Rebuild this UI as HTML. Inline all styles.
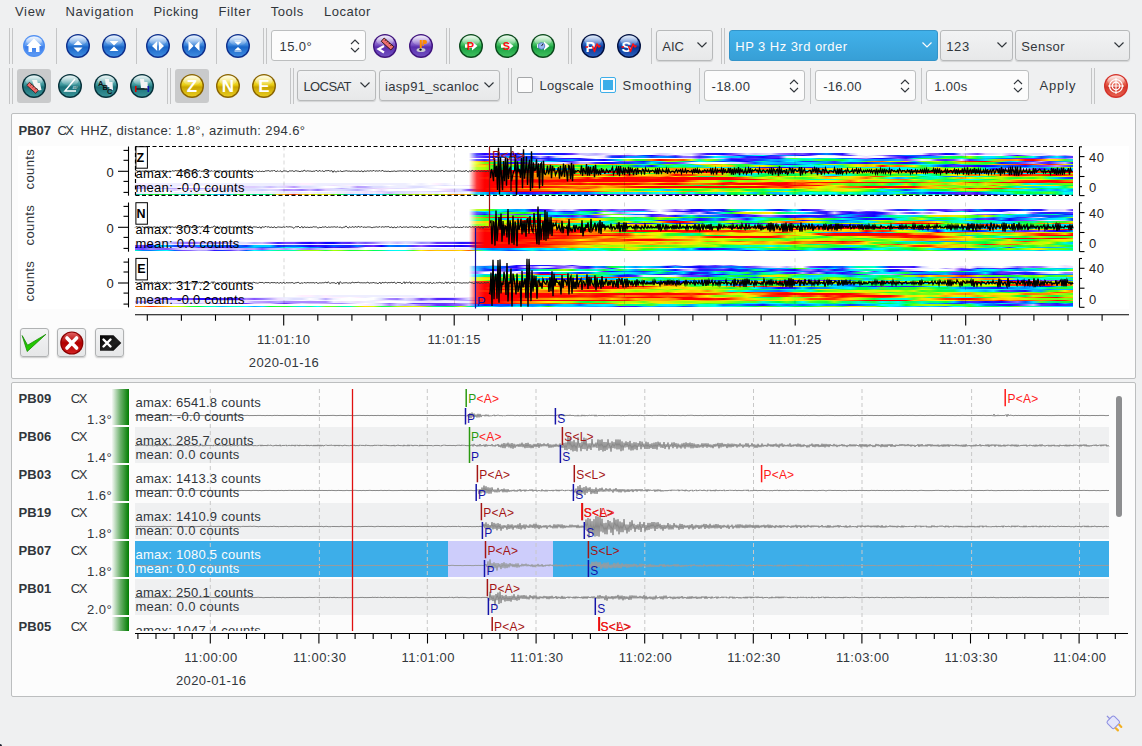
<!DOCTYPE html>
<html><head><meta charset="utf-8"><style>
html,body{margin:0;padding:0}
body{width:1142px;height:746px;overflow:hidden;position:relative;background:#eff0f1;font-family:"Liberation Sans", sans-serif;}
.t{position:absolute;white-space:nowrap;line-height:1;}
svg{overflow:visible}
</style></head><body>
<div class="t" style="left:15.0px;top:4.7px;font-size:13px;color:#31363b;font-weight:normal;letter-spacing:0.68px;">View</div>
<div class="t" style="left:65.4px;top:4.7px;font-size:13px;color:#31363b;font-weight:normal;letter-spacing:0.75px;">Navigation</div>
<div class="t" style="left:153.4px;top:4.7px;font-size:13px;color:#31363b;font-weight:normal;letter-spacing:0.50px;">Picking</div>
<div class="t" style="left:218.5px;top:4.7px;font-size:13px;color:#31363b;font-weight:normal;letter-spacing:0.62px;">Filter</div>
<div class="t" style="left:270.7px;top:4.7px;font-size:13px;color:#31363b;font-weight:normal;letter-spacing:0.56px;">Tools</div>
<div class="t" style="left:324.0px;top:4.7px;font-size:13px;color:#31363b;font-weight:normal;letter-spacing:0.50px;">Locator</div>
<div style="position:absolute;left:9px;top:28px;width:1px;height:36px;background:#c4c5c6"></div><div style="position:absolute;left:12px;top:28px;width:1px;height:36px;background:#c4c5c6"></div>
<div style="position:absolute;left:56px;top:28px;width:1px;height:36px;background:#c4c5c6"></div>
<div style="position:absolute;left:136px;top:28px;width:1px;height:36px;background:#c4c5c6"></div>
<div style="position:absolute;left:216px;top:28px;width:1px;height:36px;background:#c4c5c6"></div>
<div style="position:absolute;left:651px;top:28px;width:1px;height:36px;background:#c4c5c6"></div>
<div style="position:absolute;left:263px;top:28px;width:1px;height:36px;background:#c4c5c6"></div><div style="position:absolute;left:266px;top:28px;width:1px;height:36px;background:#c4c5c6"></div>
<div style="position:absolute;left:446px;top:28px;width:1px;height:36px;background:#c4c5c6"></div><div style="position:absolute;left:449px;top:28px;width:1px;height:36px;background:#c4c5c6"></div>
<div style="position:absolute;left:568px;top:28px;width:1px;height:36px;background:#c4c5c6"></div><div style="position:absolute;left:571px;top:28px;width:1px;height:36px;background:#c4c5c6"></div>
<div style="position:absolute;left:721px;top:28px;width:1px;height:36px;background:#c4c5c6"></div><div style="position:absolute;left:724px;top:28px;width:1px;height:36px;background:#c4c5c6"></div>
<div style="position:absolute;left:9px;top:68px;width:1px;height:36px;background:#c4c5c6"></div><div style="position:absolute;left:12px;top:68px;width:1px;height:36px;background:#c4c5c6"></div>
<div style="position:absolute;left:167px;top:68px;width:1px;height:36px;background:#c4c5c6"></div><div style="position:absolute;left:170px;top:68px;width:1px;height:36px;background:#c4c5c6"></div>
<div style="position:absolute;left:290px;top:68px;width:1px;height:36px;background:#c4c5c6"></div><div style="position:absolute;left:293px;top:68px;width:1px;height:36px;background:#c4c5c6"></div>
<div style="position:absolute;left:508px;top:68px;width:1px;height:36px;background:#c4c5c6"></div><div style="position:absolute;left:511px;top:68px;width:1px;height:36px;background:#c4c5c6"></div>
<div style="position:absolute;left:1091px;top:68px;width:1px;height:36px;background:#c4c5c6"></div><div style="position:absolute;left:1094px;top:68px;width:1px;height:36px;background:#c4c5c6"></div>
<div style="position:absolute;left:699px;top:68px;width:1px;height:36px;background:#c4c5c6"></div>
<div style="position:absolute;left:810px;top:68px;width:1px;height:36px;background:#c4c5c6"></div>
<div style="position:absolute;left:921px;top:68px;width:1px;height:36px;background:#c4c5c6"></div>
<div style="position:absolute;left:17px;top:69px;width:34px;height:34px;background:#c9cacb;border-radius:3px"></div>
<div style="position:absolute;left:175px;top:69px;width:34px;height:34px;background:#c9cacb;border-radius:3px"></div>
<div style="position:absolute;left:271px;top:30px;width:95px;height:31px;background:#fcfcfc;border:1px solid #bcbebf;border-radius:3px;box-sizing:border-box;"></div><div class="t" style="left:279.5px;top:39.7px;font-size:13px;color:#31363b;font-weight:normal;letter-spacing:0.40px;">15.0°</div><svg style="position:absolute;left:349px;top:36.5px" width="12" height="18"><path d="M2 7 L6 3 L10 7 M2 11 L6 15 L10 11" fill="none" stroke="#31363b" stroke-width="1.1"/></svg>
<div style="position:absolute;left:656px;top:30px;width:57px;height:31px;background:linear-gradient(#f2f3f4,#e7e8e9);border:1px solid #b7b9ba;border-radius:3px;box-sizing:border-box;box-shadow:0 1px 1px rgba(0,0,0,0.12);"></div><div class="t" style="left:662.3px;top:40.0px;font-size:13px;color:#31363b;font-weight:normal;letter-spacing:-0.09px;">AIC</div><svg style="position:absolute;left:695.5px;top:41.0px" width="12" height="8"><path d="M1.5 1.5 L6 6 L10.5 1.5" fill="none" stroke="#31363b" stroke-width="1.2"/></svg>
<div style="position:absolute;left:729px;top:30px;width:209px;height:31px;background:linear-gradient(#41b1ea,#379fd6);border:1px solid #3394c9;border-radius:3px;box-sizing:border-box;"></div><div class="t" style="left:735.3px;top:40.0px;font-size:13px;color:#fcfcfc;font-weight:normal;letter-spacing:0.45px;">HP 3 Hz 3rd order</div><svg style="position:absolute;left:920.5px;top:41.0px" width="12" height="8"><path d="M1.5 1.5 L6 6 L10.5 1.5" fill="none" stroke="#fcfcfc" stroke-width="1.2"/></svg>
<div style="position:absolute;left:940px;top:30px;width:73px;height:31px;background:linear-gradient(#f2f3f4,#e7e8e9);border:1px solid #b7b9ba;border-radius:3px;box-sizing:border-box;box-shadow:0 1px 1px rgba(0,0,0,0.12);"></div><div class="t" style="left:946.2px;top:40.0px;font-size:13px;color:#31363b;font-weight:normal;letter-spacing:0.65px;">123</div><svg style="position:absolute;left:995.5px;top:41.0px" width="12" height="8"><path d="M1.5 1.5 L6 6 L10.5 1.5" fill="none" stroke="#31363b" stroke-width="1.2"/></svg>
<div style="position:absolute;left:1015px;top:30px;width:115px;height:31px;background:linear-gradient(#f2f3f4,#e7e8e9);border:1px solid #b7b9ba;border-radius:3px;box-sizing:border-box;box-shadow:0 1px 1px rgba(0,0,0,0.12);"></div><div class="t" style="left:1021.2px;top:40.0px;font-size:13px;color:#31363b;font-weight:normal;letter-spacing:0.44px;">Sensor</div><svg style="position:absolute;left:1112.5px;top:41.0px" width="12" height="8"><path d="M1.5 1.5 L6 6 L10.5 1.5" fill="none" stroke="#31363b" stroke-width="1.2"/></svg>
<div style="position:absolute;left:297px;top:70px;width:79px;height:31px;background:linear-gradient(#f2f3f4,#e7e8e9);border:1px solid #b7b9ba;border-radius:3px;box-sizing:border-box;box-shadow:0 1px 1px rgba(0,0,0,0.12);"></div><div class="t" style="left:303.5px;top:80.0px;font-size:13px;color:#31363b;font-weight:normal;letter-spacing:-0.61px;">LOCSAT</div><svg style="position:absolute;left:358.5px;top:81.0px" width="12" height="8"><path d="M1.5 1.5 L6 6 L10.5 1.5" fill="none" stroke="#31363b" stroke-width="1.2"/></svg>
<div style="position:absolute;left:379px;top:70px;width:121px;height:31px;background:linear-gradient(#f2f3f4,#e7e8e9);border:1px solid #b7b9ba;border-radius:3px;box-sizing:border-box;box-shadow:0 1px 1px rgba(0,0,0,0.12);"></div><div class="t" style="left:385.0px;top:80.0px;font-size:13px;color:#31363b;font-weight:normal;letter-spacing:0.32px;">iasp91_scanloc</div><svg style="position:absolute;left:482.5px;top:81.0px" width="12" height="8"><path d="M1.5 1.5 L6 6 L10.5 1.5" fill="none" stroke="#31363b" stroke-width="1.2"/></svg>
<div style="position:absolute;left:517px;top:77px;width:16px;height:16px;border:1px solid #a5a7a9;border-radius:2px;box-sizing:border-box;background:#fcfcfc;"></div>
<div class="t" style="left:539.4px;top:79.4px;font-size:13px;color:#31363b;font-weight:normal;letter-spacing:0.32px;">Logscale</div>
<div style="position:absolute;left:600px;top:77px;width:16px;height:16px;border:1px solid #a5a7a9;border-radius:2px;box-sizing:border-box;background:#fcfcfc;border-color:#3daee9;"></div><div style="position:absolute;left:603px;top:80px;width:10px;height:10px;background:#3daee9"></div>
<div class="t" style="left:622.4px;top:79.4px;font-size:13px;color:#31363b;font-weight:normal;letter-spacing:0.87px;">Smoothing</div>
<div style="position:absolute;left:704px;top:70px;width:101px;height:31px;background:#fcfcfc;border:1px solid #bcbebf;border-radius:3px;box-sizing:border-box;"></div><div class="t" style="left:711.5px;top:79.7px;font-size:13px;color:#31363b;font-weight:normal;letter-spacing:0.30px;">-18.00</div><svg style="position:absolute;left:788px;top:76.5px" width="12" height="18"><path d="M2 7 L6 3 L10 7 M2 11 L6 15 L10 11" fill="none" stroke="#31363b" stroke-width="1.1"/></svg>
<div style="position:absolute;left:815px;top:70px;width:101px;height:31px;background:#fcfcfc;border:1px solid #bcbebf;border-radius:3px;box-sizing:border-box;"></div><div class="t" style="left:823.2px;top:79.7px;font-size:13px;color:#31363b;font-weight:normal;letter-spacing:0.30px;">-16.00</div><svg style="position:absolute;left:899px;top:76.5px" width="12" height="18"><path d="M2 7 L6 3 L10 7 M2 11 L6 15 L10 11" fill="none" stroke="#31363b" stroke-width="1.1"/></svg>
<div style="position:absolute;left:926px;top:70px;width:103px;height:31px;background:#fcfcfc;border:1px solid #bcbebf;border-radius:3px;box-sizing:border-box;"></div><div class="t" style="left:934.3px;top:79.7px;font-size:13px;color:#31363b;font-weight:normal;letter-spacing:0.30px;">1.00s</div><svg style="position:absolute;left:1012px;top:76.5px" width="12" height="18"><path d="M2 7 L6 3 L10 7 M2 11 L6 15 L10 11" fill="none" stroke="#31363b" stroke-width="1.1"/></svg>
<div class="t" style="left:1039.4px;top:79.4px;font-size:13px;color:#31363b;font-weight:normal;letter-spacing:0.87px;">Apply</div>
<div style="position:absolute;left:11px;top:113px;width:1125px;height:266px;background:#fcfcfc;border:1px solid #bcbebf;border-radius:2px;box-sizing:border-box"></div>
<div style="position:absolute;left:11px;top:382px;width:1125px;height:315px;background:#fcfcfc;border:1px solid #bcbebf;border-radius:2px;box-sizing:border-box"></div>
<div class="t" style="left:18.6px;top:123.6px;font-size:13px;color:#31363b;font-weight:bold;letter-spacing:-0.04px;">PB07</div>
<div class="t" style="left:57.4px;top:123.6px;font-size:13px;color:#31363b;font-weight:normal;letter-spacing:-1.56px;">CX</div>
<div class="t" style="left:80.5px;top:123.6px;font-size:13px;color:#31363b;font-weight:normal;letter-spacing:0.40px;">HHZ, distance: 1.8°, azimuth: 294.6°</div>
<div style="position:absolute;left:18px;top:146px;width:1111px;height:163px;background:#ffffff"></div>
<div style="position:absolute;left:135px;top:153.0px;width:938px;height:42.69999999999999px;overflow:hidden"><div style="height:1.525px;background:linear-gradient(90deg,#fff,#fff,#fff,#fff,#fff,#fff,#fff,#fff,#fff,#fff,#fff,#fff,#fff,#fff,#fff,#fff,#fff,#fff,#fff,#fff,#fff,#fff,#fff,#fff,#fff,#fff,#fff,#fff,#fff,#fff,#fff,#fff,#fff,#fff,#fff,#fff,#fff,#fff,#fff,#fff,#fff,#fff,#fff,#54f,#20f,#52f,#12f,#11f,#10f,#08f,#15f,#42f,#14f,#11f,#21f,#63f,#cbf,#ccf,#baf,#dcf,#eef,#fff,#edf,#fff,#fff,#fff,#dcf,#ddf,#fff,#eef,#ddf,#97f,#31f,#21f,#11f,#63f,#a8f,#ddf,#cbf,#dcf,#ddf,#97f,#85f,#63f,#75f,#31f,#14f,#08f,#13f,#21f,#ccf,#fff,#fff,#fff,#fff,#fff,#fff,#fff,#fff,#eef,#85f,#75f,#10f,#12f,#ddf,#a8f,#74f,#dcf,#ddf,#eef,#cbf,#ddf,#eef,#ddf,#ddf,#fff,#fff,#fff,#fff)"></div><div style="height:1.525px;background:linear-gradient(90deg,#fff,#fff,#fff,#fff,#fff,#fff,#fff,#fff,#fff,#fff,#fff,#fff,#fff,#fff,#fff,#fff,#fff,#fff,#fff,#fff,#fff,#fff,#fff,#fff,#fff,#fff,#fff,#fff,#fff,#fff,#fff,#fff,#fff,#fff,#fff,#fff,#fff,#fff,#fff,#fff,#fff,#fff,#fff,#46f,#97f,#cbf,#85f,#74f,#53f,#ddf,#edf,#fff,#fff,#fff,#eef,#fff,#fff,#cbf,#ccf,#eef,#75f,#63f,#74f,#97f,#05f,#10f,#85f,#baf,#74f,#ddf,#fff,#86f,#edf,#fff,#b9f,#96f,#21f,#08f,#0df,#0fe,#12f,#07f,#09f,#06f,#20f,#74f,#fff,#eef,#ddf,#74f,#63f,#ddf,#fff,#ddf,#a8f,#53f,#13f,#07f,#06f,#52f,#21f,#a8f,#eef,#dcf,#cbf,#fff,#fff,#fff,#fff,#fff,#96f,#21f,#97f,#eef,#eef,#a8f,#ddf,#a8f,#fef)"></div><div style="height:1.525px;background:linear-gradient(90deg,#fff,#fff,#fff,#fff,#fff,#fff,#fff,#fff,#fff,#fff,#fff,#fff,#fff,#fff,#fff,#fff,#fff,#fff,#fff,#fff,#fff,#fff,#fff,#fff,#fff,#fff,#fff,#fff,#fff,#fff,#fff,#fff,#fff,#fff,#fff,#fff,#fff,#fff,#fff,#fff,#fff,#fff,#fff,#75f,#42f,#11f,#05f,#0af,#12f,#14f,#11f,#cbf,#42f,#ccf,#fff,#fff,#fff,#fff,#fff,#edf,#14f,#12f,#09f,#09f,#09f,#14f,#08f,#07f,#13f,#86f,#86f,#42f,#06f,#0ef,#0ef,#0bf,#0cf,#12f,#31f,#10f,#42f,#52f,#eef,#fff,#fff,#fff,#fff,#fff,#fff,#fff,#fff,#fff,#edf,#fff,#fff,#97f,#52f,#20f,#13f,#09f,#0af,#0af,#0f5,#0f5,#1f3,#af0,#0f6,#0ef,#0ef,#0f9,#0ff,#4f2,#0f6,#0ff,#14f,#09f,#0ef,#06f,#63f)"></div><div style="height:1.525px;background:linear-gradient(90deg,#fff,#fff,#fff,#fff,#fff,#fff,#fff,#fff,#fff,#fff,#fff,#fff,#fff,#fff,#fff,#fff,#fff,#fff,#fff,#fff,#fff,#fff,#fff,#fff,#fff,#fff,#fff,#fff,#fff,#fff,#fff,#fff,#fff,#fff,#fff,#fff,#fff,#fff,#fff,#fff,#fff,#fff,#fff,#fff,#eef,#fff,#fff,#fff,#74f,#07f,#12f,#13f,#21f,#06f,#31f,#21f,#21f,#a9f,#fff,#fff,#fff,#fff,#fff,#fff,#fff,#fff,#fff,#fff,#fff,#eef,#ddf,#97f,#cbf,#eef,#cbf,#42f,#63f,#42f,#53f,#14f,#31f,#20f,#0fa,#5f2,#0fd,#0ff,#0bf,#0f9,#0cf,#06f,#06f,#74f,#a8f,#21f,#10f,#13f,#85f,#31f,#0fb,#1f3,#2f3,#3f3,#6f1,#0f6,#0fe,#2f3,#1f3,#0bf,#09f,#06f,#05f,#52f,#53f,#53f,#42f,#b9f,#a8f,#86f,#cbf)"></div><div style="height:1.525px;background:linear-gradient(90deg,#fff,#fff,#fff,#fff,#fff,#fff,#fff,#fff,#fff,#fff,#fff,#fff,#fff,#fff,#fff,#fff,#fff,#fff,#fff,#fff,#fff,#fff,#fff,#fff,#fff,#fff,#fff,#fff,#fff,#fff,#fff,#fff,#fff,#fff,#fff,#fff,#fff,#fff,#fff,#fff,#fff,#fff,#fff,#65f,#32f,#85f,#ddf,#a8f,#52f,#53f,#09f,#97f,#12f,#14f,#07f,#09f,#13f,#21f,#14f,#20f,#07f,#0fc,#cf0,#2f3,#3f2,#f70,#f00,#f30,#f60,#f50,#df0,#0fa,#9f0,#5f2,#0bf,#11f,#10f,#42f,#31f,#05f,#0af,#09f,#0cf,#0ef,#0f8,#0fa,#5f2,#0f4,#1f3,#0f4,#0fe,#0cf,#08f,#0af,#08f,#09f,#0bf,#74f,#a9f,#eef,#ddf,#63f,#42f,#74f,#edf,#42f,#09f,#0df,#7f1,#f90,#f80,#fa0,#f10,#f00,#f70,#fe0,#fd0,#4f2,#0df)"></div><div style="height:1.525px;background:linear-gradient(90deg,#fff,#fff,#fff,#fff,#fff,#fff,#fff,#fff,#fff,#fff,#fff,#fff,#fff,#fff,#fff,#fff,#fff,#fff,#fff,#fff,#fff,#fff,#fff,#fff,#fff,#fff,#fff,#fff,#fff,#fff,#fff,#fff,#fff,#fff,#fff,#fff,#fff,#fff,#fff,#fff,#fff,#fff,#fff,#fd3,#f60,#f90,#bf0,#af0,#4f2,#0f8,#0fb,#0cf,#0ef,#09f,#11f,#53f,#edf,#fff,#fff,#fff,#fff,#74f,#85f,#53f,#11f,#0af,#0ff,#bf0,#8f1,#0f6,#15f,#0ef,#0fa,#08f,#13f,#08f,#12f,#10f,#0af,#0fa,#09f,#05f,#0ef,#0fe,#13f,#31f,#06f,#0af,#42f,#0fa,#0ef,#0fc,#4f2,#f80,#f60,#ee0,#8f0,#fd0,#0bf,#af0,#9f0,#cf0,#0f3,#9f0,#f60,#f10,#f00,#f00,#f70,#7f1,#0bf,#0fe,#14f,#53f,#cbf,#42f,#09f,#0af,#5f2)"></div><div style="height:1.525px;background:linear-gradient(90deg,#fff,#fff,#fff,#fff,#fff,#fff,#fff,#fff,#fff,#fff,#fff,#fff,#fff,#fff,#fff,#fff,#fff,#fff,#fff,#fff,#fff,#fff,#fff,#fff,#fff,#fff,#fff,#fff,#fff,#fff,#fff,#fff,#fff,#fff,#fff,#fff,#fff,#fff,#fff,#fff,#fff,#fff,#fff,#ef3,#7f1,#2f3,#0ef,#13f,#31f,#31f,#ddf,#eef,#ddf,#ddf,#eef,#74f,#baf,#baf,#42f,#10f,#20f,#05f,#13f,#07f,#05f,#0fd,#07f,#52f,#63f,#86f,#eef,#fff,#eef,#fff,#fff,#ddf,#ddf,#86f,#05f,#0bf,#0cf,#0af,#0af,#0bf,#0df,#0cf,#0bf,#08f,#14f,#08f,#13f,#14f,#20f,#06f,#09f,#07f,#31f,#10f,#12f,#09f,#0f4,#4f2,#0f4,#4f2,#bf0,#6f1,#6f1,#1f3,#0f5,#11f,#14f,#52f,#75f,#baf,#63f,#42f,#97f,#cbf,#21f)"></div><div style="height:1.525px;background:linear-gradient(90deg,#fff,#fff,#fff,#fff,#fff,#fff,#fff,#fff,#fff,#fff,#fff,#fff,#fff,#fff,#fff,#fff,#fff,#fff,#fff,#fff,#fff,#fff,#fff,#fff,#fff,#fff,#fff,#fff,#fff,#fff,#fff,#fff,#fff,#fff,#fff,#fff,#fff,#fff,#fff,#fff,#fff,#fff,#fff,#df3,#f90,#f90,#f90,#f90,#fd0,#fa0,#f30,#f70,#f70,#f80,#fa0,#f80,#fc0,#fb0,#fe0,#cf0,#f90,#fb0,#6f1,#5f2,#0fd,#6f1,#1f3,#8f1,#3f2,#0fc,#0f5,#fd0,#fd0,#f90,#bf0,#4f2,#0f5,#3f2,#0cf,#0cf,#06f,#07f,#31f,#13f,#0af,#0ef,#0f4,#bf0,#cf0,#7f1,#af0,#fd0,#8f0,#de0,#8f1,#0f5,#0f4,#0f7,#0fc,#0ff,#0ff,#0cf,#07f,#13f,#0df,#0f6,#0f5,#4f2,#fb0,#f90,#f70,#f40,#f00,#f30,#fa0,#f10,#f60,#fd0,#af0)"></div><div style="height:1.525px;background:linear-gradient(90deg,#fff,#fff,#fff,#fff,#fff,#fff,#fff,#fff,#fff,#fff,#fff,#fff,#fff,#fff,#fff,#fff,#fff,#fff,#fff,#fff,#fff,#fff,#fff,#fff,#fff,#fff,#fff,#fff,#fff,#fff,#fff,#fff,#fff,#fff,#fff,#fff,#fff,#fff,#fff,#fff,#fff,#fff,#fff,#ee3,#fd0,#3f2,#8f1,#6f1,#2f3,#0f5,#0f8,#0f6,#7f1,#1f3,#ee0,#4f2,#0f3,#0fe,#0f4,#2f3,#0f7,#0f5,#1f3,#06f,#09f,#10f,#0df,#0f6,#0fb,#0f7,#0df,#0cf,#7f1,#ee0,#fd0,#fb0,#0f4,#4f2,#bf0,#fe0,#9f0,#1f3,#0ff,#0f8,#0fc,#0fe,#0fd,#0ef,#0df,#0f8,#af0,#fe0,#fa0,#fd0,#f00,#fa0,#f60,#fa0,#fe0,#2f3,#0df,#07f,#11f,#53f,#42f,#31f,#10f,#10f,#11f,#07f,#13f,#14f,#11f,#08f,#63f,#85f,#b9f,#74f,#05f)"></div><div style="height:1.525px;background:linear-gradient(90deg,#fff,#fff,#fff,#fff,#fff,#fff,#fff,#fff,#fff,#fff,#fff,#fff,#fff,#fff,#fff,#fff,#fff,#fff,#fff,#fff,#fff,#fff,#fff,#fff,#fff,#fff,#fff,#fff,#fff,#fff,#fff,#fff,#fff,#fff,#fff,#fff,#fff,#fff,#fff,#fff,#fff,#fff,#fff,#bf3,#af0,#6f1,#0f9,#0ff,#0fa,#5f2,#fe0,#fe0,#9f0,#cf0,#fe0,#fd0,#9f0,#6f1,#0f8,#3f3,#4f2,#ee0,#3f2,#1f3,#0f7,#3f2,#1f3,#0f4,#4f2,#4f2,#2f3,#2f3,#0df,#0fd,#0df,#0fd,#0f7,#09f,#06f,#12f,#10f,#11f,#10f,#15f,#13f,#21f,#09f,#0af,#0cf,#0fb,#2f3,#0fa,#0ef,#0df,#0fc,#0ef,#0ef,#0fc,#4f2,#2f3,#7f1,#ee0,#0f5,#0f6,#0fa,#8f1,#3f2,#0af,#0af,#0af,#05f,#0fd,#0af,#0cf,#0af,#0f8,#5f2,#8f1,#de0)"></div><div style="height:1.525px;background:linear-gradient(90deg,#fff,#fff,#fff,#fff,#fff,#fff,#fff,#fff,#fff,#fff,#fff,#fff,#fff,#fff,#fff,#fff,#fff,#fff,#fff,#fff,#fff,#fff,#fff,#fff,#fff,#fff,#fff,#fff,#fff,#fff,#fff,#fff,#fff,#fff,#fff,#fff,#fff,#fff,#fff,#fff,#fff,#fff,#fff,#bf3,#af0,#4f2,#2f3,#0ff,#0fc,#0fc,#0fc,#2f3,#0fa,#0bf,#0df,#0df,#6f1,#9f0,#2f3,#5f2,#0fb,#0fd,#ee0,#fe0,#fd0,#8f1,#ee0,#fa0,#f80,#f90,#f90,#fe0,#f90,#fa0,#fb0,#af0,#5f2,#7f1,#fe0,#f50,#fa0,#fc0,#fc0,#fa0,#de0,#fa0,#f70,#fd0,#de0,#fd0,#fe0,#fd0,#4f2,#de0,#3f2,#0cf,#0fd,#0fe,#0ff,#3f2,#4f2,#fd0,#af0,#cf0,#bf0,#5f2,#1f3,#0fd,#11f,#74f,#edf,#eef,#dcf,#86f,#31f,#08f,#0af,#0df,#0cf)"></div><div style="height:1.525px;background:linear-gradient(90deg,#fff,#fff,#fff,#fff,#fff,#fff,#fff,#fff,#fff,#fff,#fff,#fff,#fff,#fff,#fff,#fff,#fff,#fff,#fff,#fff,#fff,#fff,#fff,#fff,#fff,#fff,#fff,#fff,#fff,#fff,#fff,#fff,#fff,#fff,#fff,#fff,#fff,#fff,#fff,#fff,#fff,#fff,#fff,#f33,#f00,#f00,#f00,#f00,#f00,#f00,#f10,#f60,#f70,#fb0,#fd0,#fd0,#9f0,#7f1,#cf0,#1f3,#0f8,#0f8,#0ff,#4f2,#0df,#2f3,#bf0,#8f1,#fb0,#f80,#fe0,#f40,#af0,#fa0,#fc0,#5f2,#0f6,#0f4,#0ff,#1f3,#0f6,#0f9,#0f7,#0cf,#0ef,#0fe,#0cf,#0f5,#0ef,#0fd,#0f3,#5f2,#6f1,#7f1,#0f3,#7f1,#7f1,#f90,#f70,#f60,#fb0,#f70,#f40,#f00,#f00,#f00,#fc0,#fb0,#fb0,#fb0,#f80,#f90,#cf0,#4f2,#0f6,#7f1,#0fe,#0cf,#0af)"></div><div style="height:1.525px;background:linear-gradient(90deg,#fff,#fff,#fff,#fff,#fff,#fff,#fff,#fff,#fff,#fff,#fff,#fff,#fff,#fff,#fff,#fff,#fff,#fff,#fff,#fff,#fff,#fff,#fff,#fff,#fff,#fff,#fff,#fff,#fff,#fff,#fff,#fff,#fff,#fff,#fff,#fff,#fff,#fff,#fff,#fff,#fff,#fff,#fff,#f33,#f00,#f00,#f00,#f00,#f00,#f00,#f30,#f40,#fa0,#f70,#f50,#f70,#f70,#f40,#f00,#f00,#f00,#f00,#f10,#fa0,#fe0,#fc0,#fa0,#f70,#fa0,#f70,#f40,#f00,#f00,#f00,#f00,#f00,#f50,#f10,#f70,#f40,#fa0,#f90,#f90,#fc0,#f60,#f90,#f60,#f00,#f70,#f70,#fc0,#fc0,#fc0,#fa0,#fa0,#fa0,#fa0,#f90,#f70,#f00,#f00,#f00,#f00,#f00,#f00,#f00,#f00,#f10,#f90,#f70,#fb0,#f60,#f00,#f00,#f40,#f00,#f00,#f00,#f00)"></div><div style="height:1.525px;background:linear-gradient(90deg,#fff,#fff,#fff,#fff,#fff,#fff,#fff,#fff,#fff,#fff,#fff,#fff,#fff,#fff,#fff,#fff,#fff,#fff,#fff,#fff,#fff,#fff,#fff,#fff,#fff,#fff,#fff,#fff,#fff,#fff,#fff,#fff,#fff,#fff,#fff,#fff,#fff,#fff,#fff,#fff,#fff,#fff,#fff,#f33,#f00,#f00,#f00,#f30,#f40,#fa0,#f80,#fe0,#cf0,#6f1,#8f0,#0f4,#5f2,#0f4,#0f7,#0ff,#0f5,#0f3,#af0,#1f3,#5f2,#2f3,#5f1,#fa0,#f80,#fa0,#fc0,#bf0,#fc0,#de0,#af0,#8f0,#0f8,#4f2,#0fe,#0f9,#3f3,#0ef,#0fe,#0f6,#7f1,#4f2,#0bf,#3f3,#8f0,#3f2,#0f7,#8f1,#4f2,#2f3,#6f1,#cf0,#5f2,#4f2,#de0,#de0,#1f3,#bf0,#4f2,#0f8,#0f5,#0f3,#0fe,#08f,#0fe,#0fb,#0bf,#0af,#0ef,#0df,#0f9,#0f5,#0f3,#5f2,#af0)"></div><div style="height:1.525px;background:linear-gradient(90deg,#fff,#fff,#fff,#fff,#fff,#fff,#fff,#fff,#fff,#fff,#fff,#fff,#fff,#fff,#fff,#fff,#fff,#fff,#fff,#fff,#fff,#fff,#fff,#fff,#fff,#fff,#fff,#fff,#fff,#fff,#fff,#fff,#fff,#fff,#fff,#fff,#fff,#fff,#fff,#fff,#fff,#fff,#fff,#f33,#f00,#f00,#f30,#f70,#f80,#f90,#f70,#fb0,#f90,#fc0,#f80,#f50,#f70,#f70,#f70,#f90,#f20,#f80,#f10,#f90,#fe0,#fb0,#fb0,#fa0,#f00,#f30,#f30,#fa0,#fa0,#f80,#fb0,#4f2,#0fa,#0cf,#0fa,#0f5,#0f5,#3f2,#1f3,#0f5,#2f3,#8f1,#bf0,#0fe,#0df,#0fa,#0fb,#2f3,#0f3,#7f1,#0f4,#1f3,#3f2,#0f7,#0f6,#0ff,#0fb,#0f4,#8f1,#fe0,#ee0,#f80,#f80,#ee0,#f90,#f70,#f10,#f00,#f10,#f40,#f30,#f00,#f00,#f30,#f60)"></div><div style="height:1.525px;background:linear-gradient(90deg,#fff,#fff,#fff,#fff,#fff,#fff,#fff,#fff,#fff,#fff,#fff,#fff,#fff,#fff,#fff,#fff,#fff,#fff,#fff,#fff,#fff,#fff,#fff,#fff,#fff,#fff,#fff,#fff,#fff,#fff,#fff,#fff,#fff,#fff,#fff,#fff,#fff,#fff,#fff,#fff,#fff,#fff,#fff,#f33,#f00,#f10,#f00,#f20,#f00,#f70,#f80,#f80,#f80,#fc0,#f90,#ee0,#de0,#de0,#cf0,#fe0,#8f1,#fe0,#f60,#f90,#f70,#f80,#fb0,#f50,#fd0,#f80,#cf0,#3f3,#0f8,#6f1,#9f0,#9f0,#1f3,#bf0,#0f6,#3f2,#fd0,#f80,#de0,#fe0,#bf0,#ee0,#de0,#f70,#f60,#de0,#fd0,#fd0,#fa0,#f40,#f50,#af0,#cf0,#de0,#bf0,#0f4,#0fc,#0ff,#08f,#07f,#0fc,#0f9,#0fe,#0f9,#3f2,#fd0,#fc0,#f80,#fc0,#de0,#af0,#6f1,#bf0,#fe0,#9f0)"></div><div style="height:1.525px;background:linear-gradient(90deg,#fff,#fff,#fff,#fff,#fff,#fff,#fff,#fff,#fff,#fff,#fff,#fff,#fff,#fff,#fff,#fff,#fff,#fff,#fff,#fff,#fff,#fff,#fff,#fff,#fff,#fff,#fff,#fff,#fff,#fff,#fff,#fff,#fff,#fff,#fff,#fff,#fff,#fff,#fff,#fff,#fff,#fff,#fff,#f33,#f10,#f20,#f50,#f60,#f70,#f30,#f70,#f80,#f60,#f60,#fa0,#f90,#f50,#f00,#f80,#f00,#f00,#f00,#f00,#f00,#f10,#f20,#f10,#f00,#f00,#f00,#f00,#f00,#f00,#f00,#f00,#f00,#f30,#f70,#8f0,#ee0,#8f0,#cf0,#7f1,#5f2,#2f3,#6f1,#bf0,#fb0,#fe0,#bf0,#de0,#fb0,#f60,#bf0,#4f2,#0ff,#0af,#0ef,#0f4,#0fa,#0fa,#0fc,#2f3,#bf0,#f90,#fe0,#9f0,#df0,#bf0,#af0,#3f3,#2f3,#5f2,#3f2,#9f0,#0fa,#0bf,#15f,#31f)"></div><div style="height:1.525px;background:linear-gradient(90deg,#fff,#fff,#fff,#fff,#fff,#fff,#fff,#fff,#fff,#fff,#fff,#fff,#fff,#fff,#fff,#fff,#fff,#fff,#fff,#fff,#fff,#fff,#fff,#fff,#fff,#fff,#fff,#fff,#fff,#fff,#fff,#fff,#fff,#fff,#fff,#fff,#fff,#fff,#fff,#fff,#fff,#fff,#fff,#f33,#f00,#f10,#f30,#f60,#f40,#f40,#f20,#f30,#f50,#f40,#f10,#f00,#f00,#f00,#f00,#f00,#f00,#f00,#f00,#f00,#f00,#f00,#f00,#f10,#f00,#f00,#f00,#f00,#f00,#f00,#f00,#f00,#f00,#f00,#f00,#f40,#fa0,#bf0,#bf0,#9f0,#7f1,#0f9,#0fa,#0fe,#0fd,#7f1,#fb0,#fc0,#ee0,#fd0,#de0,#fa0,#f70,#f70,#df0,#7f1,#0f9,#6f1,#0f5,#0f5,#0fc,#0ff,#0fd,#0f7,#1f3,#af0,#7f1,#fd0,#ee0,#fd0,#fe0,#9f0,#4f2,#1f3,#3f3)"></div><div style="height:1.525px;background:linear-gradient(90deg,#fff,#fff,#fff,#fff,#fff,#fff,#fff,#fff,#fff,#fff,#fff,#fff,#fff,#fff,#fff,#fff,#fff,#fff,#fff,#fff,#fff,#fff,#fff,#fff,#fff,#fff,#fff,#fff,#fff,#fff,#fff,#fff,#fff,#fff,#fff,#fff,#fff,#fff,#fff,#fff,#fff,#fff,#fff,#f33,#f00,#f00,#f10,#f00,#f00,#f00,#f00,#f00,#f00,#f00,#f00,#f00,#f00,#f00,#f00,#f00,#f00,#f00,#f00,#f00,#f00,#f00,#f00,#f00,#f00,#f00,#f70,#fc0,#de0,#cf0,#4f2,#3f2,#af0,#8f1,#8f0,#de0,#bf0,#8f0,#de0,#fb0,#f90,#fd0,#de0,#fe0,#ee0,#fb0,#f70,#fe0,#7f1,#7f1,#af0,#af0,#7f1,#2f3,#8f1,#5f2,#bf0,#6f1,#0f8,#0f9,#6f1,#5f2,#4f2,#5f2,#9f0,#7f1,#fb0,#f60,#f30,#f30,#f10,#f00,#f10,#f60,#f80)"></div><div style="height:1.525px;background:linear-gradient(90deg,#fff,#fff,#fff,#fff,#fff,#fff,#fff,#fff,#fff,#fff,#fff,#fff,#fff,#fff,#fff,#fff,#fff,#fff,#fff,#fff,#fff,#fff,#fff,#fff,#fff,#fff,#fff,#fff,#fff,#fff,#fff,#fff,#fff,#fff,#fff,#fff,#fff,#fff,#fff,#fff,#fff,#fff,#fff,#f33,#f00,#f00,#f00,#f00,#f00,#f10,#f20,#f10,#f20,#f40,#f20,#f70,#f50,#fc0,#fa0,#fa0,#fb0,#f90,#fa0,#f80,#f70,#fc0,#fd0,#f80,#f70,#fa0,#ee0,#de0,#cf0,#de0,#f50,#f00,#fa0,#f80,#f70,#f50,#f00,#f20,#f00,#f40,#f60,#f00,#f10,#f00,#f00,#f00,#f00,#f00,#f00,#f00,#f00,#f00,#f00,#f00,#f00,#f40,#f80,#f90,#fa0,#fb0,#fc0,#f30,#f20,#fa0,#f60,#f00,#f00,#f00,#f00,#f00,#f00,#f30,#f00,#f00,#f00)"></div><div style="height:1.525px;background:linear-gradient(90deg,#eef,#fef,#eef,#eef,#eef,#eef,#eef,#eef,#eef,#eef,#eef,#eef,#eef,#eef,#eef,#eef,#eef,#eef,#eef,#eef,#eef,#fef,#fef,#eef,#eef,#eef,#eef,#eef,#eef,#eef,#eef,#eef,#eef,#eef,#eef,#fff,#eef,#fff,#fef,#eef,#fff,#fff,#fff,#f33,#f00,#f00,#f00,#f00,#f00,#f20,#f50,#f30,#f30,#f20,#f30,#f10,#f00,#f20,#f00,#f00,#f00,#f00,#f00,#f00,#f40,#f50,#f00,#f00,#f00,#f40,#f70,#f70,#f50,#f30,#f00,#f20,#f00,#f00,#f00,#f00,#f00,#f00,#f00,#f50,#f30,#f90,#fb0,#f90,#6f1,#8f1,#4f2,#5f2,#5f2,#3f2,#9f0,#0f5,#0f9,#9f0,#0f5,#9f0,#9f0,#af0,#6f1,#ee0,#fb0,#bf0,#7f1,#de0,#9f0,#9f0,#6f1,#bf0,#0fa,#0ff,#0fa,#0f7,#3f3,#6f1,#5f2)"></div><div style="height:1.525px;background:linear-gradient(90deg,#ddf,#ddf,#ddf,#edf,#edf,#eef,#edf,#edf,#eef,#eef,#eef,#eef,#eef,#edf,#eef,#eef,#eef,#eef,#eef,#edf,#eef,#eef,#eef,#eef,#eef,#edf,#eef,#fef,#eef,#fff,#eef,#eef,#fff,#eef,#eef,#eef,#eef,#eef,#eef,#ddf,#eef,#eef,#edf,#f33,#f00,#f00,#f20,#f30,#f40,#f50,#f50,#fa0,#f90,#fa0,#fc0,#fc0,#fb0,#fc0,#fb0,#fc0,#f70,#fa0,#f90,#fe0,#fe0,#fd0,#de0,#de0,#9f0,#7f1,#5f2,#0f6,#5f2,#8f1,#4f2,#fe0,#de0,#de0,#fe0,#f90,#f40,#f00,#f20,#f00,#f10,#f10,#f00,#fa0,#fe0,#fd0,#3f2,#5f2,#1f3,#0f5,#5f2,#0f8,#9f0,#ee0,#2f3,#9f0,#fc0,#f90,#f90,#5f2,#bf0,#cf0,#8f1,#cf0,#f60,#fd0,#7f1,#6f1,#fe0,#ee0,#cf0,#fd0,#fc0,#0f4,#0f4)"></div><div style="height:1.525px;background:linear-gradient(90deg,#baf,#cbf,#ddf,#eef,#eef,#eef,#fff,#fff,#fff,#fff,#fff,#fef,#eef,#ddf,#dcf,#dcf,#ddf,#cbf,#ddf,#dcf,#b9f,#ddf,#ddf,#eef,#fff,#fff,#eef,#eef,#b9f,#baf,#ddf,#ddf,#eef,#eef,#eef,#ddf,#ddf,#eef,#fff,#fff,#fff,#fff,#fff,#f33,#f00,#f00,#f00,#f00,#f00,#f00,#f00,#f00,#f10,#f20,#f30,#f50,#f70,#f60,#f50,#fa0,#f90,#f60,#f30,#f10,#f00,#f00,#f00,#f00,#f00,#f00,#f00,#f00,#f00,#f00,#f00,#f00,#f00,#f00,#f00,#f00,#f40,#f50,#f00,#f60,#f90,#fb0,#fe0,#cf0,#de0,#f80,#f60,#f50,#f00,#f00,#f00,#f00,#f00,#f00,#f00,#f70,#fb0,#af0,#7f1,#8f1,#5f1,#5f2,#9f0,#8f0,#af0,#4f2,#0f4,#0ef,#0f9,#0cf,#0df,#0ff,#0ff,#0f6,#de0)"></div><div style="height:1.525px;background:linear-gradient(90deg,#b9f,#baf,#dcf,#dcf,#baf,#baf,#b9f,#b9f,#baf,#baf,#caf,#ddf,#cbf,#ddf,#ddf,#ddf,#eef,#fef,#fff,#fff,#fff,#eef,#edf,#ddf,#edf,#ddf,#baf,#ddf,#ddf,#dcf,#dcf,#edf,#edf,#ddf,#edf,#eef,#fff,#eef,#eef,#fef,#eef,#eef,#eef,#f33,#f00,#f20,#f30,#f40,#f60,#fa0,#fa0,#fa0,#fc0,#fc0,#f90,#f80,#f50,#f40,#fa0,#fd0,#fd0,#fd0,#ee0,#fe0,#df0,#8f0,#6f1,#de0,#de0,#ee0,#cf0,#cf0,#6f1,#4f2,#2f3,#5f2,#2f3,#af0,#af0,#8f0,#df0,#fc0,#fc0,#fd0,#de0,#f80,#cf0,#bf0,#de0,#cf0,#7f1,#6f1,#de0,#fe0,#4f2,#fe0,#8f0,#af0,#bf0,#fd0,#fb0,#fb0,#fd0,#f70,#fb0,#f00,#f40,#f00,#f30,#f30,#f90,#f80,#de0,#7f1,#0f3,#0f8,#0f6,#0fa,#0fa)"></div><div style="height:1.525px;background:linear-gradient(90deg,#fff,#eef,#fff,#fff,#eef,#dcf,#fff,#edf,#ddf,#eef,#ddf,#eef,#ccf,#ddf,#ddf,#ddf,#ccf,#ddf,#dcf,#a8f,#b9f,#97f,#cbf,#97f,#dcf,#ddf,#ddf,#ccf,#baf,#ddf,#fff,#edf,#fff,#fff,#fff,#fff,#fff,#fff,#fff,#edf,#dcf,#ddf,#85f,#e23,#f00,#f10,#f20,#f40,#f40,#f40,#f50,#f60,#f80,#fb0,#fa0,#fb0,#f90,#fb0,#fc0,#de0,#af0,#9f0,#8f0,#3f2,#0f8,#0fc,#0fe,#0bf,#0fa,#0f3,#1f3,#4f2,#6f1,#ee0,#8f1,#6f1,#af0,#0f4,#3f2,#0f5,#0fc,#0f8,#0fd,#0f4,#5f2,#cf0,#de0,#9f0,#fd0,#fd0,#fe0,#cf0,#6f1,#0f4,#0ef,#0bf,#0bf,#13f,#0af,#0fe,#0f7,#0f5,#0f3,#7f1,#de0,#de0,#fd0,#de0,#3f2,#0f5,#0fd,#0fd,#0ef,#0cf,#09f,#0df,#09f,#0fe,#08f)"></div><div style="height:1.525px;background:linear-gradient(90deg,#fff,#fff,#fff,#fff,#fff,#fff,#fff,#fff,#fff,#fff,#eef,#eef,#eef,#eef,#eef,#eef,#eef,#fff,#eef,#eef,#eef,#fff,#fff,#fff,#fff,#fef,#eef,#eef,#eef,#edf,#edf,#dcf,#ddf,#dcf,#ddf,#ddf,#edf,#ddf,#dcf,#dcf,#dcf,#ddf,#ddf,#f33,#f00,#f00,#f00,#f00,#f00,#f00,#f00,#f00,#f00,#f10,#f00,#f30,#f30,#f20,#f50,#f80,#fb0,#fc0,#fc0,#fd0,#fd0,#ee0,#fd0,#fc0,#fc0,#fa0,#f80,#fb0,#fe0,#fd0,#fd0,#cf0,#cf0,#cf0,#5f2,#3f2,#6f1,#af0,#bf0,#8f1,#4f2,#0f4,#5f2,#3f3,#8f1,#af0,#9f0,#6f1,#1f3,#1f3,#0f6,#0fb,#0f6,#0fd,#0ef,#0fe,#0cf,#0fd,#0df,#0fc,#0f4,#0f7,#1f3,#0f9,#0f7,#0f3,#1f3,#0f4,#0f5,#0fa,#0f8,#0f7,#0f7,#0cf,#0cf)"></div><div style="height:1.525px;background:linear-gradient(90deg,#eef,#eef,#eef,#eef,#fff,#eef,#eef,#eef,#eef,#eef,#fff,#eef,#eef,#eef,#eef,#eef,#eef,#eef,#eef,#eef,#edf,#eef,#fef,#eef,#eef,#eef,#eef,#edf,#eef,#edf,#eef,#edf,#cbf,#ddf,#ddf,#edf,#eef,#eef,#eef,#fff,#eef,#eef,#fff,#3bf,#0bf,#05f,#0cf,#08f,#31f,#11f,#31f,#42f,#42f,#10f,#07f,#14f,#07f,#07f,#0cf,#0fb,#0fb,#0ef,#0cf,#0ef,#0af,#0fc,#0ff,#0fc,#0fe,#0f5,#0ff,#0f6,#0f7,#0fa,#0df,#0f4,#0f5,#0fd,#0bf,#0f3,#0bf,#0bf,#0ef,#0f5,#0df,#0ff,#0fc,#0fe,#0ff,#0f5,#0fd,#0f8,#0ef,#0df,#0af,#0df,#0ef,#09f,#14f,#09f,#12f,#10f,#42f,#42f,#52f,#63f,#31f,#08f,#0df,#0df,#0fc,#1f3,#0f4,#0f6,#2f3,#5f2,#0f5,#0ff,#0fb)"></div><div style="height:1.525px;background:linear-gradient(90deg,#0ef,#0f7,#1f3,#1f3,#0f5,#0f5,#0ef,#0fb,#5f2,#0f9,#0ff,#09f,#0fd,#2f3,#2f3,#0fa,#0f7,#0f7,#fd0,#fa0,#f30,#fc0,#ee0,#cf0,#fe0,#7f1,#0f4,#0cf,#0bf,#07f,#0bf,#0df,#0f5,#3f3,#8f1,#af0,#bf0,#fe0,#9f0,#ee0,#f90,#fa0,#fd0,#2fc,#0ef,#0ef,#0ff,#0fc,#0cf,#0cf,#06f,#0bf,#0f8,#0fd,#0fc,#0cf,#0af,#15f,#63f,#31f,#63f,#86f,#75f,#97f,#86f,#a9f,#a8f,#42f,#52f,#63f,#74f,#31f,#05f,#13f,#0af,#0f3,#0f5,#4f2,#0f7,#4f2,#1f3,#0bf,#0fd,#0fb,#0ff,#0f9,#0ef,#0f8,#0ef,#0df,#0f6,#0fc,#0df,#0cf,#0af,#0fc,#6f1,#3f3,#0f3,#0fc,#0ff,#0fd,#0bf,#06f,#32f,#74f,#52f,#42f,#13f,#09f,#09f,#0ff,#0ff,#0fc,#0cf,#0fd,#0f7,#0ef,#0fc)"></div></div>
<div style="position:absolute;left:135px;top:209.0px;width:938px;height:42.69999999999999px;overflow:hidden"><div style="height:1.525px;background:linear-gradient(90deg,#fff,#fff,#fff,#fff,#fff,#fff,#fff,#fff,#fff,#fff,#fff,#fff,#fff,#fff,#fff,#fff,#fff,#fff,#fff,#fff,#fff,#fff,#fff,#fff,#fff,#fff,#fff,#fff,#fff,#fff,#fff,#fff,#fff,#fff,#fff,#fff,#fff,#fff,#fff,#fff,#fff,#fff,#fff,#bf3,#af0,#3f2,#0fd,#0cf,#09f,#0bf,#20f,#31f,#63f,#ddf,#cbf,#ddf,#63f,#42f,#21f,#97f,#63f,#97f,#74f,#63f,#63f,#ddf,#fff,#cbf,#85f,#baf,#21f,#10f,#06f,#12f,#11f,#0f5,#0bf,#0bf,#0df,#0df,#15f,#10f,#07f,#0fe,#20f,#42f,#63f,#eef,#eef,#fff,#fff,#ddf,#fff,#eef,#eef,#86f,#13f,#42f,#0af,#0bf,#52f,#42f,#52f,#86f,#85f,#52f,#09f,#31f,#13f,#11f,#11f,#21f,#07f,#12f,#31f,#ddf,#ddf,#edf,#53f)"></div><div style="height:1.525px;background:linear-gradient(90deg,#fff,#fff,#fff,#fff,#fff,#fff,#fff,#fff,#fff,#fff,#fff,#fff,#fff,#fff,#fff,#fff,#fff,#fff,#fff,#fff,#fff,#fff,#fff,#fff,#fff,#fff,#fff,#fff,#fff,#fff,#fff,#fff,#fff,#fff,#fff,#fff,#fff,#fff,#fff,#fff,#fff,#fff,#fff,#3bf,#0ff,#0cf,#0df,#07f,#0bf,#0df,#42f,#06f,#06f,#75f,#11f,#11f,#0f9,#0f4,#0f5,#4f2,#0ef,#0bf,#0ff,#0df,#0df,#85f,#fff,#a9f,#42f,#20f,#31f,#42f,#63f,#ddf,#42f,#31f,#86f,#fff,#fff,#eef,#fff,#fff,#98f,#eef,#fff,#eef,#42f,#31f,#98f,#42f,#63f,#cbf,#53f,#63f,#edf,#fff,#fff,#fff,#fff,#fff,#fff,#eef,#21f,#07f,#0fc,#11f,#06f,#0af,#06f,#31f,#eef,#fff,#fff,#fff,#fff,#fef,#edf,#eef,#dcf)"></div><div style="height:1.525px;background:linear-gradient(90deg,#fff,#fff,#fff,#fff,#fff,#fff,#fff,#fff,#fff,#fff,#fff,#fff,#fff,#fff,#fff,#fff,#fff,#fff,#fff,#fff,#fff,#fff,#fff,#fff,#fff,#fff,#fff,#fff,#fff,#fff,#fff,#fff,#fff,#fff,#fff,#fff,#fff,#fff,#fff,#fff,#fff,#fff,#fff,#65f,#06f,#0ff,#0f6,#5f2,#4f2,#0f3,#7f1,#3f2,#0ef,#0ff,#08f,#07f,#0fe,#0fa,#06f,#eef,#ddf,#98f,#cbf,#eef,#fff,#fff,#fff,#fff,#fef,#cbf,#75f,#dcf,#13f,#07f,#0fc,#0f4,#bf0,#ee0,#af0,#fe0,#fe0,#0f4,#0f8,#0fc,#0ef,#09f,#13f,#31f,#ddf,#63f,#10f,#42f,#31f,#10f,#21f,#a8f,#ddf,#86f,#53f,#cbf,#97f,#eef,#fff,#fff,#fff,#fff,#fff,#fff,#fff,#fff,#dcf,#fff,#fff,#85f,#13f,#31f,#12f,#14f,#63f)"></div><div style="height:1.525px;background:linear-gradient(90deg,#fff,#fff,#fff,#fff,#fff,#fff,#fff,#fff,#fff,#fff,#fff,#fff,#fff,#fff,#fff,#fff,#fff,#fff,#fff,#fff,#fff,#fff,#fff,#fff,#fff,#fff,#fff,#fff,#fff,#fff,#fff,#fff,#fff,#fff,#fff,#fff,#fff,#fff,#fff,#fff,#fff,#fff,#fff,#64f,#21f,#86f,#63f,#97f,#63f,#63f,#63f,#20f,#0cf,#0ff,#0f8,#0f7,#0f5,#0fe,#cf0,#6f1,#7f1,#6f1,#0ef,#06f,#15f,#21f,#52f,#fff,#dcf,#cbf,#eef,#cbf,#edf,#a9f,#42f,#42f,#10f,#64f,#cbf,#eef,#fff,#eef,#eef,#fef,#cbf,#ddf,#ddf,#32f,#74f,#12f,#09f,#07f,#12f,#20f,#53f,#98f,#fff,#fff,#fff,#eef,#fff,#fff,#fff,#fff,#fff,#fff,#86f,#86f,#53f,#0cf,#2f3,#0ff,#0df,#06f,#0bf,#0f9,#0fb,#12f,#11f)"></div><div style="height:1.525px;background:linear-gradient(90deg,#fff,#fff,#fff,#fff,#fff,#fff,#fff,#fff,#fff,#fff,#fff,#fff,#fff,#fff,#fff,#fff,#fff,#fff,#fff,#fff,#fff,#fff,#fff,#fff,#fff,#fff,#fff,#fff,#fff,#fff,#fff,#fff,#fff,#fff,#fff,#fff,#fff,#fff,#fff,#fff,#fff,#fff,#fff,#3f8,#0f3,#0f5,#4f2,#8f1,#1f3,#4f2,#0ff,#0fc,#08f,#12f,#14f,#31f,#86f,#21f,#63f,#b9f,#fff,#fff,#edf,#ddf,#ddf,#31f,#74f,#74f,#11f,#0af,#0fa,#06f,#07f,#07f,#15f,#14f,#10f,#53f,#31f,#96f,#97f,#63f,#20f,#31f,#21f,#31f,#31f,#21f,#06f,#0df,#09f,#42f,#21f,#10f,#0af,#0f7,#0fc,#0fb,#0cf,#0f9,#bf0,#fd0,#fc0,#ee0,#bf0,#5f2,#3f2,#fd0,#5f2,#0fd,#0cf,#09f,#0af,#06f,#06f,#14f,#14f,#07f,#0bf)"></div><div style="height:1.525px;background:linear-gradient(90deg,#fff,#fff,#fff,#fff,#fff,#fff,#fff,#fff,#fff,#fff,#fff,#fff,#fff,#fff,#fff,#fff,#fff,#fff,#fff,#fff,#fff,#fff,#fff,#fff,#fff,#fff,#fff,#fff,#fff,#fff,#fff,#fff,#fff,#fff,#fff,#fff,#fff,#fff,#fff,#fff,#fff,#fff,#fff,#fa3,#f70,#f20,#f00,#f00,#f00,#f00,#fa0,#fe0,#6f1,#0fa,#0fc,#08f,#0cf,#06f,#12f,#0cf,#0f4,#4f2,#5f2,#0f4,#6f1,#3f2,#de0,#de0,#bf0,#3f2,#2f3,#1f3,#4f2,#0f9,#0fe,#08f,#09f,#0af,#0f8,#0f8,#0af,#09f,#12f,#12f,#07f,#09f,#13f,#63f,#53f,#42f,#21f,#07f,#0f5,#0cf,#0ef,#0df,#0f5,#0fc,#9f0,#3f2,#0f3,#0df,#0f7,#0fb,#8f1,#6f1,#0f8,#0ef,#07f,#09f,#0cf,#13f,#52f,#a9f,#edf,#14f,#08f,#0f8,#af0)"></div><div style="height:1.525px;background:linear-gradient(90deg,#fff,#fff,#fff,#fff,#fff,#fff,#fff,#fff,#fff,#fff,#fff,#fff,#fff,#fff,#fff,#fff,#fff,#fff,#fff,#fff,#fff,#fff,#fff,#fff,#fff,#fff,#fff,#fff,#fff,#fff,#fff,#fff,#fff,#fff,#fff,#fff,#fff,#fff,#fff,#fff,#fff,#fff,#fff,#7f5,#4f2,#0f9,#0af,#0ef,#0df,#0ff,#0f3,#9f0,#fe0,#f90,#fc0,#f40,#fc0,#fe0,#fe0,#af0,#6f1,#0f9,#0f5,#0f8,#0f9,#1f3,#8f0,#1f3,#0f9,#08f,#0bf,#21f,#14f,#0af,#31f,#baf,#86f,#12f,#0df,#0fe,#2f3,#2f3,#3f2,#fa0,#fa0,#fe0,#af0,#3f2,#0f4,#0fc,#0bf,#06f,#11f,#12f,#10f,#10f,#0ef,#0fc,#5f2,#cf0,#0fa,#0f4,#1f3,#0f7,#0ff,#0df,#14f,#63f,#31f,#0bf,#10f,#15f,#09f,#0df,#08f,#0df,#0ef,#0fe,#13f)"></div><div style="height:1.525px;background:linear-gradient(90deg,#fff,#fff,#fff,#fff,#fff,#fff,#fff,#fff,#fff,#fff,#fff,#fff,#fff,#fff,#fff,#fff,#fff,#fff,#fff,#fff,#fff,#fff,#fff,#fff,#fff,#fff,#fff,#fff,#fff,#fff,#fff,#fff,#fff,#fff,#fff,#fff,#fff,#fff,#fff,#fff,#fff,#fff,#fff,#3fa,#3f2,#6f1,#af0,#af0,#f90,#f30,#f00,#f00,#f50,#f30,#fb0,#ee0,#af0,#9f0,#fb0,#ee0,#0f4,#4f2,#0f9,#0fd,#0ff,#0fb,#11f,#42f,#20f,#0ef,#07f,#20f,#05f,#09f,#14f,#0f4,#0f6,#08f,#0ff,#0f6,#0f4,#4f2,#0ef,#0f8,#10f,#63f,#0bf,#09f,#07f,#14f,#09f,#0fc,#0fc,#cf0,#cf0,#9f0,#0df,#0f5,#0fa,#0bf,#08f,#0bf,#0bf,#0fb,#0fc,#9f0,#0f4,#0f7,#0cf,#14f,#20f,#53f,#74f,#86f,#cbf,#eef,#ddf,#cbf,#14f)"></div><div style="height:1.525px;background:linear-gradient(90deg,#fff,#fff,#fff,#fff,#fff,#fff,#fff,#fff,#fff,#fff,#fff,#fff,#fff,#fff,#fff,#fff,#fff,#fff,#fff,#fff,#fff,#fff,#fff,#fff,#fff,#fff,#fff,#fff,#fff,#fff,#fff,#fff,#fff,#fff,#fff,#fff,#fff,#fff,#fff,#fff,#fff,#fff,#fff,#fd3,#fc0,#fd0,#bf0,#fe0,#f90,#f10,#f00,#f10,#fd0,#f60,#f60,#fa0,#fd0,#4f2,#0f9,#0df,#0f9,#8f0,#fe0,#1f3,#af0,#7f1,#fd0,#f20,#f00,#f00,#f80,#3f2,#0f6,#0f7,#8f1,#cf0,#3f2,#0f4,#0f9,#3f2,#ee0,#fb0,#f50,#f60,#fa0,#fe0,#ee0,#3f2,#0af,#09f,#0cf,#0af,#0ff,#0df,#6f1,#3f2,#fc0,#f90,#f70,#f60,#fa0,#fe0,#4f2,#0fb,#0fd,#0ef,#0f5,#0f9,#0f9,#0ef,#0ef,#0f7,#0f5,#0fa,#3f2,#0fb,#3f2,#3f2,#de0)"></div><div style="height:1.525px;background:linear-gradient(90deg,#fff,#fff,#fff,#fff,#fff,#fff,#fff,#fff,#fff,#fff,#fff,#fff,#fff,#fff,#fff,#fff,#fff,#fff,#fff,#fff,#fff,#fff,#fff,#fff,#fff,#fff,#fff,#fff,#fff,#fff,#fff,#fff,#fff,#fff,#fff,#fff,#fff,#fff,#fff,#fff,#fff,#fff,#fff,#ee3,#bf0,#de0,#bf0,#7f1,#0f6,#0f9,#0fa,#0fa,#0fc,#0fa,#2f3,#0fb,#0cf,#0ef,#0ef,#0fb,#0ef,#14f,#11f,#63f,#10f,#11f,#0bf,#0cf,#12f,#13f,#11f,#07f,#0ff,#0cf,#0fe,#13f,#85f,#31f,#32f,#42f,#74f,#cbf,#97f,#52f,#07f,#0ff,#0fa,#0f4,#3f2,#af0,#de0,#9f0,#0f9,#de0,#fa0,#f60,#f00,#f00,#f00,#f00,#f00,#f00,#9f0,#7f1,#4f2,#0af,#0ef,#09f,#0af,#0cf,#0af,#0ef,#2f3,#4f2,#f70,#fd0,#f30,#f80,#f70)"></div><div style="height:1.525px;background:linear-gradient(90deg,#fff,#fff,#fff,#fff,#fff,#fff,#fff,#fff,#fff,#fff,#fff,#fff,#fff,#fff,#fff,#fff,#fff,#fff,#fff,#fff,#fff,#fff,#fff,#fff,#fff,#fff,#fff,#fff,#fff,#fff,#fff,#fff,#fff,#fff,#fff,#fff,#fff,#fff,#fff,#fff,#fff,#fff,#fff,#8f4,#af0,#fe0,#fb0,#fa0,#fc0,#fd0,#f40,#cf0,#fe0,#ee0,#bf0,#0fa,#0f4,#1f3,#0f4,#0fb,#6f1,#9f0,#ee0,#fb0,#fa0,#bf0,#0f3,#6f1,#8f0,#cf0,#de0,#9f0,#0f4,#0f8,#0f6,#4f2,#0f4,#0f8,#0fd,#0f7,#0fd,#0fa,#0f5,#0f7,#0df,#09f,#07f,#0cf,#10f,#10f,#13f,#14f,#0af,#0f6,#0fe,#0fb,#0af,#0f6,#0f4,#0f5,#9f0,#4f2,#0f4,#cf0,#df0,#f60,#f90,#f30,#f50,#ee0,#ee0,#cf0,#0f3,#4f2,#1f3,#0f8,#0df,#0df,#0ff)"></div><div style="height:1.525px;background:linear-gradient(90deg,#fff,#fff,#fff,#fff,#fff,#fff,#fff,#fff,#fff,#fff,#fff,#fff,#fff,#fff,#fff,#fff,#fff,#fff,#fff,#fff,#fff,#fff,#fff,#fff,#fff,#fff,#fff,#fff,#fff,#fff,#fff,#fff,#fff,#fff,#fff,#fff,#fff,#fff,#fff,#fff,#fff,#fff,#fff,#f43,#f10,#f40,#f80,#f80,#f60,#f60,#f10,#f70,#fa0,#fc0,#ee0,#fe0,#4f2,#0f4,#1f3,#4f2,#de0,#fc0,#ee0,#de0,#9f0,#fc0,#fa0,#fb0,#8f0,#0f4,#0f9,#8f0,#9f0,#de0,#8f0,#7f1,#bf0,#ee0,#f80,#f30,#ee0,#f90,#f20,#f00,#f00,#f00,#f50,#fe0,#fb0,#fb0,#7f1,#9f0,#8f1,#0f5,#fd0,#bf0,#fd0,#9f0,#fc0,#fc0,#5f1,#3f2,#0f6,#0ff,#0f9,#0f6,#0f7,#0ff,#0fb,#6f1,#0fc,#1f3,#1f3,#0f9,#0bf,#0fe,#0ff,#0bf,#0cf)"></div><div style="height:1.525px;background:linear-gradient(90deg,#fff,#fff,#fff,#fff,#fff,#fff,#fff,#fff,#fff,#fff,#fff,#fff,#fff,#fff,#fff,#fff,#fff,#fff,#fff,#fff,#fff,#fff,#fff,#fff,#fff,#fff,#fff,#fff,#fff,#fff,#fff,#fff,#fff,#fff,#fff,#fff,#fff,#fff,#fff,#fff,#fff,#fff,#fff,#f33,#f10,#f20,#f20,#f40,#f90,#f90,#f90,#fd0,#f90,#fc0,#de0,#6f1,#9f0,#fd0,#bf0,#cf0,#ee0,#3f3,#6f1,#8f0,#9f0,#5f2,#6f1,#7f1,#2f3,#4f2,#8f1,#de0,#6f1,#7f1,#fc0,#f20,#f10,#f30,#fa0,#f30,#fc0,#fc0,#f80,#fb0,#bf0,#f90,#f30,#f00,#f20,#f00,#f00,#f00,#f00,#f00,#f00,#f00,#f10,#f70,#f20,#f50,#fb0,#fe0,#de0,#0f4,#0fe,#0bf,#0fc,#09f,#0bf,#0df,#0df,#0df,#0f9,#0df,#2f3,#2f3,#0f5,#0fb,#0fd)"></div><div style="height:1.525px;background:linear-gradient(90deg,#fff,#fff,#fff,#fff,#fff,#fff,#fff,#fff,#fff,#fff,#fff,#fff,#fff,#fff,#fff,#fff,#fff,#fff,#fff,#fff,#fff,#fff,#fff,#fff,#fff,#fff,#fff,#fff,#fff,#fff,#fff,#fff,#fff,#fff,#fff,#fff,#fff,#fff,#fff,#fff,#fff,#fff,#fff,#f33,#f00,#f00,#f00,#f00,#f40,#f00,#f00,#f00,#f20,#f60,#f40,#f50,#f00,#f00,#f50,#fc0,#cf0,#fc0,#ee0,#bf0,#8f0,#7f1,#de0,#ee0,#fa0,#fe0,#cf0,#fb0,#fe0,#fe0,#bf0,#df0,#af0,#4f2,#de0,#fb0,#fc0,#f40,#f20,#f00,#f60,#f60,#f60,#f70,#fc0,#fe0,#ee0,#df0,#6f1,#4f2,#1f3,#0fb,#0fd,#0cf,#06f,#21f,#13f,#08f,#0ff,#0f9,#3f2,#6f1,#fe0,#f90,#f90,#fe0,#bf0,#4f2,#5f2,#fe0,#fb0,#fb0,#f70,#f10,#f00)"></div><div style="height:1.525px;background:linear-gradient(90deg,#fff,#fff,#fff,#fff,#fff,#fff,#fff,#fff,#fff,#fff,#fff,#fff,#fff,#fff,#fff,#fff,#fff,#fff,#fff,#fff,#fff,#fff,#fff,#fff,#fff,#fff,#fff,#fff,#fff,#fff,#fff,#fff,#fff,#fff,#fff,#fff,#fff,#fff,#fff,#fff,#fff,#fff,#fff,#f43,#f10,#f20,#f30,#f50,#f60,#f40,#f30,#f10,#f00,#f30,#f10,#f00,#f00,#f20,#f80,#fa0,#f70,#f40,#f00,#f10,#f00,#f00,#f00,#f00,#f00,#f10,#f00,#f00,#f00,#f30,#f30,#f20,#f10,#f60,#f50,#cf0,#fb0,#fb0,#f90,#fd0,#de0,#af0,#cf0,#fc0,#f80,#fd0,#fc0,#fc0,#f00,#f70,#f20,#f50,#fe0,#fe0,#af0,#0fc,#09f,#10f,#0ff,#0bf,#08f,#13f,#11f,#05f,#0ff,#0cf,#0af,#74f,#42f,#53f,#86f,#31f,#10f,#11f,#09f)"></div><div style="height:1.525px;background:linear-gradient(90deg,#fff,#fff,#fff,#fff,#fff,#fff,#fff,#fff,#fff,#fff,#fff,#fff,#fff,#fff,#fff,#fff,#fff,#fff,#fff,#fff,#fff,#fff,#fff,#fff,#fff,#fff,#fff,#fff,#fff,#fff,#fff,#fff,#fff,#fff,#fff,#fff,#fff,#fff,#fff,#fff,#fff,#fff,#fff,#f33,#f00,#f00,#f30,#f80,#f40,#f90,#f90,#f80,#f10,#f10,#f00,#f00,#f10,#f80,#f70,#fe0,#af0,#5f2,#3f2,#0f5,#0f4,#9f0,#fe0,#fe0,#fb0,#f40,#f50,#f60,#fa0,#f90,#f70,#ee0,#f60,#f50,#fc0,#f90,#f80,#f10,#f30,#cf0,#cf0,#0f5,#0f9,#0cf,#09f,#09f,#06f,#07f,#13f,#0cf,#09f,#0ef,#6f1,#9f0,#bf0,#cf0,#fd0,#f00,#f40,#f40,#f50,#f90,#fb0,#fb0,#f50,#f60,#f60,#f80,#f90,#fe0,#cf0,#bf0,#fd0,#9f0,#6f1)"></div><div style="height:1.525px;background:linear-gradient(90deg,#fff,#fff,#fff,#fff,#fff,#fff,#fff,#fff,#fff,#fff,#fff,#fff,#fff,#fff,#fff,#fff,#fff,#fff,#fff,#fff,#fff,#fff,#fff,#fff,#fff,#fff,#fff,#fff,#fff,#fff,#fff,#fff,#fff,#fff,#fff,#fff,#fff,#fff,#fff,#fff,#fff,#fff,#fff,#f33,#f00,#f00,#f00,#f00,#f00,#f00,#f00,#f00,#f20,#f40,#f30,#f50,#f90,#f80,#f60,#f40,#f50,#f20,#f40,#fe0,#de0,#fe0,#df0,#3f2,#2f3,#0f6,#0fa,#0f5,#fe0,#fa0,#fc0,#ee0,#fd0,#fe0,#fe0,#fe0,#fd0,#8f1,#7f1,#ee0,#cf0,#fd0,#f10,#f30,#f00,#f00,#f00,#f00,#f00,#f00,#f00,#f00,#f00,#f00,#f90,#f80,#f50,#fc0,#de0,#cf0,#7f1,#af0,#5f2,#ee0,#bf0,#7f1,#7f1,#cf0,#fa0,#f60,#f10,#f30,#f60,#fc0,#f00)"></div><div style="height:1.525px;background:linear-gradient(90deg,#fff,#fff,#fff,#fff,#fff,#fff,#fff,#fff,#fff,#fff,#fff,#fff,#fff,#fff,#fff,#fff,#fff,#fff,#fff,#fff,#fff,#fff,#fff,#fff,#fff,#fff,#fff,#fff,#fff,#fff,#fff,#fff,#fff,#fff,#fff,#fff,#fff,#fff,#fff,#fff,#fff,#fff,#fff,#f33,#f00,#f00,#f00,#f00,#f00,#f00,#f00,#f00,#f00,#f00,#f00,#f00,#f00,#f00,#f00,#f00,#f00,#f00,#f20,#fa0,#f80,#fc0,#cf0,#3f2,#2f3,#0f8,#0f6,#1f3,#0f5,#0f3,#0f6,#af0,#cf0,#fc0,#ee0,#ee0,#fc0,#f50,#fa0,#f90,#ee0,#fe0,#fe0,#f00,#f10,#f00,#f00,#f00,#f00,#f00,#f00,#f00,#f00,#f00,#f00,#f00,#f10,#f70,#fd0,#cf0,#1f3,#0bf,#0f7,#0f4,#1f3,#af0,#ee0,#ee0,#f80,#f70,#f00,#f00,#f00,#f00,#f00)"></div><div style="height:1.525px;background:linear-gradient(90deg,#fff,#fff,#fff,#fff,#fff,#fff,#fff,#fff,#fff,#fff,#fff,#fff,#fff,#fff,#fff,#fff,#fff,#fff,#fff,#fff,#fff,#fff,#fff,#fff,#fff,#fff,#fff,#fff,#fff,#fff,#fff,#fff,#fff,#fff,#fff,#fff,#fff,#fff,#fff,#fff,#fff,#fff,#fff,#f33,#f00,#f00,#f00,#f00,#f00,#f00,#f10,#f00,#f40,#f20,#f10,#f30,#f40,#f40,#f60,#fb0,#fa0,#f70,#f70,#fc0,#ee0,#fe0,#bf0,#af0,#fd0,#fd0,#fa0,#fb0,#f30,#f00,#f00,#f00,#f00,#f00,#f00,#f00,#f00,#f30,#fc0,#9f0,#7f1,#7f1,#2f3,#3f2,#af0,#bf0,#8f0,#ee0,#fd0,#f90,#f40,#f50,#f40,#f00,#f20,#f00,#f00,#f00,#f60,#f90,#fb0,#fe0,#0f5,#4f2,#0f8,#0fd,#0f8,#4f2,#1f3,#7f1,#9f0,#5f2,#3f2,#4f2,#4f2)"></div><div style="height:1.525px;background:linear-gradient(90deg,#fff,#fff,#fff,#fff,#fff,#fff,#fff,#fff,#fff,#fff,#fff,#fff,#fff,#fff,#fff,#fff,#fff,#fff,#fff,#fff,#fff,#fff,#fff,#fff,#fff,#fff,#fff,#fff,#fff,#fff,#fff,#fff,#fff,#fff,#fff,#fff,#fff,#fff,#fff,#fff,#fff,#fff,#fff,#f33,#f00,#f00,#f00,#f00,#f00,#f00,#f00,#f00,#f00,#f00,#f10,#f30,#f40,#f80,#f80,#f80,#f40,#f80,#fc0,#fa0,#f90,#f90,#f90,#ee0,#fe0,#ee0,#fc0,#fd0,#fd0,#fd0,#ee0,#fe0,#fb0,#bf0,#5f2,#4f2,#5f1,#0f5,#6f1,#5f2,#2f3,#2f3,#9f0,#af0,#9f0,#7f1,#8f0,#2f3,#3f3,#9f0,#fe0,#fd0,#fd0,#fd0,#f80,#f80,#f70,#fa0,#fe0,#bf0,#fe0,#fd0,#fd0,#fb0,#fc0,#f70,#f00,#f00,#f00,#f00,#f30,#f00,#f00,#f20,#f90)"></div><div style="height:1.525px;background:linear-gradient(90deg,#fff,#fff,#fff,#fff,#fff,#fff,#fff,#fff,#fff,#fff,#fff,#fff,#fff,#fff,#fff,#fff,#fff,#fff,#fff,#fff,#fff,#fff,#fff,#fff,#fff,#fff,#fff,#fff,#fff,#fff,#fff,#fff,#fff,#fff,#fff,#fff,#fff,#fff,#fff,#fff,#fff,#fff,#fff,#f33,#f00,#f00,#f00,#f00,#f00,#f20,#f20,#f10,#f40,#f70,#f70,#f80,#fe0,#fb0,#f70,#f40,#f50,#f50,#f10,#f00,#f00,#f00,#f10,#f40,#f50,#f70,#f90,#fd0,#9f0,#cf0,#cf0,#7f1,#6f1,#6f1,#9f0,#7f1,#8f0,#af0,#4f2,#9f0,#cf0,#fe0,#cf0,#af0,#bf0,#6f1,#6f1,#9f0,#5f2,#5f2,#4f2,#8f1,#bf0,#fa0,#f90,#f70,#fa0,#fa0,#f90,#f90,#fc0,#fc0,#9f0,#5f2,#1f3,#4f2,#cf0,#0f7,#0f6,#1f3,#6f1,#9f0,#ee0,#ee0,#cf0)"></div><div style="height:1.525px;background:linear-gradient(90deg,#eef,#edf,#eef,#edf,#ddf,#ddf,#ddf,#ddf,#edf,#eef,#eef,#fff,#fff,#eef,#fff,#fff,#fff,#fef,#fff,#eef,#eef,#edf,#ddf,#edf,#ddf,#ddf,#ddf,#ddf,#ddf,#ddf,#ddf,#ddf,#edf,#ddf,#ddf,#ddf,#ddf,#ddf,#ddf,#ddf,#ddf,#ddf,#ddf,#f33,#f00,#f00,#f00,#f00,#f20,#f20,#f40,#f40,#f50,#f30,#f40,#f70,#f40,#f40,#f50,#f50,#f50,#f60,#f90,#fe0,#fd0,#fb0,#ee0,#bf0,#cf0,#cf0,#de0,#fe0,#f80,#f80,#fd0,#f80,#f50,#fa0,#fa0,#f80,#fd0,#fb0,#fc0,#f40,#f70,#f80,#f10,#f00,#f30,#f00,#f40,#f00,#fb0,#fe0,#8f1,#5f2,#0fe,#0df,#0df,#0df,#09f,#0af,#09f,#0af,#09f,#0fa,#2f3,#1f3,#7f1,#bf0,#fc0,#f90,#f30,#f70,#af0,#af0,#9f0,#cf0,#2f3)"></div><div style="height:1.525px;background:linear-gradient(90deg,#eef,#fff,#edf,#ddf,#ddf,#b9f,#a8f,#85f,#a8f,#baf,#97f,#a8f,#cbf,#ddf,#ddf,#baf,#cbf,#97f,#42f,#74f,#74f,#31f,#20f,#42f,#10f,#10f,#53f,#52f,#97f,#75f,#97f,#cbf,#ddf,#cbf,#ddf,#ccf,#98f,#a9f,#63f,#63f,#53f,#21f,#31f,#c03,#f00,#f00,#f20,#f10,#f30,#f20,#f00,#f10,#f30,#f30,#f40,#f40,#f70,#fa0,#fa0,#fe0,#fd0,#fd0,#fa0,#f90,#fb0,#fd0,#f90,#fc0,#f90,#fc0,#fd0,#cf0,#8f1,#af0,#fe0,#fe0,#fe0,#fe0,#fa0,#fa0,#fd0,#f90,#f60,#f40,#fa0,#f80,#f80,#f90,#f70,#f30,#f60,#f90,#fe0,#3f2,#4f2,#5f2,#0f4,#0f7,#0f9,#1f3,#0f8,#0f6,#cf0,#9f0,#3f2,#3f2,#0f5,#0f3,#5f2,#de0,#bf0,#9f0,#6f1,#de0,#bf0,#ee0,#2f3,#0fc,#0bf)"></div><div style="height:1.525px;background:linear-gradient(90deg,#eef,#eef,#eef,#eef,#eef,#eef,#eef,#eef,#eef,#eef,#eef,#fff,#fff,#eef,#fef,#fef,#fff,#fff,#fff,#fef,#eef,#eef,#eef,#eef,#eef,#eef,#eef,#fff,#fef,#fff,#fff,#fff,#fff,#fff,#fff,#fff,#fff,#fef,#fff,#fff,#fff,#fef,#fef,#f33,#f00,#f00,#f00,#f00,#f00,#f00,#f20,#f10,#f00,#f20,#f30,#f40,#f80,#f70,#fb0,#fa0,#fd0,#ee0,#de0,#ee0,#fc0,#f90,#fc0,#fc0,#bf0,#fe0,#ee0,#bf0,#de0,#6f1,#6f1,#9f0,#de0,#fa0,#bf0,#af0,#de0,#af0,#de0,#cf0,#7f1,#0f6,#0f9,#0f4,#6f1,#ee0,#ee0,#fe0,#bf0,#fd0,#f60,#f70,#f30,#f90,#fe0,#fd0,#fa0,#fd0,#de0,#fa0,#fc0,#cf0,#f80,#f10,#f20,#fa0,#f60,#f70,#cf0,#af0,#cf0,#5f1,#0f7,#0f8,#0fb)"></div><div style="height:1.525px;background:linear-gradient(90deg,#85f,#74f,#11f,#0cf,#0bf,#14f,#12f,#53f,#08f,#07f,#06f,#06f,#13f,#07f,#13f,#0cf,#0cf,#0cf,#12f,#14f,#06f,#13f,#10f,#31f,#11f,#05f,#13f,#12f,#07f,#42f,#63f,#10f,#08f,#06f,#07f,#53f,#85f,#42f,#31f,#20f,#21f,#10f,#31f,#d13,#f00,#f00,#f00,#f00,#f00,#f00,#f10,#f10,#f40,#f80,#f90,#fb0,#fd0,#ee0,#9f0,#bf0,#9f0,#af0,#bf0,#8f1,#4f2,#4f2,#6f1,#5f2,#6f1,#9f0,#8f0,#af0,#9f0,#bf0,#1f3,#0f8,#0f9,#0fc,#0fa,#0fc,#0ff,#0f9,#0fb,#3f2,#9f0,#8f0,#8f0,#4f2,#1f3,#0f7,#0df,#0fb,#0f5,#0f4,#af0,#4f2,#8f1,#fc0,#f30,#f20,#f30,#fb0,#fa0,#de0,#fc0,#af0,#4f2,#0f7,#5f2,#4f2,#6f1,#1f3,#3f3,#2f3,#8f1,#6f1,#8f1,#3f2,#0f5)"></div><div style="height:1.525px;background:linear-gradient(90deg,#10f,#53f,#14f,#74f,#edf,#ddf,#a9f,#cbf,#63f,#63f,#53f,#42f,#63f,#05f,#09f,#0bf,#07f,#07f,#08f,#0fe,#0cf,#0ff,#08f,#09f,#10f,#42f,#21f,#42f,#86f,#fff,#fff,#fff,#fff,#fff,#fff,#fff,#fff,#fff,#fff,#fff,#fff,#fff,#eef,#d13,#f00,#f00,#f00,#f00,#f00,#f20,#f50,#f60,#f50,#f70,#fc0,#f90,#fb0,#fc0,#fd0,#fc0,#fc0,#fd0,#fc0,#fd0,#fd0,#fc0,#fd0,#fd0,#9f0,#6f1,#4f2,#0fa,#0f4,#0f9,#0fa,#0f9,#0f8,#4f2,#3f3,#5f2,#de0,#5f2,#7f1,#3f2,#0f3,#2f3,#5f2,#2f3,#0f8,#0f9,#1f3,#0f4,#0fb,#0f7,#0f8,#0ff,#0fb,#4f2,#4f2,#bf0,#ee0,#f60,#fb0,#cf0,#8f1,#fe0,#af0,#6f1,#0f6,#0fe,#13f,#0ff,#0fc,#0f4,#0bf,#0af,#0bf,#0df,#0fa)"></div><div style="height:1.525px;background:linear-gradient(90deg,#86f,#64f,#98f,#86f,#75f,#b9f,#ddf,#ddf,#dcf,#dcf,#baf,#dcf,#baf,#cbf,#b9f,#b9f,#85f,#baf,#cbf,#a9f,#ccf,#a9f,#97f,#baf,#ccf,#edf,#edf,#ddf,#edf,#fff,#fef,#fff,#fff,#fff,#fff,#ddf,#eef,#eef,#ddf,#eef,#edf,#edf,#eef,#3af,#0af,#07f,#09f,#08f,#0cf,#0ff,#0ef,#0cf,#0fe,#0cf,#0df,#0f4,#0ef,#0fb,#0fe,#0f7,#0f5,#0f6,#cf0,#de0,#3f2,#3f2,#0fa,#0f8,#0cf,#09f,#0ef,#11f,#10f,#31f,#21f,#06f,#09f,#0ef,#0fe,#0fa,#0f6,#0f6,#2f3,#5f2,#0f4,#0fc,#0bf,#09f,#31f,#10f,#11f,#06f,#07f,#0ef,#0ff,#0f8,#0f8,#0f4,#0f3,#4f2,#0ef,#0cf,#09f,#13f,#12f,#05f,#09f,#0af,#0cf,#2f3,#9f0,#4f2,#af0,#fe0,#ee0,#7f1,#6f1,#5f1,#0f7)"></div><div style="height:1.525px;background:linear-gradient(90deg,#0fc,#08f,#07f,#0cf,#0ff,#06f,#74f,#86f,#baf,#a9f,#31f,#13f,#53f,#a8f,#05f,#0ff,#0cf,#0fc,#0f9,#0fb,#0fa,#7f1,#9f0,#9f0,#2f3,#af0,#7f1,#1f3,#2f3,#5f2,#0f5,#0f7,#0ef,#0fe,#0fd,#4f2,#fe0,#fa0,#fc0,#fb0,#fb0,#fd0,#f50,#8e1,#0fc,#0bf,#0af,#05f,#06f,#09f,#0fc,#08f,#0af,#0af,#0bf,#0fe,#0f8,#0fa,#0f9,#0ff,#0f4,#0f8,#2f3,#3f3,#0f9,#0fd,#0fe,#0ef,#0fb,#0cf,#0df,#0cf,#0bf,#0df,#0fe,#0bf,#08f,#11f,#06f,#0bf,#05f,#05f,#12f,#31f,#09f,#0ef,#0f8,#0f7,#0f7,#2f3,#3f2,#0f3,#6f1,#6f1,#6f1,#3f3,#0f8,#0fc,#0f5,#2f3,#6f1,#0f4,#0f6,#0f9,#0fc,#2f3,#0f7,#0f9,#0fc,#0fc,#0fc,#0ef,#0ef,#0fc,#0af,#0fe,#0ff,#0fd,#0fd)"></div></div>
<div style="position:absolute;left:135px;top:264.7px;width:938px;height:42.69999999999999px;overflow:hidden"><div style="height:1.525px;background:linear-gradient(90deg,#fff,#fff,#fff,#fff,#fff,#fff,#fff,#fff,#fff,#fff,#fff,#fff,#fff,#fff,#fff,#fff,#fff,#fff,#fff,#fff,#fff,#fff,#fff,#fff,#fff,#fff,#fff,#fff,#fff,#fff,#fff,#fff,#fff,#fff,#fff,#fff,#fff,#fff,#fff,#fff,#fff,#fff,#fff,#eef,#eef,#baf,#eef,#eef,#21f,#42f,#31f,#12f,#31f,#85f,#baf,#31f,#ddf,#fff,#fff,#fff,#fff,#fff,#fff,#fff,#fff,#fff,#fff,#ccf,#86f,#fff,#eef,#75f,#a8f,#53f,#a9f,#75f,#fef,#fff,#edf,#fff,#fff,#fff,#fff,#fff,#fff,#fff,#fff,#fff,#fff,#fff,#fff,#fff,#fff,#fff,#fff,#fff,#fff,#fff,#fff,#fff,#fff,#fff,#fff,#fff,#fff,#fff,#fff,#fff,#fff,#fff,#fff,#fff,#fff,#fff,#fff,#fff,#fff,#edf,#fff)"></div><div style="height:1.525px;background:linear-gradient(90deg,#fff,#fff,#fff,#fff,#fff,#fff,#fff,#fff,#fff,#fff,#fff,#fff,#fff,#fff,#fff,#fff,#fff,#fff,#fff,#fff,#fff,#fff,#fff,#fff,#fff,#fff,#fff,#fff,#fff,#fff,#fff,#fff,#fff,#fff,#fff,#fff,#fff,#fff,#fff,#fff,#fff,#fff,#fff,#3af,#07f,#0bf,#06f,#12f,#20f,#cbf,#86f,#eef,#ddf,#85f,#75f,#b9f,#53f,#21f,#0af,#06f,#1f3,#0f8,#0df,#09f,#0df,#0bf,#08f,#10f,#0af,#14f,#11f,#10f,#14f,#42f,#07f,#07f,#07f,#52f,#75f,#baf,#dcf,#fef,#baf,#eef,#fff,#75f,#42f,#12f,#06f,#15f,#0df,#0f9,#0fb,#0fc,#09f,#31f,#42f,#52f,#31f,#ccf,#fff,#fff,#fff,#fff,#edf,#fff,#cbf,#ddf,#eef,#fff,#ccf,#86f,#a8f,#85f,#97f,#edf,#fff,#edf,#edf)"></div><div style="height:1.525px;background:linear-gradient(90deg,#fff,#fff,#fff,#fff,#fff,#fff,#fff,#fff,#fff,#fff,#fff,#fff,#fff,#fff,#fff,#fff,#fff,#fff,#fff,#fff,#fff,#fff,#fff,#fff,#fff,#fff,#fff,#fff,#fff,#fff,#fff,#fff,#fff,#fff,#fff,#fff,#fff,#fff,#fff,#fff,#fff,#fff,#fff,#3bf,#14f,#0bf,#05f,#85f,#52f,#52f,#53f,#85f,#21f,#42f,#baf,#ddf,#53f,#63f,#cbf,#a9f,#31f,#ddf,#fff,#eef,#fff,#cbf,#eef,#fff,#fff,#fff,#ddf,#52f,#53f,#09f,#98f,#31f,#0cf,#0af,#06f,#08f,#0bf,#09f,#0cf,#1f3,#6f1,#0ff,#0fd,#0bf,#0ef,#42f,#cbf,#eef,#eef,#fff,#fff,#fff,#fff,#fff,#fff,#eef,#eef,#fff,#a9f,#edf,#85f,#edf,#21f,#06f,#42f,#85f,#20f,#13f,#0fa,#0fc,#0f6,#0fb,#0bf,#0cf,#0fe)"></div><div style="height:1.525px;background:linear-gradient(90deg,#fff,#fff,#fff,#fff,#fff,#fff,#fff,#fff,#fff,#fff,#fff,#fff,#fff,#fff,#fff,#fff,#fff,#fff,#fff,#fff,#fff,#fff,#fff,#fff,#fff,#fff,#fff,#fff,#fff,#fff,#fff,#fff,#fff,#fff,#fff,#fff,#fff,#fff,#fff,#fff,#fff,#fff,#fff,#3cf,#14f,#11f,#74f,#08f,#10f,#0df,#0af,#0fa,#0f8,#6f1,#af0,#3f2,#0fd,#0f7,#0fe,#1f3,#0fe,#3f2,#0fd,#09f,#0f4,#2f3,#0f6,#08f,#20f,#a8f,#dcf,#21f,#12f,#42f,#42f,#10f,#13f,#12f,#0f7,#0cf,#12f,#63f,#21f,#10f,#86f,#97f,#31f,#86f,#11f,#13f,#0ef,#0ff,#0f9,#0fb,#0ef,#11f,#20f,#b9f,#edf,#fff,#fff,#fff,#fff,#edf,#63f,#32f,#0cf,#0fd,#0ff,#0bf,#0fe,#09f,#0bf,#0bf,#0df,#0bf,#0fc,#0f7,#9f0)"></div><div style="height:1.525px;background:linear-gradient(90deg,#fff,#fff,#fff,#fff,#fff,#fff,#fff,#fff,#fff,#fff,#fff,#fff,#fff,#fff,#fff,#fff,#fff,#fff,#fff,#fff,#fff,#fff,#fff,#fff,#fff,#fff,#fff,#fff,#fff,#fff,#fff,#fff,#fff,#fff,#fff,#fff,#fff,#fff,#fff,#fff,#fff,#fff,#fff,#a8f,#a9f,#eef,#a9f,#75f,#fff,#eef,#fff,#fff,#fff,#fff,#fff,#fff,#fff,#eef,#eef,#52f,#10f,#06f,#08f,#05f,#31f,#07f,#0fd,#0f4,#0ff,#0bf,#09f,#0af,#07f,#0f9,#0f5,#0ef,#12f,#08f,#13f,#11f,#06f,#0f9,#0df,#0cf,#08f,#53f,#11f,#08f,#09f,#0df,#10f,#75f,#eef,#53f,#0ff,#20f,#07f,#08f,#11f,#12f,#0fe,#0f6,#0f8,#0bf,#0f4,#0ff,#0ef,#08f,#09f,#63f,#a9f,#eef,#98f,#fff,#fff,#fff,#fff,#fff,#fff)"></div><div style="height:1.525px;background:linear-gradient(90deg,#fff,#fff,#fff,#fff,#fff,#fff,#fff,#fff,#fff,#fff,#fff,#fff,#fff,#fff,#fff,#fff,#fff,#fff,#fff,#fff,#fff,#fff,#fff,#fff,#fff,#fff,#fff,#fff,#fff,#fff,#fff,#fff,#fff,#fff,#fff,#fff,#fff,#fff,#fff,#fff,#fff,#fff,#fff,#97f,#fff,#fff,#edf,#eef,#eef,#85f,#97f,#21f,#20f,#0cf,#0f9,#09f,#12f,#06f,#0fc,#0f7,#0df,#0fc,#0fd,#0cf,#08f,#0ef,#0f8,#07f,#06f,#0df,#20f,#31f,#12f,#0ef,#08f,#0f9,#0fa,#2f3,#06f,#0f8,#0fc,#0bf,#42f,#31f,#baf,#42f,#baf,#12f,#53f,#20f,#15f,#0f6,#0f9,#0cf,#0ef,#0ef,#0fa,#1f3,#0bf,#09f,#09f,#0af,#0af,#63f,#14f,#13f,#06f,#0ef,#12f,#63f,#52f,#31f,#12f,#31f,#a9f,#edf,#fff,#97f,#98f)"></div><div style="height:1.525px;background:linear-gradient(90deg,#fff,#fff,#fff,#fff,#fff,#fff,#fff,#fff,#fff,#fff,#fff,#fff,#fff,#fff,#fff,#fff,#fff,#fff,#fff,#fff,#fff,#fff,#fff,#fff,#fff,#fff,#fff,#fff,#fff,#fff,#fff,#fff,#fff,#fff,#fff,#fff,#fff,#fff,#fff,#fff,#fff,#fff,#fff,#3ff,#0cf,#0cf,#0ef,#af0,#df0,#fd0,#fe0,#f00,#f00,#f00,#f00,#fb0,#ee0,#de0,#4f2,#0f8,#2f3,#0af,#13f,#0af,#0fa,#08f,#20f,#13f,#0af,#13f,#10f,#0af,#06f,#20f,#20f,#0bf,#0bf,#06f,#08f,#0f6,#0f7,#8f1,#4f2,#af0,#0f3,#9f0,#5f2,#0fc,#0ef,#07f,#53f,#31f,#75f,#ddf,#dcf,#cbf,#97f,#63f,#13f,#31f,#31f,#06f,#0cf,#14f,#21f,#10f,#42f,#75f,#10f,#20f,#42f,#97f,#31f,#12f,#14f,#06f,#07f,#09f,#09f)"></div><div style="height:1.525px;background:linear-gradient(90deg,#fff,#fff,#fff,#fff,#fff,#fff,#fff,#fff,#fff,#fff,#fff,#fff,#fff,#fff,#fff,#fff,#fff,#fff,#fff,#fff,#fff,#fff,#fff,#fff,#fff,#fff,#fff,#fff,#fff,#fff,#fff,#fff,#fff,#fff,#fff,#fff,#fff,#fff,#fff,#fff,#fff,#fff,#fff,#3df,#0f7,#0f6,#0fa,#5f2,#3f3,#0fa,#0f9,#0fc,#0ff,#0bf,#0fc,#2f3,#0ef,#0af,#0f5,#0fc,#0bf,#11f,#11f,#52f,#eef,#eef,#eef,#fff,#edf,#86f,#63f,#63f,#21f,#09f,#0fa,#2f3,#0f4,#1f3,#0f6,#de0,#fd0,#fd0,#af0,#0f7,#0f9,#0cf,#0df,#0fb,#0fc,#0fb,#09f,#0fa,#0f7,#0fb,#0f5,#0f9,#0f5,#9f0,#8f1,#f80,#fe0,#f90,#f80,#fa0,#f30,#f70,#bf0,#4f2,#5f2,#5f2,#0f4,#2f3,#9f0,#5f1,#bf0,#2f3,#5f2,#4f2,#fc0)"></div><div style="height:1.525px;background:linear-gradient(90deg,#fff,#fff,#fff,#fff,#fff,#fff,#fff,#fff,#fff,#fff,#fff,#fff,#fff,#fff,#fff,#fff,#fff,#fff,#fff,#fff,#fff,#fff,#fff,#fff,#fff,#fff,#fff,#fff,#fff,#fff,#fff,#fff,#fff,#fff,#fff,#fff,#fff,#fff,#fff,#fff,#fff,#fff,#fff,#df3,#fc0,#fa0,#fe0,#fb0,#ee0,#af0,#ee0,#ee0,#ee0,#af0,#ee0,#ee0,#fc0,#f10,#f10,#f00,#f40,#f40,#fb0,#1f3,#0f6,#2f3,#0f6,#7f1,#af0,#2f3,#0fb,#0f7,#5f2,#1f3,#0f3,#0ef,#0af,#09f,#14f,#09f,#0fc,#0f4,#4f2,#0fd,#0fc,#0ef,#0fc,#6f1,#8f0,#2f3,#2f3,#0ff,#0fe,#0f9,#2f3,#1f3,#0fc,#0fb,#0df,#08f,#0fd,#0f8,#0fc,#06f,#63f,#42f,#42f,#13f,#11f,#42f,#15f,#0af,#0f9,#1f3,#0f6,#0ff,#0fd,#0ff,#0bf)"></div><div style="height:1.525px;background:linear-gradient(90deg,#fff,#fff,#fff,#fff,#fff,#fff,#fff,#fff,#fff,#fff,#fff,#fff,#fff,#fff,#fff,#fff,#fff,#fff,#fff,#fff,#fff,#fff,#fff,#fff,#fff,#fff,#fff,#fff,#fff,#fff,#fff,#fff,#fff,#fff,#fff,#fff,#fff,#fff,#fff,#fff,#fff,#fff,#fff,#df3,#ee0,#cf0,#7f1,#0f7,#0fb,#0ef,#0df,#0bf,#13f,#31f,#42f,#42f,#14f,#0cf,#0ff,#0ef,#0bf,#0ef,#0ff,#0fe,#8f1,#2f3,#0fd,#0f7,#0fc,#5f2,#6f1,#8f1,#4f2,#1f3,#0f5,#1f3,#7f1,#1f3,#0f5,#4f2,#1f3,#af0,#3f2,#cf0,#7f1,#0fd,#0f7,#6f1,#bf0,#9f0,#3f2,#4f2,#0bf,#0f5,#4f2,#cf0,#5f2,#0fc,#0fb,#0fc,#0f6,#8f1,#fb0,#f80,#9f0,#8f1,#fd0,#f80,#f90,#fe0,#ee0,#0fe,#0df,#0f9,#0fe,#0fa,#0fb,#0fb,#0f7)"></div><div style="height:1.525px;background:linear-gradient(90deg,#fff,#fff,#fff,#fff,#fff,#fff,#fff,#fff,#fff,#fff,#fff,#fff,#fff,#fff,#fff,#fff,#fff,#fff,#fff,#fff,#fff,#fff,#fff,#fff,#fff,#fff,#fff,#fff,#fff,#fff,#fff,#fff,#fff,#fff,#fff,#fff,#fff,#fff,#fff,#fff,#fff,#fff,#fff,#df3,#af0,#0f5,#4f2,#5f2,#5f2,#7f1,#0fc,#0f7,#0f5,#9f0,#f70,#fb0,#fb0,#ee0,#8f1,#fa0,#f90,#fc0,#7f1,#2f3,#0f8,#4f2,#0f4,#3f2,#0f7,#0cf,#07f,#09f,#53f,#07f,#12f,#07f,#05f,#07f,#0cf,#0fe,#0bf,#0f6,#13f,#11f,#52f,#42f,#53f,#31f,#13f,#0af,#06f,#0f6,#0ff,#0fc,#0f9,#0fc,#0f9,#0ff,#0f7,#1f3,#0f6,#5f2,#7f1,#af0,#fe0,#cf0,#9f0,#0fb,#0fb,#11f,#11f,#31f,#10f,#dcf,#74f,#75f,#85f,#53f,#0af)"></div><div style="height:1.525px;background:linear-gradient(90deg,#fff,#fff,#fff,#fff,#fff,#fff,#fff,#fff,#fff,#fff,#fff,#fff,#fff,#fff,#fff,#fff,#fff,#fff,#fff,#fff,#fff,#fff,#fff,#fff,#fff,#fff,#fff,#fff,#fff,#fff,#fff,#fff,#fff,#fff,#fff,#fff,#fff,#fff,#fff,#fff,#fff,#fff,#fff,#f43,#f20,#f40,#f30,#f60,#f90,#f90,#f70,#f80,#fd0,#fe0,#fb0,#fa0,#fe0,#fe0,#bf0,#9f0,#6f1,#0f8,#0f4,#0f9,#0bf,#09f,#14f,#12f,#20f,#12f,#0df,#0af,#09f,#0ff,#0f7,#5f2,#ee0,#cf0,#fc0,#f90,#fc0,#f00,#f00,#f20,#fe0,#9f0,#de0,#cf0,#bf0,#de0,#9f0,#4f2,#af0,#f90,#f10,#f60,#fd0,#9f0,#fd0,#fe0,#fe0,#fe0,#fe0,#fe0,#fc0,#f40,#f00,#f70,#f80,#f80,#f00,#f00,#f00,#f00,#f90,#af0,#fe0,#fb0,#9f0)"></div><div style="height:1.525px;background:linear-gradient(90deg,#fff,#fff,#fff,#fff,#fff,#fff,#fff,#fff,#fff,#fff,#fff,#fff,#fff,#fff,#fff,#fff,#fff,#fff,#fff,#fff,#fff,#fff,#fff,#fff,#fff,#fff,#fff,#fff,#fff,#fff,#fff,#fff,#fff,#fff,#fff,#fff,#fff,#fff,#fff,#fff,#fff,#fff,#fff,#f33,#f00,#f00,#f00,#f00,#f10,#f00,#f30,#fd0,#fe0,#ee0,#de0,#9f0,#af0,#bf0,#1f3,#5f2,#9f0,#8f1,#6f1,#0f5,#4f2,#cf0,#fd0,#f80,#f90,#fa0,#bf0,#bf0,#cf0,#fc0,#de0,#bf0,#fd0,#9f0,#8f1,#de0,#de0,#7f1,#3f2,#7f1,#5f2,#2f3,#6f1,#ee0,#cf0,#2f3,#9f0,#6f1,#0f7,#0bf,#13f,#08f,#86f,#31f,#0bf,#0af,#0cf,#0ef,#0fd,#2f3,#6f1,#ee0,#1f3,#0ff,#0f7,#0ff,#6f1,#9f0,#9f0,#8f1,#bf0,#f80,#f70,#fd0,#cf0)"></div><div style="height:1.525px;background:linear-gradient(90deg,#fff,#fff,#fff,#fff,#fff,#fff,#fff,#fff,#fff,#fff,#fff,#fff,#fff,#fff,#fff,#fff,#fff,#fff,#fff,#fff,#fff,#fff,#fff,#fff,#fff,#fff,#fff,#fff,#fff,#fff,#fff,#fff,#fff,#fff,#fff,#fff,#fff,#fff,#fff,#fff,#fff,#fff,#fff,#f33,#f00,#f00,#f30,#f50,#f80,#f90,#f90,#f80,#fa0,#f90,#f90,#f90,#f30,#f00,#fb0,#fb0,#f90,#f60,#fa0,#de0,#8f0,#bf0,#ee0,#f60,#f90,#af0,#2f3,#0f8,#3f2,#1f3,#0fc,#0cf,#14f,#0df,#0f9,#0f5,#3f2,#2f3,#0f6,#0bf,#09f,#0cf,#0fe,#0ff,#0bf,#0af,#05f,#0df,#0f7,#0f4,#1f3,#0f8,#0f6,#0f7,#4f2,#5f2,#7f1,#8f0,#fd0,#fe0,#9f0,#4f2,#ee0,#cf0,#fe0,#fc0,#f30,#f40,#f00,#f00,#f00,#f00,#fa0,#f10,#fb0)"></div><div style="height:1.525px;background:linear-gradient(90deg,#fff,#fff,#fff,#fff,#fff,#fff,#fff,#fff,#fff,#fff,#fff,#fff,#fff,#fff,#fff,#fff,#fff,#fff,#fff,#fff,#fff,#fff,#fff,#fff,#fff,#fff,#fff,#fff,#fff,#fff,#fff,#fff,#fff,#fff,#fff,#fff,#fff,#fff,#fff,#fff,#fff,#fff,#fff,#f33,#f00,#f00,#f00,#f10,#f40,#f10,#f30,#f10,#f20,#f40,#f30,#f30,#f00,#f00,#f00,#f00,#f00,#f00,#f00,#f00,#f00,#f30,#fa0,#ee0,#fb0,#fe0,#5f2,#6f1,#ee0,#bf0,#fd0,#f90,#f70,#f70,#f80,#f00,#f60,#fb0,#fc0,#de0,#af0,#8f1,#7f1,#3f2,#0ef,#0cf,#0af,#05f,#06f,#11f,#63f,#31f,#14f,#12f,#13f,#07f,#0df,#0ff,#0fe,#8f1,#0f6,#0f8,#5f2,#7f1,#0f5,#0f7,#0fc,#0fc,#08f,#07f,#13f,#11f,#0bf,#0f9,#3f2)"></div><div style="height:1.525px;background:linear-gradient(90deg,#fff,#fff,#fff,#fff,#fff,#fff,#fff,#fff,#fff,#fff,#fff,#fff,#fff,#fff,#fff,#fff,#fff,#fff,#fff,#fff,#fff,#fff,#fff,#fff,#fff,#fff,#fff,#fff,#fff,#fff,#fff,#fff,#fff,#fff,#fff,#fff,#fff,#fff,#fff,#fff,#fff,#fff,#fff,#f33,#f00,#f30,#f40,#f70,#fa0,#fe0,#cf0,#bf0,#cf0,#ee0,#f80,#f80,#f40,#f00,#f10,#f00,#f00,#f20,#f40,#f80,#f70,#fa0,#fe0,#de0,#fe0,#fc0,#fe0,#bf0,#af0,#9f0,#6f1,#0f5,#7f1,#1f3,#0ff,#08f,#08f,#10f,#21f,#13f,#0df,#05f,#08f,#08f,#0cf,#0df,#0fe,#0f4,#0f4,#0cf,#4f2,#0f8,#0f3,#4f2,#1f3,#8f0,#5f2,#0f5,#0f4,#0cf,#09f,#05f,#15f,#14f,#12f,#11f,#07f,#0af,#08f,#0bf,#0fc,#0f6,#2f3,#3f2,#0f7)"></div><div style="height:1.525px;background:linear-gradient(90deg,#fff,#fff,#fff,#fff,#fff,#fff,#fff,#fff,#fff,#fff,#fff,#fff,#fff,#fff,#fff,#fff,#fff,#fff,#fff,#fff,#fff,#fff,#fff,#fff,#fff,#fff,#fff,#fff,#fff,#fff,#fff,#fff,#fff,#fff,#fff,#fff,#fff,#fff,#fff,#fff,#fff,#fff,#fff,#f33,#f00,#f00,#f00,#f30,#f50,#f80,#f90,#fb0,#fc0,#f90,#fa0,#fc0,#f80,#f90,#fa0,#fb0,#fd0,#fd0,#cf0,#cf0,#df0,#7f1,#7f1,#de0,#4f2,#bf0,#cf0,#ee0,#7f1,#de0,#bf0,#cf0,#6f1,#3f2,#0f5,#0f5,#0f8,#0f6,#0df,#0fb,#0ff,#0f8,#de0,#cf0,#af0,#3f3,#0f8,#1f3,#1f3,#7f1,#2f3,#4f2,#3f3,#3f2,#4f2,#bf0,#af0,#3f2,#0f9,#0f7,#0ef,#0cf,#0ef,#0df,#0fe,#0fc,#0cf,#0af,#0cf,#0af,#0bf,#08f,#0bf,#0bf,#0af)"></div><div style="height:1.525px;background:linear-gradient(90deg,#fff,#fff,#fff,#fff,#fff,#fff,#fff,#fff,#fff,#fff,#fff,#fff,#fff,#fff,#fff,#fff,#fff,#fff,#fff,#fff,#fff,#fff,#fff,#fff,#fff,#fff,#fff,#fff,#fff,#fff,#fff,#fff,#fff,#fff,#fff,#fff,#fff,#fff,#fff,#fff,#fff,#fff,#fff,#f33,#f20,#f20,#f60,#f80,#fa0,#fc0,#fb0,#f80,#f60,#f40,#f90,#f60,#f20,#f10,#f00,#f80,#fd0,#de0,#bf0,#8f0,#af0,#af0,#de0,#9f0,#de0,#fe0,#fc0,#fd0,#f80,#de0,#7f1,#0fe,#0f9,#0ef,#0af,#0af,#08f,#06f,#0bf,#0f9,#0f6,#0fe,#0f4,#5f2,#7f1,#af0,#de0,#fe0,#de0,#cf0,#fd0,#de0,#ee0,#8f0,#de0,#2f3,#5f2,#1f3,#0f5,#0f5,#0ff,#0fe,#0df,#0af,#0ef,#14f,#63f,#13f,#20f,#0bf,#09f,#4f2,#5f1,#fe0,#f70)"></div><div style="height:1.525px;background:linear-gradient(90deg,#fff,#fff,#fff,#fff,#fff,#fff,#fff,#fff,#fff,#fff,#fff,#fff,#fff,#fff,#fff,#fff,#fff,#fff,#fff,#fff,#fff,#fff,#fff,#fff,#fff,#fff,#fff,#fff,#fff,#fff,#fff,#fff,#fff,#fff,#fff,#fff,#fff,#fff,#fff,#fff,#fff,#fff,#fff,#f33,#f00,#f10,#f30,#f30,#f60,#f80,#f70,#f80,#f80,#f70,#fa0,#fe0,#df0,#de0,#bf0,#cf0,#de0,#8f0,#de0,#fb0,#fa0,#fc0,#fb0,#f60,#fe0,#fb0,#fa0,#fc0,#de0,#fc0,#f80,#f30,#f80,#f00,#f50,#f30,#f30,#f30,#f10,#fa0,#fe0,#f90,#ee0,#fe0,#ee0,#cf0,#8f1,#af0,#ee0,#af0,#6f1,#2f3,#6f1,#7f1,#4f2,#bf0,#6f1,#de0,#de0,#de0,#fd0,#fb0,#9f0,#6f1,#5f2,#6f1,#0f4,#6f1,#bf0,#8f0,#3f2,#fb0,#f40,#f60,#fb0)"></div><div style="height:1.525px;background:linear-gradient(90deg,#fff,#fff,#fff,#fff,#fff,#fff,#fff,#fff,#fff,#fff,#fff,#fff,#fff,#fff,#fff,#fff,#fff,#fff,#fff,#fff,#fff,#fff,#fff,#fff,#fff,#fff,#fff,#fff,#fff,#fff,#fff,#fff,#fff,#fff,#fff,#fff,#fff,#fff,#fff,#fff,#fff,#fff,#fff,#f33,#f00,#f00,#f00,#f00,#f00,#f00,#f00,#f00,#f00,#f20,#f10,#f50,#f20,#f30,#f10,#f00,#f00,#f00,#f00,#f00,#f00,#f00,#f00,#f00,#f00,#f10,#f30,#f00,#f30,#f40,#f90,#fd0,#cf0,#fd0,#f90,#f90,#f30,#f00,#f00,#f00,#f00,#f00,#f00,#f00,#f00,#f00,#f00,#f30,#f80,#fa0,#fe0,#bf0,#8f1,#8f1,#4f2,#7f1,#7f1,#6f1,#fd0,#fa0,#f90,#f90,#bf0,#af0,#fd0,#fe0,#fe0,#fd0,#f60,#f70,#f80,#f80,#fc0,#8f1,#5f2)"></div><div style="height:1.525px;background:linear-gradient(90deg,#fff,#fff,#fff,#fff,#fff,#fff,#fff,#fff,#fff,#fff,#fff,#fff,#fff,#fff,#fff,#fff,#fff,#fff,#fff,#fff,#fff,#fef,#fef,#eef,#fef,#eef,#eef,#eef,#eef,#eef,#eef,#eef,#eef,#eef,#eef,#eef,#fff,#fef,#fff,#fff,#fff,#fff,#fff,#f33,#f00,#f00,#f00,#f00,#f00,#f00,#f00,#f00,#f00,#f00,#f00,#f00,#f10,#f20,#f00,#f00,#f20,#f70,#f70,#f70,#f50,#f20,#f50,#f50,#f60,#f60,#f40,#fa0,#fe0,#8f0,#7f1,#9f0,#8f0,#ee0,#fd0,#f50,#f20,#f20,#f20,#f90,#f30,#f30,#f80,#f10,#f50,#f00,#f20,#f00,#f00,#f00,#f00,#f00,#f50,#fd0,#fd0,#fe0,#bf0,#fd0,#fa0,#ee0,#cf0,#de0,#f90,#ee0,#fb0,#de0,#bf0,#2f3,#0f4,#bf0,#af0,#3f2,#0f5,#8f0,#bf0)"></div><div style="height:1.525px;background:linear-gradient(90deg,#fff,#fff,#eef,#eef,#fef,#fff,#fef,#fff,#fff,#fff,#fef,#eef,#eef,#eef,#eef,#eef,#eef,#edf,#eef,#eef,#eef,#eef,#eef,#eef,#fef,#fef,#fef,#fff,#fef,#eef,#fff,#eef,#fff,#fff,#fef,#eef,#eef,#eef,#edf,#edf,#edf,#edf,#edf,#f33,#f00,#f00,#f00,#f00,#f00,#f10,#f10,#f20,#f20,#f30,#f20,#f40,#f60,#f50,#f30,#f60,#f50,#f50,#f00,#f00,#f00,#f00,#f00,#f50,#f00,#f00,#f00,#f90,#fa0,#fd0,#fd0,#f80,#fa0,#cf0,#2f3,#0f8,#0f5,#3f2,#cf0,#7f1,#5f2,#9f0,#de0,#f80,#f20,#f30,#f80,#fb0,#f80,#f50,#f30,#f60,#fb0,#de0,#5f2,#9f0,#0f8,#3f2,#0f7,#0ff,#0ff,#0ff,#0f8,#2f3,#4f2,#fd0,#ee0,#ee0,#f70,#f80,#f30,#f20,#f00,#f90,#fa0)"></div><div style="height:1.525px;background:linear-gradient(90deg,#eef,#eef,#ddf,#85f,#53f,#53f,#42f,#74f,#31f,#20f,#31f,#53f,#31f,#52f,#a8f,#85f,#97f,#baf,#edf,#eef,#ddf,#ddf,#fff,#eef,#baf,#eef,#fff,#fff,#fff,#fff,#fff,#ddf,#a8f,#97f,#ddf,#cbf,#74f,#98f,#52f,#42f,#53f,#a8f,#ddf,#f33,#f00,#f00,#f00,#f00,#f10,#f40,#f80,#f80,#f90,#fb0,#fa0,#fa0,#fb0,#fa0,#f80,#f60,#fc0,#f90,#f60,#fb0,#f90,#fa0,#fa0,#f90,#f70,#f00,#f00,#f00,#f00,#f20,#f00,#f40,#f90,#fc0,#cf0,#af0,#7f1,#8f1,#ee0,#af0,#fb0,#f40,#f40,#f20,#f30,#fa0,#fd0,#af0,#6f1,#1f3,#0fb,#0fb,#0fb,#0fc,#5f2,#de0,#fd0,#f80,#f30,#f30,#f00,#f00,#f30,#f90,#fd0,#fc0,#fd0,#fc0,#bf0,#9f0,#7f1,#8f0,#7f1,#8f1,#6f1)"></div><div style="height:1.525px;background:linear-gradient(90deg,#ddf,#edf,#ddf,#edf,#edf,#ddf,#edf,#edf,#eef,#eef,#eef,#ccf,#ddf,#dcf,#edf,#eef,#eef,#eef,#edf,#ddf,#eef,#fff,#eef,#fff,#eef,#fff,#fff,#fff,#fff,#fff,#eef,#edf,#eef,#ddf,#ddf,#cbf,#98f,#ccf,#baf,#ddf,#cbf,#baf,#b9f,#e23,#f00,#f00,#f00,#f00,#f00,#f00,#f00,#f00,#f00,#f00,#f00,#f00,#f00,#f00,#f00,#f00,#f00,#f10,#f20,#f70,#fb0,#fa0,#fa0,#f90,#fb0,#de0,#fd0,#fa0,#f80,#f90,#fc0,#de0,#fd0,#f90,#f90,#fc0,#fd0,#fe0,#fe0,#de0,#fd0,#bf0,#7f1,#8f1,#fc0,#f90,#f60,#f40,#f00,#f00,#f00,#f00,#f00,#f10,#fc0,#fa0,#cf0,#fe0,#fe0,#fe0,#f90,#fb0,#f70,#f70,#f70,#f00,#f90,#f60,#f30,#f60,#f80,#f60,#f00,#f20,#fb0)"></div><div style="height:1.525px;background:linear-gradient(90deg,#baf,#a9f,#a9f,#baf,#ddf,#edf,#eef,#eef,#eef,#edf,#fff,#fff,#fff,#eef,#edf,#baf,#b9f,#a8f,#baf,#a8f,#a8f,#a8f,#a8f,#a8f,#a8f,#eef,#edf,#eef,#edf,#eef,#eef,#fff,#fff,#fff,#fff,#eef,#eef,#edf,#eef,#eef,#fef,#eef,#eef,#f33,#f00,#f00,#f10,#f30,#f60,#f90,#f90,#fc0,#fe0,#cf0,#bf0,#af0,#2f3,#0f3,#4f2,#3f2,#8f1,#9f0,#bf0,#af0,#6f1,#de0,#fd0,#de0,#af0,#9f0,#9f0,#bf0,#bf0,#af0,#af0,#8f0,#5f2,#5f2,#4f2,#0fc,#0f7,#0f3,#5f2,#0f5,#0ff,#4f2,#2f3,#1f3,#8f1,#0f6,#0f7,#0fb,#0f7,#2f3,#0ff,#0fa,#0fe,#0f5,#0f6,#0fb,#0f7,#0f8,#0f4,#0cf,#13f,#42f,#42f,#10f,#21f,#10f,#53f,#86f,#05f,#0df,#5f2,#0f7,#0f6,#1f3,#1f3)"></div><div style="height:1.525px;background:linear-gradient(90deg,#edf,#eef,#fff,#eef,#edf,#cbf,#98f,#baf,#baf,#edf,#a9f,#74f,#63f,#63f,#63f,#cbf,#dcf,#dcf,#86f,#63f,#b9f,#ddf,#cbf,#cbf,#baf,#a8f,#98f,#cbf,#eef,#fff,#eef,#cbf,#86f,#cbf,#ddf,#64f,#63f,#63f,#63f,#63f,#74f,#a8f,#baf,#e13,#f00,#f00,#f00,#f10,#f10,#f50,#f70,#f60,#f40,#f40,#f80,#f50,#f20,#f70,#f40,#f50,#f80,#fd0,#de0,#fe0,#bf0,#5f2,#cf0,#ee0,#de0,#bf0,#ee0,#7f1,#3f2,#5f2,#5f2,#1f3,#0f6,#0ef,#0ef,#0bf,#0ff,#0ff,#0f8,#0f7,#0fb,#0ff,#0fa,#0f7,#0f5,#0fc,#0f5,#0fc,#0fe,#0fa,#0f5,#0f5,#0fb,#0f9,#3f2,#0fc,#09f,#0af,#06f,#14f,#12f,#0df,#08f,#0bf,#07f,#0fd,#0bf,#08f,#08f,#0af,#21f,#15f,#11f,#0bf,#13f)"></div><div style="height:1.525px;background:linear-gradient(90deg,#fef,#fff,#fff,#fff,#fff,#fff,#fff,#fff,#fff,#fff,#fff,#fff,#fff,#fff,#fff,#fff,#fff,#fff,#fff,#fff,#fff,#fff,#fff,#fff,#fff,#fff,#fff,#fff,#fff,#fef,#eef,#ddf,#a8f,#ccf,#baf,#cbf,#97f,#97f,#63f,#63f,#85f,#86f,#cbf,#27f,#11f,#13f,#05f,#13f,#0af,#08f,#08f,#09f,#06f,#0af,#0cf,#0cf,#07f,#0cf,#0df,#0ef,#0df,#4f2,#0f7,#0f8,#0f7,#5f1,#0fc,#0ef,#0fc,#0f7,#0af,#0fd,#0fc,#0fd,#07f,#08f,#09f,#05f,#14f,#11f,#07f,#0af,#07f,#09f,#06f,#09f,#0cf,#08f,#09f,#06f,#13f,#06f,#09f,#0af,#0ff,#0ef,#0fe,#0f3,#6f1,#9f0,#af0,#9f0,#af0,#4f2,#5f2,#3f3,#0ef,#07f,#06f,#31f,#21f,#42f,#86f,#cbf,#53f,#52f,#31f,#42f,#05f)"></div><div style="height:1.525px;background:linear-gradient(90deg,#f70,#f80,#f20,#f70,#fa0,#de0,#af0,#2f3,#0f3,#0fb,#0fc,#0bf,#0fc,#0fd,#0ff,#0af,#0df,#0f3,#2f3,#1f3,#0f9,#0df,#0f8,#0ff,#6f1,#5f2,#0f8,#0fb,#9f0,#fd0,#cf0,#2f3,#2f3,#af0,#de0,#cf0,#de0,#4f2,#0f8,#0f5,#0f4,#cf0,#0f9,#09f,#0fb,#0df,#08f,#0bf,#0fe,#0fd,#0af,#0fd,#1f3,#0ff,#0df,#0df,#0df,#0bf,#0af,#0cf,#09f,#21f,#32f,#12f,#0af,#0bf,#09f,#0bf,#0af,#14f,#07f,#0fc,#0fc,#0ff,#0df,#0fd,#0f9,#0f9,#0f5,#6f1,#3f2,#0f7,#0fd,#0f4,#0f5,#1f3,#5f2,#9f0,#8f1,#5f2,#ee0,#fe0,#9f0,#9f0,#0f4,#0fe,#0cf,#0bf,#0df,#0af,#0df,#0bf,#08f,#0ff,#0fe,#1f3,#0f7,#0f6,#0f5,#0fa,#0f5,#5f2,#0fa,#0f9,#0fc,#0fc,#0ef,#0df,#0df)"></div></div>
<svg style="position:absolute;left:0;top:0" width="1142" height="746"><line x1="284" y1="146.5" x2="284" y2="195.7" stroke="#000" stroke-opacity="0.16" stroke-width="1" stroke-dasharray="4,3"/><line x1="454.5" y1="146.5" x2="454.5" y2="195.7" stroke="#000" stroke-opacity="0.16" stroke-width="1" stroke-dasharray="4,3"/><line x1="624.5" y1="146.5" x2="624.5" y2="195.7" stroke="#000" stroke-opacity="0.16" stroke-width="1" stroke-dasharray="4,3"/><line x1="795" y1="146.5" x2="795" y2="195.7" stroke="#000" stroke-opacity="0.16" stroke-width="1" stroke-dasharray="4,3"/><line x1="965.5" y1="146.5" x2="965.5" y2="195.7" stroke="#000" stroke-opacity="0.16" stroke-width="1" stroke-dasharray="4,3"/><polyline points="135,171.3 136,170.4 138,171.3 140,170.8 141,171.4 142,171.1 144,171.2 146,170.5 147,171.2 148,171.0 150,171.3 152,170.6 153,171.1 154,170.3 156,171.4 158,170.8 159,171.4 160,170.9 162,171.2 164,170.3 165,171.6 166,170.7 168,171.9 170,170.9 171,171.7 172,170.7 174,171.2 176,170.4 177,171.2 178,170.4 180,171.2 182,170.5 183,172.0 184,170.5 186,171.3 188,170.7 189,171.4 190,171.1 192,171.1 194,170.7 195,171.7 196,170.9 198,171.5 200,170.5 201,171.6 202,171.0 204,171.9 206,171.1 207,171.7 208,170.1 210,171.4 212,170.6 213,171.6 214,170.6 216,171.3 218,170.8 219,171.2 220,170.6 222,171.7 224,170.9 225,171.2 226,170.8 228,171.5 230,170.7 231,171.5 232,170.7 234,171.1 236,170.6 237,171.7 238,170.2 240,171.2 242,170.9 243,171.6 244,170.4 246,171.7 248,170.2 249,171.5 250,170.5 252,171.7 254,170.8 255,171.9 256,170.5 258,171.9 260,170.8 261,171.9 262,171.0 264,171.7 266,170.6 267,171.2 268,170.4 270,171.4 272,170.6 273,171.2 274,170.2 276,171.7 278,170.7 279,171.7 280,170.6 282,172.0 284,170.6 285,171.2 286,170.8 288,172.0 290,170.5 291,171.4 292,170.5 294,171.6 296,170.5 297,171.2 298,171.0 300,171.7 302,170.8 303,171.6 304,170.0 306,171.4 308,170.6 309,171.3 310,170.9 312,171.5 314,171.0 315,171.4 316,170.2 318,171.5 320,170.3 321,171.6 322,170.6 324,171.7 326,170.4 327,171.1 328,170.3 330,171.2 332,170.6 333,172.4 334,170.7 336,172.1 338,170.8 339,171.7 340,170.7 342,171.7 344,171.0 345,171.2 346,170.6 348,171.2 350,171.0 351,171.7 352,170.9 354,171.2 356,171.1 357,171.6 358,170.8 360,171.6 362,170.7 363,172.1 364,170.8 366,171.4 368,170.6 369,171.5 370,170.6 372,171.2 374,170.3 375,171.5 376,170.7 378,171.2 380,170.5 381,171.5 382,170.2 384,171.4 386,171.1 387,171.6 388,171.0 390,171.7 392,171.1 393,171.5 394,170.8 396,171.5 398,170.9 399,171.2 400,170.7 402,171.3 404,170.6 405,171.4 406,170.8 408,171.5 410,170.2 411,171.6 412,170.5 414,171.7 416,170.8 417,171.1 418,170.4 420,171.9 422,170.5 423,171.7 424,170.6 426,171.5 428,170.6 429,171.5 430,170.6 432,171.2 434,170.9 435,171.7 436,170.8 438,171.5 440,170.6 441,171.5 442,170.0 444,171.8 446,170.5 447,171.3 448,171.1 450,171.4 452,170.7 453,171.3 454,170.6 456,171.7 458,170.5 459,171.2 460,170.8 462,171.5 464,170.9 465,171.7 466,170.1 468,172.1 470,170.6 471,171.9 472,170.1 474,171.5 476,170.6 477,171.8 478,170.7 480,171.4 482,170.9 483,171.5 484,170.9 486,171.8 488,170.8 489,172.0" fill="none" stroke="#333" stroke-width="0.9"/><polyline points="489.5,170.2 490.5,178.2 491.5,169.0 492.5,173.1 493.5,181.1 494.5,158.1 495.5,176.9 496.5,165.9 497.5,190.0 498.5,147.8 499.5,194.4 500.5,157.3 501.5,175.7 502.5,190.3 503.5,161.0 504.5,181.2 505.5,156.7 506.5,185.8 507.5,158.1 508.5,179.2 509.5,168.8 510.5,166.5 511.5,181.3 512.5,176.4 513.5,171.6 514.5,170.7 515.5,154.6 516.5,194.9 517.5,161.3 518.5,171.0 519.5,169.9 520.5,177.8 521.5,158.0 522.5,188.3 523.5,149.2 524.5,178.7 525.5,170.5 526.5,156.6 527.5,184.9 528.5,166.8 529.5,159.5 530.5,190.9 531.5,151.2 532.5,188.3 533.5,162.4 534.5,170.5 535.5,170.0 536.5,159.3 537.5,177.2 538.5,163.2 539.5,188.4 540.5,164.3 541.5,163.0 542.5,186.0 543.5,160.9 544.5,173.7 545.5,174.5 546.5,172.1 547.5,165.7 548.5,174.2 549.5,170.7 550.5,164.8 551.5,178.1 552.5,165.9 553.5,170.2 554.5,168.9 555.5,175.0 556.5,172.6 557.5,170.2 558.5,167.2 559.5,178.7 560.5,165.9 561.5,176.5 562.5,173.0 563.5,163.6 564.5,176.9 565.5,165.1 566.5,171.1 567.5,181.4 568.5,165.4 569.5,166.1 570.5,179.2 571.5,162.7 572.5,181.1 573.5,164.5 574.5,173.7 575.5,171.1 576.5,171.7 577.5,170.6 578.5,170.6 579.5,171.2 580.5,172.9 581.5,165.6 582.5,175.8 583.5,168.0 584.5,171.1 585.5,174.3 586.5,164.0 587.5,175.6 588.5,166.3 589.5,175.8 590.5,166.7 591.5,174.0 592.5,170.8 593.5,166.1 594.5,177.1 595.5,164.9 596.5,174.4 597.5,169.5 598.5,173.7 599.5,171.0 600.5,174.8 601.5,168.1 602.5,171.7 603.5,170.2 604.5,173.2 605.5,173.0 606.5,169.5 607.5,170.8 608.5,172.4 609.5,170.5 610.5,171.4 611.5,169.5 612.5,167.4 613.5,174.0 614.5,171.5 615.5,170.2 616.5,167.6 617.5,174.6 618.5,166.0 619.5,176.1 620.5,166.1 621.5,171.7 622.5,173.4 623.5,167.4 624.5,174.8 625.5,168.7 626.5,170.3 627.5,173.6 628.5,166.9 629.5,175.4 630.5,167.5 631.5,171.4 632.5,169.2 633.5,175.1 634.5,169.9 635.5,169.2 636.5,175.0 637.5,167.8 638.5,172.6 639.5,170.5 640.5,170.8 641.5,173.4 642.5,169.2 643.5,169.9 644.5,174.6 645.5,168.5 646.5,171.0 647.5,171.6 648.5,169.6 649.5,172.4 650.5,170.8 651.5,171.3 652.5,170.3 653.5,170.9 654.5,172.5 655.5,169.7 656.5,174.2 657.5,168.1 658.5,174.1 659.5,169.1 660.5,171.2 661.5,173.0 662.5,169.4 663.5,171.2 664.5,171.2 665.5,172.0 666.5,168.9 667.5,173.9 668.5,169.4 669.5,171.4 670.5,172.6 671.5,171.3 672.5,171.1 673.5,171.3 674.5,172.8 675.5,170.9 676.5,169.8 677.5,172.2 678.5,170.3 679.5,171.2 680.5,169.8 681.5,173.2 682.5,169.6 683.5,172.0 684.5,172.1 685.5,169.3 686.5,172.5 687.5,170.6 688.5,170.7 689.5,171.5 690.5,171.6 691.5,170.5 692.5,172.9 693.5,168.8 694.5,173.0 695.5,168.5 696.5,172.9 697.5,169.4 698.5,173.6 699.5,170.0 700.5,171.9 701.5,172.7 702.5,170.9 703.5,171.6 704.5,169.9 705.5,170.5 706.5,172.0 707.5,170.0 708.5,171.1 709.5,171.1 710.5,169.2 711.5,174.4 712.5,167.8 713.5,173.3 714.5,171.0 715.5,168.5 716.5,174.5 717.5,169.6 718.5,171.1 719.5,170.2 720.5,171.3 721.5,168.8 722.5,174.7 723.5,168.1 724.5,171.8 725.5,170.1 726.5,172.6 727.5,172.0 728.5,168.0 729.5,173.0 730.5,167.8 731.5,174.6 732.5,168.9 733.5,175.0 734.5,167.6 735.5,172.6 736.5,169.7 737.5,173.2 738.5,167.1 739.5,175.2 740.5,168.6 741.5,171.4 742.5,170.2 743.5,173.5 744.5,171.9 745.5,168.9 746.5,173.8 747.5,171.9 748.5,168.5 749.5,172.9 750.5,168.2 751.5,173.1 752.5,170.0 753.5,170.9 754.5,170.4 755.5,169.2 756.5,170.9 757.5,170.3 758.5,173.0 759.5,168.7 760.5,171.4 761.5,172.6 762.5,170.5 763.5,170.0 764.5,171.3 765.5,172.3 766.5,170.5 767.5,169.9 768.5,172.8 769.5,169.8 770.5,173.7 771.5,167.5 772.5,175.2 773.5,169.0 774.5,170.1 775.5,174.4 776.5,169.8 777.5,169.1 778.5,175.8 779.5,166.4 780.5,174.2 781.5,169.6 782.5,172.9 783.5,170.8 784.5,170.6 785.5,173.9 786.5,169.2 787.5,174.4 788.5,173.3 789.5,168.3 790.5,168.7 791.5,173.4 792.5,167.8 793.5,173.7 794.5,169.8 795.5,169.5 796.5,171.1 797.5,171.2 798.5,170.7 799.5,167.1 800.5,175.6 801.5,167.1 802.5,173.2 803.5,170.8 804.5,169.1 805.5,173.0 806.5,171.6 807.5,171.8 808.5,171.0 809.5,170.5 810.5,170.4 811.5,174.0 812.5,169.4 813.5,171.2 814.5,168.2 815.5,172.5 816.5,167.7 817.5,175.2 818.5,168.0 819.5,171.6 820.5,171.2 821.5,174.7 822.5,169.4 823.5,169.6 824.5,172.8 825.5,168.2 826.5,170.9 827.5,172.4 828.5,173.3 829.5,170.8 830.5,170.8 831.5,171.0 832.5,171.6 833.5,172.1 834.5,168.1 835.5,171.2 836.5,174.4 837.5,168.3 838.5,174.5 839.5,168.7 840.5,174.1 841.5,168.2 842.5,173.6 843.5,171.5 844.5,171.2 845.5,170.3 846.5,172.9 847.5,168.9 848.5,171.0 849.5,172.5 850.5,171.5 851.5,171.3 852.5,169.4 853.5,173.6 854.5,170.0 855.5,170.9 856.5,168.9 857.5,173.9 858.5,169.7 859.5,172.0 860.5,168.9 861.5,171.4 862.5,172.5 863.5,170.5 864.5,171.8 865.5,170.4 866.5,171.9 867.5,170.0 868.5,171.6 869.5,170.1 870.5,172.1 871.5,170.0 872.5,172.7 873.5,170.6 874.5,170.4 875.5,173.5 876.5,168.7 877.5,173.5 878.5,170.5 879.5,172.0 880.5,168.8 881.5,173.4 882.5,170.0 883.5,172.5 884.5,168.8 885.5,172.9 886.5,170.2 887.5,171.0 888.5,172.6 889.5,169.1 890.5,173.3 891.5,169.8 892.5,170.3 893.5,171.4 894.5,170.7 895.5,171.5 896.5,171.7 897.5,170.3 898.5,172.5 899.5,168.9 900.5,170.4 901.5,172.2 902.5,170.6 903.5,170.9 904.5,170.6 905.5,172.0 906.5,172.0 907.5,169.8 908.5,171.4 909.5,170.5 910.5,173.4 911.5,169.1 912.5,172.9 913.5,171.1 914.5,171.5 915.5,169.9 916.5,173.0 917.5,170.4 918.5,171.6 919.5,171.7 920.5,169.8 921.5,172.1 922.5,170.0 923.5,172.5 924.5,169.4 925.5,172.7 926.5,169.0 927.5,172.5 928.5,170.0 929.5,171.6 930.5,171.1 931.5,170.8 932.5,171.2 933.5,168.9 934.5,173.9 935.5,168.3 936.5,172.8 937.5,169.5 938.5,173.2 939.5,168.5 940.5,173.5 941.5,170.9 942.5,172.4 943.5,171.3 944.5,171.3 945.5,169.5 946.5,174.2 947.5,170.1 948.5,172.2 949.5,171.4 950.5,170.6 951.5,170.9 952.5,172.9 953.5,171.1 954.5,169.2 955.5,174.2 956.5,169.1 957.5,173.3 958.5,170.0 959.5,173.0 960.5,171.0 961.5,171.8 962.5,168.5 963.5,174.6 964.5,168.7 965.5,170.8 966.5,173.2 967.5,167.3 968.5,175.0 969.5,170.6 970.5,169.5 971.5,174.2 972.5,169.3 973.5,172.9 974.5,167.9 975.5,174.6 976.5,169.0 977.5,173.3 978.5,169.7 979.5,173.5 980.5,169.7 981.5,172.9 982.5,172.1 983.5,169.9 984.5,173.6 985.5,169.5 986.5,172.8 987.5,169.2 988.5,173.8 989.5,171.2 990.5,170.1 991.5,173.4 992.5,170.0 993.5,169.7 994.5,173.5 995.5,171.6 996.5,169.2 997.5,169.8 998.5,173.3 999.5,168.3 1000.5,175.7 1001.5,166.9 1002.5,173.6 1003.5,169.0 1004.5,172.9 1005.5,169.1 1006.5,170.9 1007.5,171.8 1008.5,169.1 1009.5,175.1 1010.5,166.5 1011.5,174.8 1012.5,168.0 1013.5,170.6 1014.5,175.5 1015.5,166.5 1016.5,175.7 1017.5,166.5 1018.5,175.7 1019.5,172.4 1020.5,166.5 1021.5,174.6 1022.5,172.1 1023.5,169.5 1024.5,171.5 1025.5,171.2 1026.5,169.3 1027.5,173.1 1028.5,172.4 1029.5,168.7 1030.5,173.3 1031.5,171.8 1032.5,173.1 1033.5,168.0 1034.5,174.0 1035.5,168.4 1036.5,171.8 1037.5,170.7 1038.5,170.3 1039.5,169.2 1040.5,170.0 1041.5,171.6 1042.5,171.2 1043.5,172.8 1044.5,168.7 1045.5,172.7 1046.5,171.4 1047.5,171.5 1048.5,170.5 1049.5,171.5 1050.5,173.8 1051.5,168.0 1052.5,172.6 1053.5,168.3 1054.5,174.0 1055.5,168.8 1056.5,175.0 1057.5,167.5 1058.5,174.5 1059.5,170.3 1060.5,173.2 1061.5,167.6 1062.5,174.8 1063.5,167.6 1064.5,172.9 1065.5,170.1 1066.5,171.0 1067.5,171.0 1068.5,168.2 1069.5,174.6 1070.5,168.8 1071.5,171.1 1072.5,171.8" fill="none" stroke="#000" stroke-width="1.35"/><line x1="128.5" y1="146.5" x2="128.5" y2="195.7" stroke="#000" stroke-width="1.1"/><line x1="123.5" y1="150.4" x2="128.5" y2="150.4" stroke="#000" stroke-width="1.1"/><line x1="123.5" y1="160.3" x2="128.5" y2="160.3" stroke="#000" stroke-width="1.1"/><line x1="118.0" y1="171.3" x2="128.5" y2="171.3" stroke="#000" stroke-width="1.1"/><line x1="123.5" y1="181.4" x2="128.5" y2="181.4" stroke="#000" stroke-width="1.1"/><line x1="123.5" y1="192.4" x2="128.5" y2="192.4" stroke="#000" stroke-width="1.1"/><line x1="1079.5" y1="146.5" x2="1079.5" y2="195.7" stroke="#000" stroke-width="1.1"/><line x1="1079.5" y1="146.8" x2="1082.0" y2="146.8" stroke="#000" stroke-width="1.1"/><line x1="1079.5" y1="156.6" x2="1084.5" y2="156.6" stroke="#000" stroke-width="1.1"/><line x1="1079.5" y1="166.8" x2="1082.0" y2="166.8" stroke="#000" stroke-width="1.1"/><line x1="1079.5" y1="176.5" x2="1084.5" y2="176.5" stroke="#000" stroke-width="1.1"/><line x1="1079.5" y1="186.7" x2="1082.0" y2="186.7" stroke="#000" stroke-width="1.1"/><line x1="1079.5" y1="195.6" x2="1084.5" y2="195.6" stroke="#000" stroke-width="1.1"/><rect x="135.9" y="146.7" width="11.5" height="21.5" fill="#fff" stroke="#000" stroke-width="1"/><line x1="284" y1="202.5" x2="284" y2="251.7" stroke="#000" stroke-opacity="0.16" stroke-width="1" stroke-dasharray="4,3"/><line x1="454.5" y1="202.5" x2="454.5" y2="251.7" stroke="#000" stroke-opacity="0.16" stroke-width="1" stroke-dasharray="4,3"/><line x1="624.5" y1="202.5" x2="624.5" y2="251.7" stroke="#000" stroke-opacity="0.16" stroke-width="1" stroke-dasharray="4,3"/><line x1="795" y1="202.5" x2="795" y2="251.7" stroke="#000" stroke-opacity="0.16" stroke-width="1" stroke-dasharray="4,3"/><line x1="965.5" y1="202.5" x2="965.5" y2="251.7" stroke="#000" stroke-opacity="0.16" stroke-width="1" stroke-dasharray="4,3"/><polyline points="135,227.6 136,226.6 138,227.1 140,226.9 141,227.5 142,226.5 144,227.5 146,226.9 147,227.1 148,226.6 150,227.1 152,227.1 153,227.5 154,226.6 156,227.3 158,226.9 159,227.7 160,226.4 162,227.4 164,226.8 165,227.5 166,226.3 168,227.2 170,226.4 171,227.3 172,226.7 174,227.5 176,226.9 177,228.5 178,227.0 180,227.6 182,226.9 183,227.5 184,226.2 186,227.3 188,226.7 189,227.7 190,226.6 192,227.7 194,226.9 195,227.2 196,227.1 198,227.4 200,226.4 201,227.6 202,226.1 204,227.6 206,226.6 207,227.6 208,226.9 210,227.8 212,227.0 213,227.4 214,225.8 216,227.1 218,226.6 219,227.7 220,226.6 222,227.6 224,226.8 225,228.2 226,226.8 228,227.2 230,226.1 231,227.7 232,226.9 234,227.2 236,226.7 237,228.5 238,226.5 240,227.2 242,226.6 243,227.3 244,226.1 246,227.7 248,226.2 249,227.6 250,225.9 252,227.7 254,226.6 255,227.2 256,226.8 258,227.7 260,226.8 261,228.4 262,226.7 264,227.3 266,226.3 267,227.4 268,226.5 270,227.5 272,226.9 273,228.0 274,226.6 276,227.9 278,226.8 279,227.1 280,227.1 282,227.4 284,226.7 285,227.6 286,226.5 288,227.1 290,226.6 291,227.1 292,226.9 294,228.4 296,226.2 297,227.4 298,226.0 300,228.0 302,226.3 303,228.1 304,226.7 306,227.5 308,227.0 309,227.8 310,227.1 312,227.4 314,226.5 315,227.4 316,226.5 318,228.2 320,227.0 321,228.0 322,226.9 324,227.2 326,226.6 327,227.9 328,226.9 330,227.3 332,226.8 333,227.3 334,226.6 336,227.3 338,226.7 339,227.7 340,226.8 342,228.0 344,226.9 345,227.3 346,225.9 348,228.1 350,226.6 351,227.8 352,226.5 354,227.4 356,226.4 357,227.7 358,226.2 360,227.3 362,226.4 363,227.6 364,226.9 366,227.4 368,226.8 369,227.1 370,226.9 372,227.8 374,227.0 375,227.4 376,226.7 378,227.3 380,226.5 381,227.5 382,226.6 384,227.2 386,226.5 387,227.2 388,226.3 390,227.6 392,226.8 393,228.1 394,226.8 396,227.9 398,226.6 399,227.6 400,226.3 402,227.7 404,226.7 405,227.5 406,226.6 408,227.6 410,226.8 411,227.2 412,226.6 414,227.5 416,226.7 417,228.0 418,226.5 420,227.9 422,226.0 423,227.5 424,226.9 426,227.8 428,226.9 429,227.5 430,226.1 432,227.7 434,226.3 435,227.1 436,226.6 438,227.9 440,227.1 441,227.6 442,226.5 444,227.5 446,226.1 447,227.3 448,226.7 450,228.1 452,226.9 453,227.7 454,226.8 456,227.6 458,226.9 459,228.0 460,227.0 462,227.7 464,226.5 465,227.5 466,226.7 468,227.5 470,226.3 471,227.7 472,226.7 474,227.2 476,226.6 477,227.7 478,226.7 480,228.1 482,226.9 483,228.4 484,226.7 486,227.2 488,226.9 489,227.9" fill="none" stroke="#333" stroke-width="0.9"/><polyline points="490.0,222.9 491.0,220.4 492.0,244.3 493.0,221.4 494.0,222.1 495.0,245.6 496.0,210.5 497.0,241.1 498.0,229.1 499.0,217.1 500.0,229.8 501.0,213.5 502.0,241.8 503.0,221.0 504.0,235.6 505.0,225.9 506.0,226.7 507.0,237.4 508.0,209.1 509.0,244.5 510.0,220.3 511.0,227.4 512.0,243.2 513.0,215.4 514.0,244.7 515.0,221.5 516.0,225.8 517.0,246.2 518.0,218.6 519.0,229.7 520.0,226.3 521.0,218.5 522.0,234.4 523.0,220.9 524.0,232.7 525.0,220.3 526.0,236.8 527.0,219.3 528.0,218.5 529.0,233.6 530.0,216.1 531.0,225.1 532.0,230.3 533.0,232.1 534.0,213.0 535.0,223.7 536.0,233.3 537.0,244.3 538.0,206.5 539.0,244.7 540.0,214.3 541.0,239.9 542.0,228.6 543.0,221.0 544.0,240.0 545.0,210.1 546.0,240.7 547.0,211.8 548.0,238.7 549.0,217.2 550.0,234.4 551.0,216.9 552.0,235.9 553.0,222.6 554.0,225.8 555.0,225.5 556.0,223.0 557.0,229.5 558.0,228.1 559.0,224.9 560.0,229.7 561.0,231.4 562.0,220.9 563.0,233.1 564.0,227.1 565.0,227.7 566.0,228.3 567.0,226.2 568.0,235.7 569.0,219.0 570.0,230.6 571.0,228.6 572.0,231.2 573.0,228.4 574.0,224.9 575.0,232.0 576.0,225.1 577.0,227.9 578.0,229.3 579.0,227.0 580.0,227.1 581.0,233.0 582.0,220.4 583.0,236.3 584.0,227.3 585.0,231.0 586.0,224.3 587.0,228.1 588.0,222.3 589.0,231.2 590.0,231.8 591.0,218.9 592.0,230.8 593.0,228.9 594.0,226.1 595.0,222.8 596.0,231.4 597.0,225.3 598.0,223.8 599.0,233.2 600.0,220.1 601.0,234.0 602.0,222.1 603.0,227.8 604.0,224.3 605.0,228.8 606.0,226.2 607.0,227.2 608.0,226.0 609.0,227.7 610.0,228.7 611.0,223.6 612.0,229.5 613.0,226.8 614.0,226.7 615.0,229.3 616.0,228.1 617.0,224.9 618.0,229.3 619.0,222.0 620.0,232.1 621.0,225.6 622.0,225.2 623.0,231.6 624.0,222.4 625.0,231.8 626.0,222.5 627.0,228.7 628.0,226.6 629.0,226.8 630.0,226.1 631.0,226.2 632.0,227.6 633.0,228.3 634.0,226.4 635.0,229.3 636.0,224.4 637.0,228.5 638.0,226.1 639.0,227.8 640.0,227.3 641.0,228.9 642.0,226.2 643.0,227.6 644.0,228.6 645.0,224.6 646.0,227.4 647.0,228.3 648.0,226.1 649.0,227.9 650.0,227.8 651.0,225.9 652.0,227.9 653.0,227.1 654.0,227.6 655.0,227.7 656.0,226.5 657.0,227.8 658.0,224.1 659.0,230.1 660.0,224.1 661.0,230.1 662.0,228.2 663.0,224.8 664.0,227.3 665.0,229.2 666.0,224.5 667.0,228.8 668.0,226.1 669.0,228.3 670.0,227.1 671.0,226.7 672.0,228.6 673.0,224.9 674.0,229.4 675.0,225.0 676.0,229.1 677.0,225.2 678.0,227.9 679.0,228.4 680.0,224.6 681.0,228.0 682.0,227.6 683.0,226.1 684.0,227.5 685.0,226.9 686.0,229.3 687.0,224.3 688.0,229.1 689.0,226.3 690.0,226.3 691.0,228.0 692.0,226.9 693.0,226.1 694.0,229.3 695.0,224.2 696.0,229.1 697.0,226.4 698.0,230.1 699.0,224.1 700.0,230.1 701.0,227.5 702.0,224.9 703.0,230.2 704.0,225.0 705.0,226.6 706.0,228.6 707.0,224.8 708.0,228.9 709.0,224.4 710.0,230.0 711.0,223.8 712.0,230.4 713.0,226.8 714.0,227.0 715.0,226.9 716.0,227.0 717.0,226.7 718.0,230.6 719.0,223.6 720.0,229.3 721.0,225.2 722.0,227.7 723.0,227.9 724.0,225.4 725.0,227.5 726.0,226.6 727.0,227.0 728.0,227.5 729.0,226.1 730.0,227.7 731.0,225.8 732.0,229.8 733.0,225.0 734.0,227.8 735.0,227.4 736.0,226.5 737.0,225.4 738.0,228.7 739.0,228.4 740.0,226.0 741.0,229.4 742.0,224.3 743.0,227.0 744.0,227.1 745.0,229.1 746.0,223.7 747.0,228.6 748.0,228.4 749.0,225.1 750.0,228.4 751.0,227.1 752.0,226.9 753.0,226.9 754.0,227.8 755.0,225.4 756.0,228.4 757.0,227.4 758.0,224.8 759.0,228.9 760.0,224.3 761.0,230.4 762.0,225.8 763.0,228.9 764.0,227.5 765.0,227.8 766.0,227.4 767.0,225.3 768.0,230.2 769.0,223.2 770.0,231.7 771.0,222.5 772.0,230.4 773.0,223.3 774.0,231.4 775.0,226.0 776.0,224.3 777.0,229.2 778.0,225.2 779.0,227.2 780.0,229.8 781.0,228.0 782.0,223.7 783.0,231.8 784.0,223.3 785.0,231.6 786.0,222.5 787.0,231.7 788.0,226.8 789.0,224.8 790.0,231.3 791.0,223.0 792.0,231.6 793.0,225.0 794.0,227.1 795.0,226.6 796.0,227.4 797.0,228.8 798.0,225.4 799.0,227.2 800.0,231.6 801.0,222.6 802.0,231.6 803.0,225.2 804.0,225.7 805.0,229.0 806.0,225.1 807.0,226.2 808.0,229.2 809.0,223.6 810.0,228.6 811.0,228.5 812.0,223.6 813.0,230.8 814.0,226.3 815.0,228.2 816.0,227.0 817.0,226.5 818.0,225.7 819.0,228.8 820.0,226.5 821.0,226.4 822.0,226.5 823.0,229.0 824.0,224.0 825.0,230.0 826.0,224.6 827.0,226.3 828.0,230.7 829.0,224.7 830.0,229.0 831.0,224.2 832.0,229.1 833.0,226.4 834.0,226.2 835.0,230.2 836.0,223.6 837.0,230.6 838.0,223.6 839.0,228.8 840.0,225.6 841.0,228.7 842.0,225.2 843.0,227.6 844.0,226.1 845.0,226.2 846.0,227.2 847.0,226.1 848.0,227.6 849.0,226.5 850.0,224.9 851.0,228.6 852.0,227.6 853.0,225.7 854.0,228.2 855.0,225.7 856.0,227.3 857.0,227.2 858.0,225.6 859.0,228.3 860.0,224.8 861.0,229.2 862.0,224.4 863.0,229.7 864.0,226.4 865.0,225.5 866.0,229.4 867.0,225.0 868.0,229.4 869.0,225.0 870.0,228.1 871.0,226.5 872.0,228.4 873.0,224.6 874.0,229.5 875.0,225.3 876.0,227.5 877.0,227.0 878.0,227.8 879.0,227.1 880.0,228.2 881.0,225.5 882.0,226.7 883.0,227.4 884.0,226.7 885.0,227.0 886.0,228.2 887.0,227.8 888.0,226.3 889.0,226.2 890.0,229.0 891.0,225.0 892.0,228.5 893.0,227.0 894.0,227.0 895.0,227.1 896.0,227.3 897.0,227.4 898.0,227.1 899.0,228.5 900.0,224.9 901.0,229.3 902.0,225.4 903.0,228.6 904.0,226.3 905.0,228.0 906.0,225.3 907.0,228.3 908.0,226.9 909.0,226.8 910.0,227.1 911.0,227.4 912.0,228.1 913.0,224.8 914.0,229.4 915.0,224.7 916.0,227.6 917.0,227.9 918.0,226.2 919.0,228.7 920.0,225.1 921.0,229.3 922.0,224.7 923.0,228.9 924.0,226.6 925.0,226.8 926.0,228.0 927.0,225.7 928.0,229.0 929.0,225.1 930.0,227.7 931.0,227.0 932.0,226.9 933.0,226.4 934.0,228.5 935.0,225.8 936.0,228.5 937.0,224.6 938.0,227.6 939.0,227.0 940.0,225.9 941.0,228.0 942.0,227.1 943.0,227.9 944.0,227.8 945.0,226.9 946.0,226.2 947.0,228.5 948.0,225.3 949.0,228.9 950.0,224.6 951.0,230.3 952.0,225.1 953.0,227.6 954.0,225.5 955.0,228.7 956.0,225.3 957.0,228.5 958.0,225.3 959.0,227.6 960.0,227.8 961.0,228.0 962.0,224.3 963.0,229.1 964.0,226.4 965.0,226.8 966.0,226.9 967.0,230.1 968.0,223.3 969.0,230.4 970.0,224.3 971.0,228.4 972.0,223.4 973.0,231.1 974.0,223.7 975.0,227.5 976.0,229.9 977.0,223.7 978.0,228.5 979.0,225.5 980.0,229.6 981.0,225.1 982.0,227.7 983.0,225.1 984.0,227.4 985.0,227.8 986.0,226.1 987.0,224.6 988.0,228.3 989.0,226.9 990.0,230.9 991.0,222.7 992.0,227.0 993.0,229.7 994.0,223.7 995.0,227.3 996.0,228.7 997.0,225.0 998.0,226.9 999.0,225.7 1000.0,228.2 1001.0,226.5 1002.0,224.4 1003.0,231.3 1004.0,222.5 1005.0,231.7 1006.0,223.4 1007.0,228.3 1008.0,227.4 1009.0,225.3 1010.0,228.4 1011.0,228.8 1012.0,223.9 1013.0,230.7 1014.0,223.0 1015.0,229.7 1016.0,227.2 1017.0,224.1 1018.0,230.3 1019.0,222.5 1020.0,229.6 1021.0,225.6 1022.0,229.0 1023.0,226.7 1024.0,225.3 1025.0,228.6 1026.0,226.4 1027.0,224.7 1028.0,230.1 1029.0,226.9 1030.0,228.1 1031.0,225.1 1032.0,227.9 1033.0,225.3 1034.0,227.6 1035.0,226.6 1036.0,228.3 1037.0,226.1 1038.0,226.1 1039.0,229.4 1040.0,226.4 1041.0,226.0 1042.0,227.8 1043.0,226.4 1044.0,224.9 1045.0,229.4 1046.0,226.4 1047.0,229.7 1048.0,224.9 1049.0,227.8 1050.0,226.7 1051.0,228.0 1052.0,227.4 1053.0,225.3 1054.0,228.9 1055.0,226.7 1056.0,224.1 1057.0,231.0 1058.0,223.3 1059.0,230.5 1060.0,224.9 1061.0,227.7 1062.0,226.9 1063.0,227.3 1064.0,227.9 1065.0,225.8 1066.0,226.6 1067.0,227.0 1068.0,226.0 1069.0,228.9 1070.0,224.4 1071.0,230.5 1072.0,224.5 1073.0,228.3" fill="none" stroke="#000" stroke-width="1.35"/><line x1="128.5" y1="202.5" x2="128.5" y2="251.7" stroke="#000" stroke-width="1.1"/><line x1="123.5" y1="206.4" x2="128.5" y2="206.4" stroke="#000" stroke-width="1.1"/><line x1="123.5" y1="216.3" x2="128.5" y2="216.3" stroke="#000" stroke-width="1.1"/><line x1="118.0" y1="227.3" x2="128.5" y2="227.3" stroke="#000" stroke-width="1.1"/><line x1="123.5" y1="237.4" x2="128.5" y2="237.4" stroke="#000" stroke-width="1.1"/><line x1="123.5" y1="248.4" x2="128.5" y2="248.4" stroke="#000" stroke-width="1.1"/><line x1="1079.5" y1="202.5" x2="1079.5" y2="251.7" stroke="#000" stroke-width="1.1"/><line x1="1079.5" y1="202.8" x2="1082.0" y2="202.8" stroke="#000" stroke-width="1.1"/><line x1="1079.5" y1="212.6" x2="1084.5" y2="212.6" stroke="#000" stroke-width="1.1"/><line x1="1079.5" y1="222.8" x2="1082.0" y2="222.8" stroke="#000" stroke-width="1.1"/><line x1="1079.5" y1="232.5" x2="1084.5" y2="232.5" stroke="#000" stroke-width="1.1"/><line x1="1079.5" y1="242.7" x2="1082.0" y2="242.7" stroke="#000" stroke-width="1.1"/><line x1="1079.5" y1="251.6" x2="1084.5" y2="251.6" stroke="#000" stroke-width="1.1"/><rect x="135.9" y="202.7" width="11.5" height="21.5" fill="#fff" stroke="#000" stroke-width="1"/><line x1="284" y1="258.2" x2="284" y2="307.4" stroke="#000" stroke-opacity="0.16" stroke-width="1" stroke-dasharray="4,3"/><line x1="454.5" y1="258.2" x2="454.5" y2="307.4" stroke="#000" stroke-opacity="0.16" stroke-width="1" stroke-dasharray="4,3"/><line x1="624.5" y1="258.2" x2="624.5" y2="307.4" stroke="#000" stroke-opacity="0.16" stroke-width="1" stroke-dasharray="4,3"/><line x1="795" y1="258.2" x2="795" y2="307.4" stroke="#000" stroke-opacity="0.16" stroke-width="1" stroke-dasharray="4,3"/><line x1="965.5" y1="258.2" x2="965.5" y2="307.4" stroke="#000" stroke-opacity="0.16" stroke-width="1" stroke-dasharray="4,3"/><polyline points="135,282.8 136,282.4 138,283.3 140,282.5 141,282.8 142,281.7 144,283.2 146,282.4 147,282.9 148,282.2 150,283.2 152,282.0 153,283.8 154,282.6 156,283.0 158,281.9 159,283.6 160,282.2 162,283.5 164,282.4 165,283.2 166,282.3 168,283.1 170,282.1 171,283.5 172,282.7 174,283.1 176,282.2 177,283.5 178,282.3 180,283.1 182,282.2 183,283.3 184,282.7 186,283.1 188,282.5 189,283.5 190,282.8 192,283.0 194,282.5 195,283.3 196,281.5 198,283.2 200,282.0 201,283.5 202,281.9 204,283.8 206,282.1 207,282.9 208,282.5 210,283.8 212,281.6 213,283.7 214,281.5 216,283.5 218,282.6 219,283.3 220,282.2 222,283.6 224,282.0 225,283.0 226,281.9 228,283.1 230,282.2 231,283.5 232,282.1 234,283.4 236,282.5 237,283.2 238,282.0 240,283.1 242,282.7 243,283.2 244,282.3 246,282.9 248,282.3 249,282.9 250,282.5 252,283.1 254,282.0 255,283.0 256,282.8 258,283.3 260,282.1 261,282.9 262,282.2 264,283.3 266,282.2 267,283.0 268,282.3 270,283.2 272,282.3 273,283.0 274,282.4 276,283.1 278,282.4 279,283.7 280,282.3 282,283.3 284,282.2 285,283.7 286,282.6 288,282.9 290,282.7 291,283.0 292,282.3 294,283.5 296,282.6 297,282.9 298,282.0 300,283.6 302,282.6 303,283.5 304,282.4 306,283.1 308,282.4 309,283.0 310,282.7 312,282.8 314,282.6 315,283.4 316,282.2 318,283.5 320,282.6 321,283.2 322,282.7 324,282.9 326,282.0 327,283.2 328,281.7 330,283.5 332,282.5 333,283.0 334,282.5 336,283.7 338,282.0 339,284.5 340,281.6 342,283.4 344,282.7 345,283.0 346,282.5 348,283.2 350,282.7 351,283.5 352,282.0 354,282.9 356,282.4 357,282.8 358,282.0 360,282.9 362,282.7 363,283.0 364,282.7 366,283.0 368,282.0 369,283.5 370,282.8 372,282.9 374,282.4 375,283.3 376,282.7 378,283.7 380,282.1 381,283.9 382,282.3 384,282.9 386,282.1 387,283.3 388,282.5 390,282.8 392,282.2 393,283.1 394,281.9 396,283.6 398,282.0 399,283.0 400,282.2 402,283.9 404,281.7 405,283.7 406,282.0 408,283.0 410,281.8 411,283.9 412,282.2 414,283.4 416,282.4 417,283.3 418,282.5 420,283.4 422,282.4 423,282.9 424,282.6 426,283.4 428,282.3 429,283.8 430,282.0 432,283.7 434,282.4 435,283.6 436,282.6 438,283.0 440,282.0 441,283.3 442,282.6 444,283.6 446,281.8 447,283.5 448,281.9 450,283.6 452,282.0 453,283.0 454,282.6 456,283.1 458,282.1 459,283.1 460,282.7 462,283.3 464,282.6 465,283.2 466,282.7 468,283.2 470,281.8 471,282.9 472,282.6 474,283.7 476,282.1 477,283.2 478,282.5 480,283.4 482,282.5 483,283.6 484,282.5 486,283.0 488,282.2 489,283.0" fill="none" stroke="#333" stroke-width="0.9"/><polyline points="489.0,293.0 490.0,293.7 491.0,272.5 492.0,305.9 493.0,259.7 494.0,299.2 495.0,277.1 496.0,273.8 497.0,298.8 498.0,259.9 499.0,302.7 500.0,259.5 501.0,293.5 502.0,282.6 503.0,285.0 504.0,271.7 505.0,278.7 506.0,295.0 507.0,263.0 508.0,301.4 509.0,282.8 510.0,282.9 511.0,268.5 512.0,306.5 513.0,273.6 514.0,278.4 515.0,285.7 516.0,294.5 517.0,273.6 518.0,291.9 519.0,287.0 520.0,281.0 521.0,306.7 522.0,270.8 523.0,287.5 524.0,283.0 525.0,278.4 526.0,298.3 527.0,258.8 528.0,306.8 529.0,258.9 530.0,280.1 531.0,301.1 532.0,270.3 533.0,291.7 534.0,275.5 535.0,286.9 536.0,276.0 537.0,298.8 538.0,280.7 539.0,279.8 540.0,286.4 541.0,282.6 542.0,288.7 543.0,279.1 544.0,281.4 545.0,283.6 546.0,284.4 547.0,280.2 548.0,282.3 549.0,292.0 550.0,277.1 551.0,291.3 552.0,271.3 553.0,296.3 554.0,273.9 555.0,285.9 556.0,278.8 557.0,282.2 558.0,282.1 559.0,284.4 560.0,281.2 561.0,294.4 562.0,275.0 563.0,288.1 564.0,279.8 565.0,280.3 566.0,282.3 567.0,285.8 568.0,273.2 569.0,294.4 570.0,278.2 571.0,276.3 572.0,293.8 573.0,277.5 574.0,288.9 575.0,281.6 576.0,288.9 577.0,274.4 578.0,287.3 579.0,283.6 580.0,281.1 581.0,279.0 582.0,290.0 583.0,281.0 584.0,281.8 585.0,285.7 586.0,283.7 587.0,274.2 588.0,288.9 589.0,276.9 590.0,286.2 591.0,277.6 592.0,282.9 593.0,285.0 594.0,286.2 595.0,275.4 596.0,290.2 597.0,277.8 598.0,287.3 599.0,283.8 600.0,279.5 601.0,288.7 602.0,276.1 603.0,287.0 604.0,282.3 605.0,284.1 606.0,278.5 607.0,282.0 608.0,285.9 609.0,280.9 610.0,285.3 611.0,280.9 612.0,281.1 613.0,287.5 614.0,280.6 615.0,283.9 616.0,287.0 617.0,279.1 618.0,287.9 619.0,278.7 620.0,279.5 621.0,284.9 622.0,278.0 623.0,287.5 624.0,282.3 625.0,278.9 626.0,287.3 627.0,278.7 628.0,286.8 629.0,281.0 630.0,281.8 631.0,285.3 632.0,280.8 633.0,285.5 634.0,284.0 635.0,280.7 636.0,286.7 637.0,279.4 638.0,285.7 639.0,281.4 640.0,282.4 641.0,283.9 642.0,281.4 643.0,284.7 644.0,280.1 645.0,283.6 646.0,284.1 647.0,282.1 648.0,283.9 649.0,282.8 650.0,283.9 651.0,282.5 652.0,284.0 653.0,280.9 654.0,285.0 655.0,280.5 656.0,282.9 657.0,283.2 658.0,283.2 659.0,282.4 660.0,285.2 661.0,281.5 662.0,283.9 663.0,282.4 664.0,281.4 665.0,284.3 666.0,281.8 667.0,285.2 668.0,280.0 669.0,284.7 670.0,281.1 671.0,284.0 672.0,280.3 673.0,285.2 674.0,281.4 675.0,283.7 676.0,285.3 677.0,280.1 678.0,285.2 679.0,281.4 680.0,284.7 681.0,283.9 682.0,283.1 683.0,282.6 684.0,281.6 685.0,284.6 686.0,280.0 687.0,284.3 688.0,281.7 689.0,282.2 690.0,283.8 691.0,281.7 692.0,282.8 693.0,283.6 694.0,281.2 695.0,285.6 696.0,281.4 697.0,282.8 698.0,283.8 699.0,281.1 700.0,283.4 701.0,284.0 702.0,279.7 703.0,285.9 704.0,283.0 705.0,279.7 706.0,286.0 707.0,279.6 708.0,285.3 709.0,280.2 710.0,283.2 711.0,282.6 712.0,280.5 713.0,284.9 714.0,282.6 715.0,281.3 716.0,284.5 717.0,282.5 718.0,285.0 719.0,280.7 720.0,285.2 721.0,281.9 722.0,283.0 723.0,282.4 724.0,283.7 725.0,283.1 726.0,280.3 727.0,284.6 728.0,282.4 729.0,283.1 730.0,283.2 731.0,284.9 732.0,282.3 733.0,280.7 734.0,286.7 735.0,278.8 736.0,284.8 737.0,284.2 738.0,280.4 739.0,282.0 740.0,285.4 741.0,281.4 742.0,284.3 743.0,279.5 744.0,286.9 745.0,278.9 746.0,286.8 747.0,278.5 748.0,284.5 749.0,279.3 750.0,284.3 751.0,284.3 752.0,281.4 753.0,282.8 754.0,285.7 755.0,280.4 756.0,285.6 757.0,281.5 758.0,283.1 759.0,283.2 760.0,283.1 761.0,284.4 762.0,282.3 763.0,284.5 764.0,279.4 765.0,282.2 766.0,285.1 767.0,281.2 768.0,284.5 769.0,279.8 770.0,285.4 771.0,279.3 772.0,285.5 773.0,281.1 774.0,283.3 775.0,283.5 776.0,281.1 777.0,284.2 778.0,283.3 779.0,284.7 780.0,281.6 781.0,284.9 782.0,282.3 783.0,285.8 784.0,284.0 785.0,279.6 786.0,286.8 787.0,280.6 788.0,286.7 789.0,278.2 790.0,287.4 791.0,278.2 792.0,287.4 793.0,279.0 794.0,285.7 795.0,281.9 796.0,283.3 797.0,283.4 798.0,281.4 799.0,280.4 800.0,286.2 801.0,280.3 802.0,283.2 803.0,282.1 804.0,285.6 805.0,279.1 806.0,283.7 807.0,284.2 808.0,283.7 809.0,279.3 810.0,284.2 811.0,280.8 812.0,284.9 813.0,282.3 814.0,285.0 815.0,280.8 816.0,283.6 817.0,281.6 818.0,285.5 819.0,279.7 820.0,283.7 821.0,282.6 822.0,282.7 823.0,283.6 824.0,281.2 825.0,286.6 826.0,282.4 827.0,280.3 828.0,285.5 829.0,279.5 830.0,284.7 831.0,280.2 832.0,284.3 833.0,282.6 834.0,282.8 835.0,281.0 836.0,281.8 837.0,281.8 838.0,285.7 839.0,280.1 840.0,284.6 841.0,283.8 842.0,280.0 843.0,285.7 844.0,280.1 845.0,284.8 846.0,279.6 847.0,284.9 848.0,281.7 849.0,283.3 850.0,280.9 851.0,284.1 852.0,283.1 853.0,282.0 854.0,284.5 855.0,282.2 856.0,283.1 857.0,282.3 858.0,283.3 859.0,281.5 860.0,284.6 861.0,281.8 862.0,284.5 863.0,283.9 864.0,282.1 865.0,283.7 866.0,282.4 867.0,283.8 868.0,283.4 869.0,281.7 870.0,282.4 871.0,282.1 872.0,284.5 873.0,281.8 874.0,283.7 875.0,280.6 876.0,284.1 877.0,280.8 878.0,283.3 879.0,282.4 880.0,282.4 881.0,284.8 882.0,280.5 883.0,284.4 884.0,281.5 885.0,283.6 886.0,283.1 887.0,281.6 888.0,282.4 889.0,283.2 890.0,282.9 891.0,281.6 892.0,284.8 893.0,280.6 894.0,283.9 895.0,282.1 896.0,284.9 897.0,281.8 898.0,283.5 899.0,281.6 900.0,282.8 901.0,282.6 902.0,284.4 903.0,282.5 904.0,282.8 905.0,282.3 906.0,281.7 907.0,283.6 908.0,282.9 909.0,283.0 910.0,282.9 911.0,282.0 912.0,284.0 913.0,281.7 914.0,284.3 915.0,282.0 916.0,283.9 917.0,282.3 918.0,282.5 919.0,284.4 920.0,280.3 921.0,285.3 922.0,280.7 923.0,283.7 924.0,282.9 925.0,281.9 926.0,282.6 927.0,282.3 928.0,282.1 929.0,283.6 930.0,282.6 931.0,282.7 932.0,281.3 933.0,284.4 934.0,282.7 935.0,281.1 936.0,283.5 937.0,283.7 938.0,281.5 939.0,285.0 940.0,280.7 941.0,282.5 942.0,283.7 943.0,281.9 944.0,283.7 945.0,281.2 946.0,283.5 947.0,285.2 948.0,279.6 949.0,286.1 950.0,279.5 951.0,286.1 952.0,281.4 953.0,284.2 954.0,281.8 955.0,282.4 956.0,283.6 957.0,280.1 958.0,281.7 959.0,282.5 960.0,285.6 961.0,281.4 962.0,286.0 963.0,280.9 964.0,281.5 965.0,283.2 966.0,283.3 967.0,280.9 968.0,283.0 969.0,281.5 970.0,282.8 971.0,280.2 972.0,285.9 973.0,279.4 974.0,286.8 975.0,282.4 976.0,281.8 977.0,285.6 978.0,282.2 979.0,282.8 980.0,282.6 981.0,285.1 982.0,281.8 983.0,282.8 984.0,282.3 985.0,283.3 986.0,284.1 987.0,282.6 988.0,281.6 989.0,283.8 990.0,282.5 991.0,282.0 992.0,283.5 993.0,280.7 994.0,283.2 995.0,283.6 996.0,282.4 997.0,282.4 998.0,287.1 999.0,278.5 1000.0,286.9 1001.0,280.7 1002.0,282.7 1003.0,284.8 1004.0,282.9 1005.0,282.1 1006.0,284.3 1007.0,286.7 1008.0,278.2 1009.0,286.8 1010.0,281.8 1011.0,282.6 1012.0,281.9 1013.0,282.9 1014.0,282.6 1015.0,282.5 1016.0,283.3 1017.0,285.3 1018.0,280.7 1019.0,283.4 1020.0,284.1 1021.0,282.5 1022.0,280.8 1023.0,283.8 1024.0,280.6 1025.0,285.2 1026.0,282.7 1027.0,281.8 1028.0,286.0 1029.0,279.1 1030.0,284.8 1031.0,281.9 1032.0,283.4 1033.0,285.4 1034.0,278.4 1035.0,287.2 1036.0,280.0 1037.0,286.1 1038.0,278.5 1039.0,284.2 1040.0,285.7 1041.0,281.7 1042.0,284.7 1043.0,281.1 1044.0,285.6 1045.0,280.7 1046.0,282.2 1047.0,283.8 1048.0,281.7 1049.0,282.0 1050.0,283.0 1051.0,281.8 1052.0,284.6 1053.0,283.0 1054.0,283.8 1055.0,283.5 1056.0,280.3 1057.0,285.9 1058.0,281.9 1059.0,283.4 1060.0,281.2 1061.0,280.0 1062.0,286.2 1063.0,279.3 1064.0,286.4 1065.0,279.2 1066.0,286.4 1067.0,279.9 1068.0,282.6 1069.0,283.3 1070.0,282.3 1071.0,284.3 1072.0,282.6 1073.0,284.2" fill="none" stroke="#000" stroke-width="1.35"/><line x1="128.5" y1="258.2" x2="128.5" y2="307.4" stroke="#000" stroke-width="1.1"/><line x1="123.5" y1="262.09999999999997" x2="128.5" y2="262.09999999999997" stroke="#000" stroke-width="1.1"/><line x1="123.5" y1="272.0" x2="128.5" y2="272.0" stroke="#000" stroke-width="1.1"/><line x1="118.0" y1="283.0" x2="128.5" y2="283.0" stroke="#000" stroke-width="1.1"/><line x1="123.5" y1="293.09999999999997" x2="128.5" y2="293.09999999999997" stroke="#000" stroke-width="1.1"/><line x1="123.5" y1="304.09999999999997" x2="128.5" y2="304.09999999999997" stroke="#000" stroke-width="1.1"/><line x1="1079.5" y1="258.2" x2="1079.5" y2="307.4" stroke="#000" stroke-width="1.1"/><line x1="1079.5" y1="258.5" x2="1082.0" y2="258.5" stroke="#000" stroke-width="1.1"/><line x1="1079.5" y1="268.3" x2="1084.5" y2="268.3" stroke="#000" stroke-width="1.1"/><line x1="1079.5" y1="278.5" x2="1082.0" y2="278.5" stroke="#000" stroke-width="1.1"/><line x1="1079.5" y1="288.2" x2="1084.5" y2="288.2" stroke="#000" stroke-width="1.1"/><line x1="1079.5" y1="298.4" x2="1082.0" y2="298.4" stroke="#000" stroke-width="1.1"/><line x1="1079.5" y1="307.3" x2="1084.5" y2="307.3" stroke="#000" stroke-width="1.1"/><rect x="135.9" y="258.4" width="11.5" height="21.5" fill="#fff" stroke="#000" stroke-width="1"/><path d="M1073 146.5 H135.5 M135.5 146.5 V195.3 M135.5 195.3 H1073" fill="none" stroke="#000" stroke-width="1.2" stroke-dasharray="4,2.5"/><line x1="489.5" y1="146.5" x2="489.5" y2="227" stroke="#a01010" stroke-width="1.2"/><line x1="475.5" y1="228" x2="475.5" y2="308.5" stroke="#1010a0" stroke-width="1.2"/><text x="492" y="160" font-family="Liberation Sans" font-size="13" fill="#a01010">P&lt;A&gt;</text><text x="477" y="306" font-family="Liberation Sans" font-size="13" fill="#1010a0">P</text><path d="M489.5 146.5 L511 146.5 L511 191" fill="none" stroke="#000" stroke-width="1.2"/><line x1="135" y1="314.8" x2="1129" y2="314.8" stroke="#000" stroke-width="1.1"/><line x1="147.3" y1="314.8" x2="147.3" y2="320.8" stroke="#000" stroke-width="1.1"/><line x1="181.4" y1="314.8" x2="181.4" y2="320.8" stroke="#000" stroke-width="1.1"/><line x1="215.5" y1="314.8" x2="215.5" y2="320.8" stroke="#000" stroke-width="1.1"/><line x1="249.6" y1="314.8" x2="249.6" y2="320.8" stroke="#000" stroke-width="1.1"/><line x1="283.7" y1="314.8" x2="283.7" y2="325.4" stroke="#000" stroke-width="1.1"/><line x1="317.8" y1="314.8" x2="317.8" y2="320.8" stroke="#000" stroke-width="1.1"/><line x1="351.9" y1="314.8" x2="351.9" y2="320.8" stroke="#000" stroke-width="1.1"/><line x1="386.0" y1="314.8" x2="386.0" y2="320.8" stroke="#000" stroke-width="1.1"/><line x1="420.1" y1="314.8" x2="420.1" y2="320.8" stroke="#000" stroke-width="1.1"/><line x1="454.2" y1="314.8" x2="454.2" y2="325.4" stroke="#000" stroke-width="1.1"/><line x1="488.3" y1="314.8" x2="488.3" y2="320.8" stroke="#000" stroke-width="1.1"/><line x1="522.4" y1="314.8" x2="522.4" y2="320.8" stroke="#000" stroke-width="1.1"/><line x1="556.5" y1="314.8" x2="556.5" y2="320.8" stroke="#000" stroke-width="1.1"/><line x1="590.6" y1="314.8" x2="590.6" y2="320.8" stroke="#000" stroke-width="1.1"/><line x1="624.7" y1="314.8" x2="624.7" y2="325.4" stroke="#000" stroke-width="1.1"/><line x1="658.8" y1="314.8" x2="658.8" y2="320.8" stroke="#000" stroke-width="1.1"/><line x1="692.9" y1="314.8" x2="692.9" y2="320.8" stroke="#000" stroke-width="1.1"/><line x1="727.0" y1="314.8" x2="727.0" y2="320.8" stroke="#000" stroke-width="1.1"/><line x1="761.1" y1="314.8" x2="761.1" y2="320.8" stroke="#000" stroke-width="1.1"/><line x1="795.2" y1="314.8" x2="795.2" y2="325.4" stroke="#000" stroke-width="1.1"/><line x1="829.3" y1="314.8" x2="829.3" y2="320.8" stroke="#000" stroke-width="1.1"/><line x1="863.4" y1="314.8" x2="863.4" y2="320.8" stroke="#000" stroke-width="1.1"/><line x1="897.5" y1="314.8" x2="897.5" y2="320.8" stroke="#000" stroke-width="1.1"/><line x1="931.6" y1="314.8" x2="931.6" y2="320.8" stroke="#000" stroke-width="1.1"/><line x1="965.7" y1="314.8" x2="965.7" y2="325.4" stroke="#000" stroke-width="1.1"/><line x1="999.8" y1="314.8" x2="999.8" y2="320.8" stroke="#000" stroke-width="1.1"/><line x1="1033.9" y1="314.8" x2="1033.9" y2="320.8" stroke="#000" stroke-width="1.1"/><line x1="1068.0" y1="314.8" x2="1068.0" y2="320.8" stroke="#000" stroke-width="1.1"/><line x1="1102.1" y1="314.8" x2="1102.1" y2="320.8" stroke="#000" stroke-width="1.1"/></svg>
<div class="t" style="left:106.6px;top:165.5px;font-size:13px;color:#222;font-weight:normal;letter-spacing:0.00px;">0</div>
<div class="t" style="left:1089.0px;top:150.5px;font-size:13px;color:#222;font-weight:normal;letter-spacing:0.40px;">40</div>
<div class="t" style="left:1089.0px;top:180.8px;font-size:13px;color:#222;font-weight:normal;letter-spacing:0.00px;">0</div>
<div class="t" style="left:9.399999999999999px;top:163.0px;width:40px;height:13px;font-size:13px;color:#31363b;letter-spacing:0.4px;transform:rotate(-90deg);text-align:center;transform-origin:20px 6.5px">counts</div>
<div class="t" style="left:136.6px;top:151.7px;font-size:12.5px;color:#000;font-weight:bold;letter-spacing:0.00px;">Z</div>
<div class="t" style="left:135.4px;top:167.3px;font-size:13px;color:#000;font-weight:normal;letter-spacing:0.27px;">amax: 466.3 counts</div>
<div class="t" style="left:135.4px;top:181.1px;font-size:13px;color:#000;font-weight:normal;letter-spacing:0.31px;">mean: -0.0 counts</div>
<div class="t" style="left:106.6px;top:221.5px;font-size:13px;color:#222;font-weight:normal;letter-spacing:0.00px;">0</div>
<div class="t" style="left:1089.0px;top:206.5px;font-size:13px;color:#222;font-weight:normal;letter-spacing:0.40px;">40</div>
<div class="t" style="left:1089.0px;top:236.8px;font-size:13px;color:#222;font-weight:normal;letter-spacing:0.00px;">0</div>
<div class="t" style="left:9.399999999999999px;top:219.0px;width:40px;height:13px;font-size:13px;color:#31363b;letter-spacing:0.4px;transform:rotate(-90deg);text-align:center;transform-origin:20px 6.5px">counts</div>
<div class="t" style="left:136.6px;top:207.7px;font-size:12.5px;color:#000;font-weight:bold;letter-spacing:0.00px;">N</div>
<div class="t" style="left:135.4px;top:223.3px;font-size:13px;color:#000;font-weight:normal;letter-spacing:0.27px;">amax: 303.4 counts</div>
<div class="t" style="left:135.4px;top:237.1px;font-size:13px;color:#000;font-weight:normal;letter-spacing:0.28px;">mean: 0.0 counts</div>
<div class="t" style="left:106.6px;top:277.2px;font-size:13px;color:#222;font-weight:normal;letter-spacing:0.00px;">0</div>
<div class="t" style="left:1089.0px;top:262.2px;font-size:13px;color:#222;font-weight:normal;letter-spacing:0.40px;">40</div>
<div class="t" style="left:1089.0px;top:292.5px;font-size:13px;color:#222;font-weight:normal;letter-spacing:0.00px;">0</div>
<div class="t" style="left:9.399999999999999px;top:274.7px;width:40px;height:13px;font-size:13px;color:#31363b;letter-spacing:0.4px;transform:rotate(-90deg);text-align:center;transform-origin:20px 6.5px">counts</div>
<div class="t" style="left:137.2px;top:263.4px;font-size:12.5px;color:#000;font-weight:bold;letter-spacing:0.00px;">E</div>
<div class="t" style="left:135.4px;top:279.0px;font-size:13px;color:#000;font-weight:normal;letter-spacing:0.27px;">amax: 317.2 counts</div>
<div class="t" style="left:135.4px;top:292.8px;font-size:13px;color:#000;font-weight:normal;letter-spacing:0.31px;">mean: -0.0 counts</div>
<div class="t" style="left:256.9px;top:333.1px;font-size:13px;color:#31363b;font-weight:normal;letter-spacing:0.48px;">11:01:10</div>
<div class="t" style="left:427.4px;top:333.1px;font-size:13px;color:#31363b;font-weight:normal;letter-spacing:0.48px;">11:01:15</div>
<div class="t" style="left:597.9px;top:333.1px;font-size:13px;color:#31363b;font-weight:normal;letter-spacing:0.48px;">11:01:20</div>
<div class="t" style="left:768.4px;top:333.1px;font-size:13px;color:#31363b;font-weight:normal;letter-spacing:0.48px;">11:01:25</div>
<div class="t" style="left:938.9px;top:333.1px;font-size:13px;color:#31363b;font-weight:normal;letter-spacing:0.48px;">11:01:30</div>
<div class="t" style="left:248.8px;top:355.7px;font-size:13px;color:#31363b;font-weight:normal;letter-spacing:0.39px;">2020-01-16</div>
<div style="position:absolute;left:19.5px;top:328.3px;width:29.200000000000003px;height:29.19999999999999px;background:linear-gradient(#f2f3f4,#e6e7e8);border:1px solid #b0b2b3;border-radius:3px;box-sizing:border-box;box-shadow:0 1px 1.5px rgba(0,0,0,0.2)"></div>
<div style="position:absolute;left:57.3px;top:328.3px;width:29.200000000000003px;height:29.19999999999999px;background:linear-gradient(#f2f3f4,#e6e7e8);border:1px solid #b0b2b3;border-radius:3px;box-sizing:border-box;box-shadow:0 1px 1.5px rgba(0,0,0,0.2)"></div>
<div style="position:absolute;left:95.4px;top:328.3px;width:29.099999999999994px;height:29.19999999999999px;background:linear-gradient(#f2f3f4,#e6e7e8);border:1px solid #b0b2b3;border-radius:3px;box-sizing:border-box;box-shadow:0 1px 1.5px rgba(0,0,0,0.2)"></div>
<svg style="position:absolute;left:0;top:0" width="1142" height="746"><defs><linearGradient id="rb" x1="0" y1="0" x2="0" y2="1"><stop offset="0" stop-color="#e06060"/><stop offset="0.5" stop-color="#b00000"/><stop offset="1" stop-color="#d02020"/></linearGradient><linearGradient id="tagg" x1="0" y1="0" x2="1" y2="1"><stop offset="0" stop-color="#000"/><stop offset="0.6" stop-color="#202020"/><stop offset="1" stop-color="#000"/></linearGradient></defs><path d="M22.2 335.6 L27.2 351.5 L45.8 334.4 L27.6 345.2 Z" fill="#22c800" stroke="#138a00" stroke-width="0.8" stroke-linejoin="round"/><circle cx="71.8" cy="343" r="11.6" fill="#8a0000"/><circle cx="71.8" cy="343" r="10.4" fill="url(#rb)"/><path d="M67 338 L76.6 348 M76.6 338 L67 348" stroke="#fff" stroke-width="3.6" stroke-linecap="round"/><path d="M100 335.2 L113.5 335.2 L121.3 343 L113.5 350.8 L100 350.8 Z" fill="url(#tagg)"/><path d="M103.5 339.5 L110.5 346.5 M110.5 339.5 L103.5 346.5" stroke="#fff" stroke-width="2.4" stroke-linecap="round"/></svg>
<div style="position:absolute;left:112px;top:389px;width:17px;height:36px;background:linear-gradient(90deg,#f4f8f4,#6aaf6a 50%,#007d00)"></div>
<div class="t" style="left:18.4px;top:391.5px;font-size:13px;color:#31363b;font-weight:bold;letter-spacing:0.09px;">PB09</div>
<div class="t" style="left:70.8px;top:391.5px;font-size:13px;color:#31363b;font-weight:normal;letter-spacing:-1.56px;">CX</div>
<div class="t" style="left:87.1px;top:412.6px;font-size:13px;color:#31363b;font-weight:normal;letter-spacing:0.44px;">1.3°</div>
<div style="position:absolute;left:135px;top:427px;width:974px;height:36px;background:#eff0f1"></div>
<div style="position:absolute;left:112px;top:427px;width:17px;height:36px;background:linear-gradient(90deg,#f4f8f4,#6aaf6a 50%,#007d00)"></div>
<div class="t" style="left:18.4px;top:429.5px;font-size:13px;color:#31363b;font-weight:bold;letter-spacing:0.09px;">PB06</div>
<div class="t" style="left:70.8px;top:429.5px;font-size:13px;color:#31363b;font-weight:normal;letter-spacing:-1.56px;">CX</div>
<div class="t" style="left:87.1px;top:450.6px;font-size:13px;color:#31363b;font-weight:normal;letter-spacing:0.44px;">1.4°</div>
<div style="position:absolute;left:112px;top:465px;width:17px;height:36px;background:linear-gradient(90deg,#f4f8f4,#6aaf6a 50%,#007d00)"></div>
<div class="t" style="left:18.4px;top:467.5px;font-size:13px;color:#31363b;font-weight:bold;letter-spacing:0.09px;">PB03</div>
<div class="t" style="left:70.8px;top:467.5px;font-size:13px;color:#31363b;font-weight:normal;letter-spacing:-1.56px;">CX</div>
<div class="t" style="left:87.1px;top:488.6px;font-size:13px;color:#31363b;font-weight:normal;letter-spacing:0.44px;">1.6°</div>
<div style="position:absolute;left:135px;top:503px;width:974px;height:36px;background:#eff0f1"></div>
<div style="position:absolute;left:112px;top:503px;width:17px;height:36px;background:linear-gradient(90deg,#f4f8f4,#6aaf6a 50%,#007d00)"></div>
<div class="t" style="left:18.4px;top:505.5px;font-size:13px;color:#31363b;font-weight:bold;letter-spacing:0.09px;">PB19</div>
<div class="t" style="left:70.8px;top:505.5px;font-size:13px;color:#31363b;font-weight:normal;letter-spacing:-1.56px;">CX</div>
<div class="t" style="left:87.1px;top:526.6px;font-size:13px;color:#31363b;font-weight:normal;letter-spacing:0.44px;">1.8°</div>
<div style="position:absolute;left:135px;top:541px;width:974px;height:36px;background:#3daee9"></div>
<div style="position:absolute;left:448px;top:541px;width:105px;height:36px;background:#cdcdfb"></div>
<div style="position:absolute;left:112px;top:541px;width:17px;height:36px;background:linear-gradient(90deg,#f4f8f4,#6aaf6a 50%,#007d00)"></div>
<div class="t" style="left:18.4px;top:543.5px;font-size:13px;color:#31363b;font-weight:bold;letter-spacing:0.09px;">PB07</div>
<div class="t" style="left:70.8px;top:543.5px;font-size:13px;color:#31363b;font-weight:normal;letter-spacing:-1.56px;">CX</div>
<div class="t" style="left:87.1px;top:564.6px;font-size:13px;color:#31363b;font-weight:normal;letter-spacing:0.44px;">1.8°</div>
<div style="position:absolute;left:135px;top:579px;width:974px;height:36px;background:#eff0f1"></div>
<div style="position:absolute;left:112px;top:579px;width:17px;height:36px;background:linear-gradient(90deg,#f4f8f4,#6aaf6a 50%,#007d00)"></div>
<div class="t" style="left:18.4px;top:581.5px;font-size:13px;color:#31363b;font-weight:bold;letter-spacing:0.09px;">PB01</div>
<div class="t" style="left:70.8px;top:581.5px;font-size:13px;color:#31363b;font-weight:normal;letter-spacing:-1.56px;">CX</div>
<div class="t" style="left:87.1px;top:602.6px;font-size:13px;color:#31363b;font-weight:normal;letter-spacing:0.44px;">2.0°</div>
<div style="position:absolute;left:112px;top:617px;width:17px;height:14px;background:linear-gradient(90deg,#f4f8f4,#6aaf6a 50%,#007d00)"></div>
<div class="t" style="left:18.4px;top:619.5px;font-size:13px;color:#31363b;font-weight:bold;letter-spacing:0.09px;">PB05</div>
<div class="t" style="left:70.8px;top:619.5px;font-size:13px;color:#31363b;font-weight:normal;letter-spacing:-1.56px;">CX</div>
<svg style="position:absolute;left:0;top:0" width="1142" height="746"><defs><clipPath id="bclip"><rect x="135" y="388" width="975" height="243"/></clipPath></defs><g clip-path="url(#bclip)"><line x1="210.3" y1="389" x2="210.3" y2="631" stroke="#c8c8c8" stroke-width="1" stroke-dasharray="4,3"/><line x1="319.4" y1="389" x2="319.4" y2="631" stroke="#c8c8c8" stroke-width="1" stroke-dasharray="4,3"/><line x1="427.3" y1="389" x2="427.3" y2="631" stroke="#c8c8c8" stroke-width="1" stroke-dasharray="4,3"/><line x1="536" y1="389" x2="536" y2="631" stroke="#c8c8c8" stroke-width="1" stroke-dasharray="4,3"/><line x1="644.8" y1="389" x2="644.8" y2="631" stroke="#c8c8c8" stroke-width="1" stroke-dasharray="4,3"/><line x1="753.5" y1="389" x2="753.5" y2="631" stroke="#c8c8c8" stroke-width="1" stroke-dasharray="4,3"/><line x1="862" y1="389" x2="862" y2="631" stroke="#c8c8c8" stroke-width="1" stroke-dasharray="4,3"/><line x1="971.6" y1="389" x2="971.6" y2="631" stroke="#c8c8c8" stroke-width="1" stroke-dasharray="4,3"/><line x1="1079.5" y1="389" x2="1079.5" y2="631" stroke="#c8c8c8" stroke-width="1" stroke-dasharray="4,3"/><path d="M135,415.6 L136,415.3 L137,415.7 L138,415.4 L139,415.6 L140,415.2 L141,415.6 L142,415.4 L143,415.8 L144,415.2 L145,415.7 L146,415.3 L147,415.8 L148,415.3 L149,415.6 L150,415.2 L151,415.8 L152,415.3 L153,415.8 L154,415.3 L155,415.8 L156,415.4 L157,415.7 L158,415.3 L159,415.7 L160,415.3 L161,415.6 L162,415.2 L163,415.8 L164,415.4 L165,415.7 L166,415.3 L167,415.6 L168,415.2 L169,415.7 L170,415.4 L171,415.8 L172,415.4 L173,415.8 L174,415.4 L175,415.6 L176,415.4 L177,415.7 L178,415.3 L179,415.8 L180,415.2 L181,415.7 L182,415.4 L183,415.6 L184,415.2 L185,415.7 L186,415.2 L187,415.6 L188,415.4 L189,415.8 L190,415.3 L191,415.7 L192,415.3 L193,415.6 L194,415.4 L195,415.6 L196,415.2 L197,415.7 L198,415.4 L199,415.8 L200,415.4 L201,415.6 L202,415.3 L203,415.8 L204,415.4 L205,415.8 L206,415.4 L207,415.6 L208,415.4 L209,415.7 L210,415.2 L211,415.7 L212,415.2 L213,415.6 L214,415.3 L215,415.7 L216,415.2 L217,415.8 L218,415.3 L219,415.7 L220,415.3 L221,415.8 L222,415.4 L223,415.6 L224,415.3 L225,415.7 L226,415.2 L227,415.8 L228,415.3 L229,415.8 L230,415.2 L231,415.8 L232,415.2 L233,415.6 L234,415.2 L235,415.6 L236,415.3 L237,415.8 L238,415.2 L239,415.8 L240,415.4 L241,415.7 L242,415.4 L243,415.8 L244,415.4 L245,415.7 L246,415.3 L247,415.6 L248,415.2 L249,415.8 L250,415.4 L251,415.7 L252,415.4 L253,415.7 L254,415.4 L255,415.6 L256,415.4 L257,415.7 L258,415.2 L259,415.7 L260,415.2 L261,415.7 L262,415.4 L263,415.7 L264,415.3 L265,415.8 L266,415.4 L267,415.6 L268,415.3 L269,415.8 L270,415.2 L271,415.8 L272,415.4 L273,415.8 L274,415.2 L275,415.6 L276,415.3 L277,415.6 L278,415.2 L279,415.8 L280,415.2 L281,415.8 L282,415.3 L283,415.8 L284,415.3 L285,415.6 L286,415.3 L287,415.7 L288,415.3 L289,415.7 L290,415.3 L291,415.7 L292,415.2 L293,415.7 L294,415.2 L295,415.7 L296,415.2 L297,415.7 L298,415.3 L299,415.8 L300,415.3 L301,415.7 L302,415.2 L303,415.6 L304,415.3 L305,415.7 L306,415.4 L307,415.6 L308,415.2 L309,415.8 L310,415.2 L311,415.8 L312,415.2 L313,415.7 L314,415.2 L315,415.7 L316,415.2 L317,415.7 L318,415.4 L319,415.8 L320,415.2 L321,415.8 L322,415.3 L323,415.8 L324,415.3 L325,415.7 L326,415.4 L327,415.7 L328,415.2 L329,415.8 L330,415.2 L331,415.7 L332,415.2 L333,415.6 L334,415.2 L335,415.7 L336,415.4 L337,415.8 L338,415.3 L339,415.7 L340,415.2 L341,415.6 L342,415.3 L343,415.7 L344,415.3 L345,415.7 L346,415.4 L347,415.7 L348,415.2 L349,415.6 L350,415.4 L351,415.6 L352,415.3 L353,415.8 L354,415.4 L355,415.8 L356,415.3 L357,415.6 L358,415.3 L359,415.6 L360,415.2 L361,415.7 L362,415.3 L363,415.7 L364,415.2 L365,415.8 L366,415.3 L367,415.7 L368,415.2 L369,415.8 L370,415.4 L371,415.6 L372,415.3 L373,415.7 L374,415.4 L375,415.6 L376,415.4 L377,415.7 L378,415.2 L379,415.7 L380,415.4 L381,415.6 L382,415.3 L383,415.8 L384,415.2 L385,415.7 L386,415.2 L387,415.8 L388,415.3 L389,415.8 L390,415.3 L391,415.6 L392,415.3 L393,415.6 L394,415.2 L395,415.8 L396,415.2 L397,415.7 L398,415.4 L399,415.8 L400,415.2 L401,415.8 L402,415.3 L403,415.8 L404,415.3 L405,415.6 L406,415.3 L407,415.8 L408,415.3 L409,415.8 L410,415.3 L411,415.7 L412,415.2 L413,415.6 L414,415.3 L415,415.6 L416,415.2 L417,415.7 L418,415.3 L419,415.6 L420,415.3 L421,415.7 L422,415.4 L423,415.6 L424,415.3 L425,415.7 L426,415.3 L427,415.8 L428,415.2 L429,415.8 L430,415.2 L431,415.7 L432,415.3 L433,415.7 L434,415.3 L435,415.6 L436,415.2 L437,415.7 L438,415.4 L439,415.7 L440,415.2 L441,415.7 L442,415.3 L443,415.8 L444,415.4 L445,415.6 L446,415.3 L447,415.7 L448,415.2 L449,415.7 L450,415.2 L451,415.6 L452,415.4 L453,415.7 L454,415.4 L455,415.6 L456,415.4 L457,415.7 L458,415.3 L459,415.7 L460,415.2 L461,415.7 L462,415.4 L463,415.7 L464,415.4 L465,415.7 L466,415.3 L467,416.3 L468,414.8 L469,417.8 L470,413.0 L471,418.2 L472,412.5 L473,417.0 L474,413.5 L475,417.0 L476,414.5 L477,417.5 L478,413.8 L479,417.4 L480,413.9 L481,417.1 L482,414.9 L483,415.9 L484,414.9 L485,416.3 L486,414.5 L487,416.2 L488,414.7 L489,416.5 L490,415.2 L491,416.3 L492,415.2 L493,415.9 L494,414.7 L495,416.2 L496,415.0 L497,415.9 L498,414.7 L499,415.9 L500,415.3 L501,415.9 L502,415.3 L503,416.2 L504,415.2 L505,416.2 L506,415.2 L507,415.8 L508,415.0 L509,415.8 L510,415.1 L511,415.7 L512,415.1 L513,415.7 L514,415.2 L515,416.1 L516,415.2 L517,415.8 L518,415.0 L519,416.1 L520,415.2 L521,415.8 L522,415.0 L523,416.0 L524,415.1 L525,415.7 L526,415.3 L527,416.0 L528,415.0 L529,416.0 L530,415.0 L531,415.8 L532,415.3 L533,416.0 L534,415.1 L535,415.9 L536,415.1 L537,415.8 L538,415.2 L539,415.9 L540,415.2 L541,415.9 L542,415.0 L543,416.0 L544,415.2 L545,415.8 L546,415.0 L547,415.8 L548,415.1 L549,415.7 L550,415.2 L551,415.8 L552,415.1 L553,416.0 L554,415.3 L555,415.9 L556,415.0 L557,415.8 L558,414.6 L559,416.1 L560,414.6 L561,415.9 L562,414.9 L563,416.0 L564,414.8 L565,416.2 L566,414.9 L567,416.0 L568,414.9 L569,416.0 L570,414.7 L571,416.0 L572,415.0 L573,415.9 L574,415.1 L575,416.3 L576,415.1 L577,416.3 L578,414.9 L579,416.3 L580,415.2 L581,416.3 L582,414.8 L583,416.1 L584,414.9 L585,416.2 L586,415.0 L587,416.1 L588,415.2 L589,415.7 L590,414.9 L591,416.0 L592,414.8 L593,415.9 L594,414.8 L595,416.3 L596,414.8 L597,416.3 L598,415.2 L599,415.8 L600,415.2 L601,415.9 L602,415.2 L603,415.8 L604,415.3 L605,416.2 L606,415.1 L607,416.0 L608,415.1 L609,416.1 L610,414.9 L611,415.9 L612,415.0 L613,415.7 L614,415.2 L615,415.8 L616,415.2 L617,415.8 L618,415.0 L619,415.8 L620,415.2 L621,416.1 L622,415.3 L623,415.7 L624,415.3 L625,416.1 L626,415.0 L627,416.0 L628,414.9 L629,415.8 L630,414.9 L631,415.8 L632,415.1 L633,416.0 L634,415.0 L635,415.8 L636,415.1 L637,415.7 L638,415.2 L639,416.1 L640,414.9 L641,415.9 L642,415.0 L643,416.1 L644,415.2 L645,416.1 L646,415.1 L647,415.7 L648,415.1 L649,415.9 L650,415.0 L651,416.0 L652,415.3 L653,415.9 L654,414.9 L655,415.9 L656,414.9 L657,415.9 L658,415.0 L659,415.7 L660,415.0 L661,415.8 L662,415.0 L663,415.8 L664,415.1 L665,416.0 L666,415.1 L667,415.9 L668,414.9 L669,415.7 L670,415.3 L671,415.9 L672,415.0 L673,415.9 L674,415.2 L675,415.7 L676,415.2 L677,415.8 L678,415.2 L679,415.9 L680,415.3 L681,416.0 L682,415.2 L683,415.7 L684,415.2 L685,416.0 L686,415.3 L687,415.7 L688,415.0 L689,415.8 L690,415.0 L691,415.6 L692,415.0 L693,415.7 L694,415.3 L695,415.9 L696,415.0 L697,416.0 L698,415.1 L699,416.0 L700,415.0 L701,415.8 L702,415.3 L703,416.0 L704,415.2 L705,415.7 L706,415.2 L707,415.6 L708,415.4 L709,415.7 L710,415.2 L711,415.9 L712,415.0 L713,415.9 L714,415.0 L715,415.9 L716,415.1 L717,415.8 L718,415.3 L719,415.6 L720,415.1 L721,415.7 L722,415.1 L723,415.8 L724,415.4 L725,415.8 L726,415.2 L727,415.6 L728,415.3 L729,415.7 L730,415.3 L731,415.9 L732,415.3 L733,415.8 L734,415.2 L735,415.9 L736,415.3 L737,415.6 L738,415.3 L739,415.7 L740,415.3 L741,415.6 L742,415.3 L743,415.7 L744,415.2 L745,415.8 L746,415.3 L747,415.7 L748,415.4 L749,415.7 L750,415.3 L751,415.8 L752,415.1 L753,415.9 L754,415.3 L755,415.6 L756,415.4 L757,415.8 L758,415.3 L759,415.8 L760,415.4 L761,415.7 L762,415.2 L763,415.8 L764,415.2 L765,415.9 L766,415.4 L767,415.7 L768,415.2 L769,415.8 L770,415.1 L771,415.9 L772,415.2 L773,415.9 L774,415.2 L775,415.7 L776,415.2 L777,415.7 L778,415.3 L779,415.7 L780,415.4 L781,415.9 L782,415.2 L783,415.8 L784,415.3 L785,415.7 L786,415.3 L787,415.8 L788,415.1 L789,415.9 L790,415.1 L791,415.7 L792,415.2 L793,415.6 L794,415.2 L795,415.6 L796,415.2 L797,415.8 L798,415.3 L799,415.7 L800,415.2 L801,415.8 L802,415.3 L803,415.6 L804,415.3 L805,415.9 L806,415.1 L807,415.7 L808,415.1 L809,415.9 L810,415.3 L811,415.7 L812,415.2 L813,415.7 L814,415.1 L815,415.7 L816,415.2 L817,415.8 L818,415.3 L819,415.9 L820,415.3 L821,415.6 L822,415.4 L823,415.7 L824,415.2 L825,415.7 L826,415.1 L827,415.7 L828,415.1 L829,415.6 L830,415.3 L831,415.6 L832,415.3 L833,415.7 L834,415.3 L835,415.9 L836,415.2 L837,415.8 L838,415.3 L839,415.8 L840,415.3 L841,415.8 L842,415.1 L843,415.8 L844,415.3 L845,415.7 L846,415.1 L847,415.8 L848,415.2 L849,415.7 L850,415.3 L851,415.9 L852,415.3 L853,415.8 L854,415.2 L855,415.7 L856,415.3 L857,415.6 L858,415.2 L859,415.8 L860,415.4 L861,415.7 L862,415.2 L863,415.7 L864,415.2 L865,415.8 L866,415.2 L867,415.6 L868,415.1 L869,415.8 L870,415.2 L871,415.7 L872,415.2 L873,415.7 L874,415.4 L875,415.6 L876,415.4 L877,415.6 L878,415.3 L879,415.8 L880,415.2 L881,415.8 L882,415.2 L883,415.6 L884,415.3 L885,415.6 L886,415.3 L887,415.6 L888,415.4 L889,415.6 L890,415.3 L891,415.8 L892,415.3 L893,415.8 L894,415.3 L895,415.7 L896,415.3 L897,415.6 L898,415.3 L899,415.8 L900,415.2 L901,415.6 L902,415.2 L903,415.8 L904,415.2 L905,415.6 L906,415.2 L907,415.7 L908,415.3 L909,415.7 L910,415.1 L911,415.8 L912,415.1 L913,415.7 L914,415.2 L915,415.8 L916,415.3 L917,415.8 L918,415.3 L919,415.7 L920,415.2 L921,415.6 L922,415.3 L923,415.7 L924,415.3 L925,415.8 L926,415.2 L927,415.6 L928,415.3 L929,415.6 L930,415.2 L931,415.6 L932,415.3 L933,415.7 L934,415.3 L935,415.6 L936,415.1 L937,415.7 L938,415.2 L939,415.7 L940,415.2 L941,415.7 L942,415.3 L943,415.7 L944,415.2 L945,415.8 L946,415.2 L947,415.7 L948,415.4 L949,415.7 L950,415.3 L951,415.8 L952,415.3 L953,415.7 L954,415.4 L955,415.8 L956,415.4 L957,415.7 L958,415.2 L959,415.8 L960,415.4 L961,415.7 L962,415.1 L963,415.6 L964,415.2 L965,415.7 L966,415.2 L967,415.7 L968,415.4 L969,415.7 L970,415.4 L971,415.8 L972,415.2 L973,415.7 L974,415.3 L975,415.7 L976,415.1 L977,415.6 L978,415.3 L979,415.7 L980,415.2 L981,415.8 L982,415.3 L983,415.6 L984,415.2 L985,415.7 L986,415.4 L987,415.8 L988,415.3 L989,415.7 L990,415.3 L991,415.7 L992,415.1 L993,416.2 L994,414.0 L995,416.3 L996,415.0 L997,416.1 L998,414.8 L999,416.1 L1000,415.0 L1001,416.0 L1002,415.1 L1003,415.9 L1004,415.2 L1005,415.7 L1006,414.4 L1007,416.6 L1008,414.1 L1009,416.0 L1010,414.8 L1011,415.7 L1012,415.0 L1013,416.0 L1014,415.4 L1015,415.7 L1016,415.1 L1017,415.9 L1018,415.2 L1019,415.6 L1020,415.4 L1021,415.7 L1022,415.2 L1023,415.8 L1024,415.3 L1025,415.8 L1026,415.2 L1027,415.7 L1028,415.2 L1029,415.7 L1030,415.3 L1031,415.6 L1032,415.4 L1033,415.7 L1034,415.4 L1035,415.7 L1036,415.4 L1037,415.8 L1038,415.4 L1039,415.6 L1040,415.3 L1041,415.7 L1042,415.2 L1043,415.8 L1044,415.2 L1045,415.8 L1046,415.3 L1047,415.7 L1048,415.4 L1049,415.8 L1050,415.3 L1051,415.8 L1052,415.4 L1053,415.7 L1054,415.4 L1055,415.7 L1056,415.2 L1057,415.7 L1058,415.2 L1059,415.6 L1060,415.3 L1061,415.7 L1062,415.3 L1063,415.7 L1064,415.2 L1065,415.8 L1066,415.2 L1067,415.6 L1068,415.3 L1069,415.7 L1070,415.3 L1071,415.6 L1072,415.2 L1073,415.7 L1074,415.2 L1075,415.6 L1076,415.3 L1077,415.7 L1078,415.2 L1079,415.8 L1080,415.4 L1081,415.7 L1082,415.2 L1083,415.7 L1084,415.3 L1085,415.8 L1086,415.2 L1087,415.7 L1088,415.3 L1089,415.8 L1090,415.4 L1091,415.8 L1092,415.2 L1093,415.8 L1094,415.2 L1095,415.8 L1096,415.3 L1097,415.7 L1098,415.4 L1099,415.7 L1100,415.2 L1101,415.7 L1102,415.2 L1103,415.7 L1104,415.2 L1105,415.8 L1106,415.4 L1107,415.8 L1108,415.3 L1109,415.6" fill="none" stroke="#8a8a8a" stroke-width="1"/><path d="M135,445.8 L136,445.1 L137,446.0 L138,445.1 L139,445.8 L140,444.8 L141,445.9 L142,444.8 L143,445.8 L144,444.9 L145,445.9 L146,444.8 L147,446.1 L148,444.9 L149,445.8 L150,444.8 L151,445.9 L152,444.9 L153,446.2 L154,445.2 L155,445.7 L156,444.8 L157,446.3 L158,444.8 L159,446.0 L160,444.8 L161,445.7 L162,445.3 L163,446.0 L164,445.0 L165,446.2 L166,445.2 L167,446.0 L168,444.7 L169,445.9 L170,445.1 L171,446.1 L172,444.7 L173,445.8 L174,444.9 L175,445.9 L176,445.1 L177,445.9 L178,445.0 L179,446.0 L180,445.1 L181,446.0 L182,444.9 L183,446.2 L184,445.0 L185,445.9 L186,444.7 L187,445.8 L188,445.3 L189,446.2 L190,445.1 L191,445.8 L192,445.1 L193,445.9 L194,445.1 L195,446.2 L196,445.1 L197,445.8 L198,445.2 L199,446.3 L200,445.0 L201,445.9 L202,444.8 L203,446.3 L204,445.0 L205,446.2 L206,445.1 L207,445.9 L208,445.0 L209,445.8 L210,445.1 L211,445.8 L212,445.1 L213,446.2 L214,444.8 L215,445.8 L216,445.1 L217,446.1 L218,444.8 L219,446.0 L220,444.9 L221,445.8 L222,444.8 L223,446.2 L224,445.1 L225,445.8 L226,445.3 L227,446.1 L228,444.9 L229,445.7 L230,445.0 L231,446.3 L232,445.3 L233,445.8 L234,445.3 L235,446.0 L236,445.1 L237,446.2 L238,445.3 L239,445.8 L240,444.7 L241,445.7 L242,445.1 L243,445.9 L244,445.3 L245,445.9 L246,444.9 L247,446.1 L248,444.9 L249,446.1 L250,444.9 L251,445.7 L252,444.9 L253,446.1 L254,445.2 L255,446.0 L256,445.2 L257,446.2 L258,445.1 L259,445.8 L260,444.8 L261,446.2 L262,444.8 L263,446.1 L264,445.0 L265,446.0 L266,445.0 L267,446.1 L268,444.7 L269,445.9 L270,444.8 L271,445.7 L272,445.2 L273,446.3 L274,445.1 L275,446.0 L276,444.8 L277,446.1 L278,445.0 L279,446.1 L280,444.7 L281,446.3 L282,445.2 L283,445.8 L284,445.1 L285,445.8 L286,444.8 L287,446.2 L288,445.2 L289,445.7 L290,445.1 L291,446.1 L292,444.8 L293,446.0 L294,444.9 L295,446.3 L296,444.8 L297,445.8 L298,444.9 L299,446.2 L300,444.8 L301,446.0 L302,445.2 L303,446.0 L304,445.1 L305,445.9 L306,444.8 L307,446.1 L308,444.9 L309,446.1 L310,445.2 L311,445.7 L312,445.1 L313,446.2 L314,444.9 L315,446.2 L316,444.9 L317,446.2 L318,444.7 L319,446.1 L320,444.8 L321,446.3 L322,444.9 L323,446.2 L324,445.3 L325,445.7 L326,444.7 L327,445.8 L328,445.1 L329,445.8 L330,444.9 L331,445.7 L332,444.8 L333,445.9 L334,444.9 L335,446.2 L336,444.9 L337,446.0 L338,444.9 L339,446.2 L340,444.9 L341,445.9 L342,445.3 L343,446.2 L344,444.9 L345,445.7 L346,445.0 L347,446.1 L348,445.1 L349,446.2 L350,445.2 L351,445.8 L352,445.1 L353,445.9 L354,444.8 L355,446.1 L356,445.2 L357,445.9 L358,445.2 L359,446.1 L360,444.8 L361,445.8 L362,445.0 L363,445.8 L364,445.1 L365,446.1 L366,444.7 L367,445.9 L368,445.0 L369,445.9 L370,445.3 L371,446.1 L372,445.2 L373,446.1 L374,444.9 L375,445.8 L376,444.9 L377,445.8 L378,444.8 L379,445.9 L380,444.9 L381,446.1 L382,445.0 L383,445.8 L384,444.8 L385,445.9 L386,444.8 L387,446.0 L388,445.0 L389,446.1 L390,445.1 L391,446.2 L392,445.0 L393,446.1 L394,444.9 L395,446.3 L396,445.1 L397,445.9 L398,444.7 L399,446.0 L400,445.0 L401,446.1 L402,445.1 L403,446.3 L404,444.8 L405,446.1 L406,445.1 L407,446.2 L408,444.7 L409,446.2 L410,444.8 L411,445.8 L412,444.9 L413,446.2 L414,445.0 L415,445.7 L416,445.0 L417,445.8 L418,445.3 L419,446.3 L420,444.8 L421,446.1 L422,444.9 L423,446.1 L424,445.0 L425,445.8 L426,445.1 L427,446.0 L428,445.0 L429,445.9 L430,445.2 L431,445.9 L432,445.2 L433,446.3 L434,445.2 L435,445.9 L436,445.0 L437,445.9 L438,445.0 L439,446.0 L440,445.3 L441,446.3 L442,445.0 L443,445.8 L444,444.7 L445,445.8 L446,444.9 L447,446.0 L448,445.1 L449,445.9 L450,445.0 L451,445.9 L452,445.2 L453,445.9 L454,445.0 L455,446.1 L456,445.2 L457,445.7 L458,444.8 L459,445.7 L460,444.9 L461,446.0 L462,444.7 L463,445.8 L464,444.8 L465,445.8 L466,445.2 L467,446.1 L468,445.2 L469,446.1 L470,444.9 L471,445.9 L472,444.4 L473,446.4 L474,443.9 L475,445.9 L476,445.0 L477,446.6 L478,444.8 L479,446.4 L480,444.0 L481,446.3 L482,445.0 L483,446.1 L484,444.5 L485,446.8 L486,444.2 L487,446.4 L488,444.8 L489,446.0 L490,444.9 L491,446.1 L492,444.1 L493,446.4 L494,445.0 L495,446.6 L496,444.6 L497,445.9 L498,444.0 L499,447.0 L500,444.8 L501,447.4 L502,443.8 L503,448.1 L504,443.0 L505,448.2 L506,443.5 L507,446.7 L508,442.7 L509,447.4 L510,443.6 L511,448.2 L512,443.0 L513,448.7 L514,443.8 L515,447.8 L516,444.5 L517,446.5 L518,444.1 L519,446.9 L520,443.7 L521,446.8 L522,442.7 L523,447.2 L524,443.9 L525,448.2 L526,443.0 L527,447.9 L528,442.8 L529,447.8 L530,444.1 L531,448.2 L532,444.7 L533,448.1 L534,443.9 L535,446.9 L536,443.9 L537,447.0 L538,443.1 L539,447.8 L540,443.4 L541,446.6 L542,444.0 L543,446.3 L544,443.4 L545,446.2 L546,444.1 L547,446.4 L548,443.3 L549,447.8 L550,444.3 L551,447.7 L552,444.6 L553,447.4 L554,444.4 L555,446.9 L556,443.8 L557,446.7 L558,444.6 L559,447.1 L560,443.5 L561,447.8 L562,444.4 L563,447.9 L564,442.9 L565,450.0 L566,442.5 L567,450.2 L568,437.1 L569,449.0 L570,438.0 L571,450.2 L572,441.4 L573,451.4 L574,440.1 L575,450.9 L576,442.4 L577,451.5 L578,437.4 L579,447.7 L580,442.9 L581,451.2 L582,441.5 L583,449.0 L584,437.7 L585,449.2 L586,438.4 L587,450.8 L588,443.5 L589,448.7 L590,443.3 L591,450.0 L592,439.1 L593,447.4 L594,443.7 L595,447.3 L596,442.6 L597,447.9 L598,439.5 L599,450.6 L600,439.8 L601,450.0 L602,439.4 L603,451.5 L604,442.0 L605,451.0 L606,442.1 L607,449.8 L608,439.3 L609,448.4 L610,442.8 L611,451.6 L612,441.4 L613,448.1 L614,442.2 L615,448.5 L616,439.5 L617,449.4 L618,439.5 L619,449.3 L620,439.6 L621,451.2 L622,441.4 L623,450.5 L624,442.7 L625,447.5 L626,441.4 L627,447.2 L628,442.1 L629,449.5 L630,440.9 L631,450.5 L632,443.3 L633,450.3 L634,442.2 L635,449.3 L636,442.4 L637,450.1 L638,443.1 L639,446.8 L640,441.2 L641,449.2 L642,441.7 L643,447.2 L644,443.6 L645,448.9 L646,441.7 L647,449.0 L648,442.3 L649,448.9 L650,443.9 L651,448.1 L652,443.3 L653,449.0 L654,442.7 L655,448.9 L656,442.2 L657,449.5 L658,441.7 L659,446.7 L660,442.4 L661,447.7 L662,444.2 L663,448.0 L664,442.0 L665,448.9 L666,444.2 L667,447.1 L668,442.5 L669,449.3 L670,444.3 L671,446.7 L672,442.6 L673,448.2 L674,442.3 L675,447.0 L676,443.2 L677,448.6 L678,443.6 L679,447.5 L680,444.5 L681,448.5 L682,443.5 L683,447.4 L684,442.9 L685,448.6 L686,442.4 L687,447.2 L688,443.1 L689,447.3 L690,442.6 L691,448.3 L692,443.1 L693,448.3 L694,443.5 L695,447.7 L696,444.3 L697,448.0 L698,444.0 L699,447.6 L700,444.7 L701,447.2 L702,443.3 L703,447.7 L704,443.4 L705,446.8 L706,443.3 L707,447.7 L708,443.4 L709,447.1 L710,444.4 L711,447.5 L712,444.7 L713,448.2 L714,444.0 L715,446.8 L716,443.8 L717,446.4 L718,442.9 L719,448.3 L720,443.1 L721,447.4 L722,442.9 L723,446.9 L724,443.9 L725,446.5 L726,444.0 L727,448.1 L728,443.5 L729,447.3 L730,443.8 L731,447.4 L732,443.6 L733,447.0 L734,443.8 L735,446.3 L736,444.0 L737,447.5 L738,444.4 L739,446.7 L740,443.3 L741,446.4 L742,444.5 L743,447.7 L744,444.6 L745,446.7 L746,443.2 L747,446.9 L748,443.4 L749,447.5 L750,444.9 L751,446.5 L752,443.2 L753,446.7 L754,444.2 L755,447.8 L756,444.7 L757,447.8 L758,443.8 L759,447.2 L760,444.9 L761,447.2 L762,443.5 L763,446.8 L764,444.8 L765,446.3 L766,444.8 L767,446.8 L768,443.5 L769,446.2 L770,444.2 L771,446.7 L772,444.3 L773,446.9 L774,444.0 L775,446.4 L776,443.6 L777,446.9 L778,444.4 L779,447.6 L780,443.8 L781,446.3 L782,443.4 L783,447.0 L784,444.4 L785,446.4 L786,444.9 L787,446.4 L788,444.5 L789,446.6 L790,443.4 L791,447.0 L792,444.7 L793,446.6 L794,444.3 L795,446.2 L796,444.2 L797,446.8 L798,443.6 L799,446.7 L800,443.9 L801,447.1 L802,444.7 L803,446.9 L804,444.3 L805,446.3 L806,445.0 L807,447.5 L808,444.9 L809,447.3 L810,444.4 L811,446.1 L812,443.6 L813,447.0 L814,444.4 L815,447.2 L816,444.0 L817,446.6 L818,444.0 L819,447.1 L820,444.8 L821,447.0 L822,443.7 L823,447.0 L824,443.9 L825,447.4 L826,443.9 L827,446.7 L828,444.2 L829,447.1 L830,444.1 L831,446.1 L832,444.9 L833,446.4 L834,443.9 L835,446.3 L836,444.6 L837,447.1 L838,444.9 L839,446.4 L840,444.7 L841,446.0 L842,444.0 L843,446.4 L844,444.5 L845,446.4 L846,445.0 L847,447.1 L848,444.9 L849,446.3 L850,444.1 L851,446.4 L852,444.4 L853,446.4 L854,444.3 L855,446.4 L856,444.4 L857,446.0 L858,445.0 L859,446.6 L860,444.0 L861,447.3 L862,444.0 L863,446.6 L864,444.2 L865,446.8 L866,444.1 L867,447.2 L868,444.6 L869,446.5 L870,444.1 L871,446.2 L872,444.9 L873,447.1 L874,445.1 L875,447.1 L876,443.9 L877,446.1 L878,444.1 L879,446.3 L880,444.7 L881,447.2 L882,444.0 L883,446.9 L884,444.5 L885,447.1 L886,444.4 L887,447.1 L888,444.2 L889,446.0 L890,444.1 L891,446.9 L892,444.0 L893,446.7 L894,445.0 L895,447.0 L896,444.6 L897,446.1 L898,444.8 L899,446.1 L900,444.1 L901,446.0 L902,444.0 L903,445.9 L904,444.2 L905,446.2 L906,444.5 L907,446.1 L908,444.0 L909,446.1 L910,444.6 L911,446.6 L912,444.6 L913,446.1 L914,444.8 L915,447.0 L916,445.0 L917,445.9 L918,444.1 L919,446.9 L920,444.3 L921,446.4 L922,444.0 L923,446.4 L924,445.1 L925,446.4 L926,444.5 L927,446.5 L928,444.1 L929,446.0 L930,444.1 L931,446.5 L932,444.3 L933,446.3 L934,444.8 L935,446.3 L936,444.8 L937,446.4 L938,444.5 L939,446.8 L940,444.9 L941,446.4 L942,444.5 L943,446.8 L944,444.3 L945,446.6 L946,444.4 L947,446.4 L948,444.2 L949,446.8 L950,444.5 L951,446.0 L952,444.7 L953,446.2 L954,444.9 L955,446.2 L956,444.2 L957,446.2 L958,444.7 L959,446.3 L960,444.9 L961,446.5 L962,444.7 L963,446.9 L964,444.5 L965,446.9 L966,444.2 L967,446.4 L968,445.1 L969,446.1 L970,445.0 L971,446.6 L972,445.0 L973,446.5 L974,444.8 L975,446.4 L976,444.4 L977,446.2 L978,445.0 L979,446.1 L980,444.2 L981,446.4 L982,444.9 L983,446.0 L984,445.1 L985,446.2 L986,444.5 L987,446.3 L988,444.3 L989,446.9 L990,444.6 L991,446.2 L992,444.3 L993,445.9 L994,444.4 L995,446.7 L996,444.4 L997,445.9 L998,444.6 L999,446.6 L1000,444.7 L1001,446.7 L1002,445.0 L1003,446.4 L1004,444.6 L1005,446.6 L1006,444.8 L1007,446.1 L1008,444.5 L1009,445.9 L1010,444.8 L1011,446.3 L1012,444.4 L1013,446.2 L1014,444.6 L1015,446.5 L1016,444.5 L1017,446.8 L1018,444.7 L1019,446.4 L1020,445.2 L1021,446.0 L1022,444.9 L1023,446.0 L1024,444.7 L1025,446.0 L1026,444.6 L1027,446.6 L1028,445.1 L1029,446.1 L1030,444.7 L1031,445.9 L1032,445.0 L1033,446.4 L1034,444.8 L1035,446.7 L1036,444.6 L1037,446.5 L1038,444.9 L1039,446.2 L1040,444.4 L1041,446.4 L1042,444.3 L1043,446.1 L1044,445.1 L1045,446.5 L1046,445.1 L1047,445.9 L1048,444.8 L1049,446.5 L1050,444.9 L1051,446.5 L1052,444.8 L1053,446.1 L1054,444.7 L1055,446.4 L1056,445.1 L1057,446.4 L1058,445.0 L1059,446.7 L1060,444.7 L1061,446.0 L1062,445.2 L1063,446.0 L1064,444.9 L1065,446.3 L1066,444.6 L1067,446.5 L1068,444.8 L1069,446.4 L1070,444.7 L1071,446.1 L1072,445.0 L1073,446.2 L1074,444.6 L1075,445.9 L1076,444.6 L1077,445.8 L1078,445.0 L1079,446.4 L1080,444.5 L1081,446.5 L1082,444.6 L1083,446.0 L1084,444.3 L1085,446.3 L1086,444.4 L1087,446.6 L1088,445.0 L1089,446.7 L1090,445.1 L1091,446.4 L1092,445.0 L1093,445.9 L1094,444.7 L1095,446.0 L1096,444.5 L1097,446.2 L1098,445.0 L1099,445.8 L1100,444.6 L1101,446.3 L1102,444.5 L1103,446.1 L1104,444.4 L1105,445.8 L1106,444.4 L1107,446.5 L1108,445.1 L1109,446.6" fill="none" stroke="#8a8a8a" stroke-width="1"/><path d="M135,490.6 L136,490.2 L137,490.7 L138,490.2 L139,490.9 L140,490.4 L141,490.7 L142,490.1 L143,490.7 L144,490.4 L145,490.6 L146,490.4 L147,490.6 L148,490.3 L149,490.8 L150,490.3 L151,490.6 L152,490.3 L153,490.7 L154,490.3 L155,490.8 L156,490.2 L157,490.8 L158,490.2 L159,490.6 L160,490.2 L161,490.8 L162,490.2 L163,490.7 L164,490.1 L165,490.6 L166,490.2 L167,490.8 L168,490.2 L169,490.6 L170,490.1 L171,490.6 L172,490.3 L173,490.8 L174,490.2 L175,490.7 L176,490.3 L177,490.9 L178,490.3 L179,490.7 L180,490.4 L181,490.8 L182,490.2 L183,490.8 L184,490.3 L185,490.7 L186,490.2 L187,490.9 L188,490.2 L189,490.7 L190,490.4 L191,490.7 L192,490.2 L193,490.7 L194,490.2 L195,490.7 L196,490.4 L197,490.8 L198,490.2 L199,490.7 L200,490.3 L201,490.7 L202,490.4 L203,490.8 L204,490.4 L205,490.8 L206,490.2 L207,490.8 L208,490.4 L209,490.6 L210,490.2 L211,490.7 L212,490.4 L213,490.6 L214,490.2 L215,490.7 L216,490.2 L217,490.7 L218,490.3 L219,490.9 L220,490.3 L221,490.7 L222,490.3 L223,490.8 L224,490.3 L225,490.8 L226,490.3 L227,490.8 L228,490.4 L229,490.7 L230,490.4 L231,490.6 L232,490.2 L233,490.7 L234,490.2 L235,490.9 L236,490.3 L237,490.8 L238,490.1 L239,490.7 L240,490.4 L241,490.7 L242,490.2 L243,490.8 L244,490.2 L245,490.7 L246,490.4 L247,490.7 L248,490.3 L249,490.7 L250,490.3 L251,490.9 L252,490.3 L253,490.6 L254,490.2 L255,490.7 L256,490.2 L257,490.7 L258,490.4 L259,490.8 L260,490.2 L261,490.9 L262,490.4 L263,490.8 L264,490.3 L265,490.7 L266,490.2 L267,490.7 L268,490.3 L269,490.6 L270,490.2 L271,490.7 L272,490.4 L273,490.7 L274,490.3 L275,490.8 L276,490.4 L277,490.8 L278,490.2 L279,490.7 L280,490.4 L281,490.6 L282,490.2 L283,490.8 L284,490.4 L285,490.7 L286,490.2 L287,490.8 L288,490.2 L289,490.6 L290,490.1 L291,490.7 L292,490.3 L293,490.7 L294,490.1 L295,490.8 L296,490.2 L297,490.7 L298,490.2 L299,490.7 L300,490.3 L301,490.6 L302,490.2 L303,490.6 L304,490.1 L305,490.9 L306,490.2 L307,490.6 L308,490.3 L309,490.6 L310,490.2 L311,490.7 L312,490.1 L313,490.7 L314,490.3 L315,490.8 L316,490.1 L317,490.8 L318,490.4 L319,490.7 L320,490.2 L321,490.8 L322,490.1 L323,490.8 L324,490.2 L325,490.8 L326,490.2 L327,490.8 L328,490.3 L329,490.6 L330,490.3 L331,490.7 L332,490.1 L333,490.8 L334,490.2 L335,490.9 L336,490.3 L337,490.9 L338,490.1 L339,490.7 L340,490.3 L341,490.7 L342,490.3 L343,490.9 L344,490.3 L345,490.9 L346,490.2 L347,490.6 L348,490.3 L349,490.8 L350,490.3 L351,490.7 L352,490.4 L353,490.7 L354,490.1 L355,490.6 L356,490.1 L357,490.8 L358,490.3 L359,490.9 L360,490.1 L361,490.9 L362,490.3 L363,490.7 L364,490.2 L365,490.9 L366,490.3 L367,490.7 L368,490.3 L369,490.6 L370,490.1 L371,490.7 L372,490.3 L373,490.8 L374,490.2 L375,490.8 L376,490.3 L377,490.7 L378,490.3 L379,490.8 L380,490.2 L381,490.6 L382,490.2 L383,490.9 L384,490.2 L385,490.7 L386,490.3 L387,490.8 L388,490.2 L389,490.6 L390,490.2 L391,490.8 L392,490.3 L393,490.9 L394,490.3 L395,490.8 L396,490.3 L397,490.8 L398,490.3 L399,490.7 L400,490.3 L401,490.6 L402,490.2 L403,490.7 L404,490.3 L405,490.8 L406,490.3 L407,490.7 L408,490.2 L409,490.8 L410,490.3 L411,490.8 L412,490.1 L413,490.9 L414,490.2 L415,490.9 L416,490.1 L417,490.8 L418,490.4 L419,490.8 L420,490.2 L421,490.8 L422,490.3 L423,490.9 L424,490.3 L425,490.9 L426,490.3 L427,490.7 L428,490.2 L429,490.7 L430,490.3 L431,490.8 L432,490.2 L433,490.9 L434,490.2 L435,490.9 L436,490.3 L437,490.8 L438,490.2 L439,490.6 L440,490.2 L441,490.8 L442,490.2 L443,490.9 L444,490.2 L445,490.7 L446,490.2 L447,490.8 L448,490.2 L449,490.9 L450,490.2 L451,490.8 L452,490.2 L453,490.7 L454,490.4 L455,490.6 L456,490.3 L457,490.9 L458,490.3 L459,490.9 L460,490.3 L461,490.6 L462,490.3 L463,490.9 L464,490.1 L465,490.8 L466,490.3 L467,490.8 L468,490.3 L469,490.7 L470,490.2 L471,490.6 L472,490.2 L473,490.9 L474,490.4 L475,490.8 L476,490.4 L477,490.6 L478,489.5 L479,494.1 L480,489.1 L481,493.4 L482,487.5 L483,492.5 L484,485.6 L485,492.5 L486,486.3 L487,493.3 L488,487.3 L489,493.7 L490,487.7 L491,493.6 L492,487.4 L493,491.7 L494,489.5 L495,492.3 L496,489.5 L497,492.4 L498,487.9 L499,492.2 L500,489.6 L501,491.3 L502,489.0 L503,492.3 L504,488.6 L505,492.2 L506,489.3 L507,492.3 L508,489.2 L509,491.9 L510,490.0 L511,491.6 L512,489.9 L513,491.2 L514,489.7 L515,491.6 L516,490.0 L517,491.7 L518,489.7 L519,491.1 L520,489.1 L521,491.6 L522,489.8 L523,491.0 L524,489.6 L525,491.6 L526,489.6 L527,491.1 L528,490.1 L529,491.0 L530,489.4 L531,491.0 L532,489.3 L533,491.5 L534,489.8 L535,491.0 L536,489.8 L537,491.6 L538,490.1 L539,491.0 L540,490.2 L541,491.4 L542,489.4 L543,491.2 L544,490.0 L545,491.5 L546,489.8 L547,491.5 L548,489.9 L549,490.9 L550,490.2 L551,491.0 L552,489.9 L553,491.3 L554,489.9 L555,490.9 L556,489.6 L557,491.2 L558,489.8 L559,491.3 L560,489.8 L561,490.9 L562,489.6 L563,490.8 L564,490.2 L565,491.2 L566,489.9 L567,490.9 L568,489.8 L569,490.8 L570,490.0 L571,491.3 L572,489.7 L573,491.1 L574,489.8 L575,492.6 L576,488.6 L577,496.1 L578,486.2 L579,494.6 L580,485.0 L581,494.2 L582,487.8 L583,493.5 L584,487.1 L585,495.0 L586,486.3 L587,493.1 L588,487.7 L589,491.8 L590,487.3 L591,494.1 L592,488.9 L593,493.4 L594,489.1 L595,493.8 L596,487.6 L597,493.9 L598,488.9 L599,491.8 L600,488.2 L601,491.5 L602,487.7 L603,491.8 L604,489.4 L605,491.6 L606,488.2 L607,491.3 L608,488.9 L609,491.6 L610,488.3 L611,491.3 L612,489.5 L613,492.6 L614,488.9 L615,491.3 L616,488.1 L617,491.7 L618,489.2 L619,492.3 L620,489.1 L621,492.4 L622,489.1 L623,491.4 L624,489.2 L625,492.3 L626,489.6 L627,491.9 L628,489.2 L629,492.0 L630,489.5 L631,491.3 L632,489.1 L633,492.1 L634,489.4 L635,491.1 L636,489.0 L637,491.6 L638,489.2 L639,491.0 L640,489.1 L641,491.3 L642,489.1 L643,491.2 L644,490.1 L645,491.2 L646,489.3 L647,491.7 L648,489.2 L649,491.1 L650,489.5 L651,490.9 L652,489.9 L653,490.9 L654,489.5 L655,491.8 L656,489.6 L657,491.4 L658,489.3 L659,491.2 L660,489.6 L661,491.6 L662,490.0 L663,491.5 L664,490.1 L665,491.2 L666,490.0 L667,491.2 L668,490.0 L669,490.9 L670,489.8 L671,491.1 L672,489.6 L673,490.8 L674,489.7 L675,490.8 L676,489.8 L677,490.8 L678,489.5 L679,491.2 L680,489.8 L681,490.8 L682,489.6 L683,491.0 L684,489.9 L685,491.3 L686,489.6 L687,491.1 L688,490.2 L689,491.5 L690,490.0 L691,490.8 L692,489.8 L693,491.4 L694,490.2 L695,490.8 L696,489.7 L697,491.2 L698,490.1 L699,490.9 L700,489.7 L701,490.8 L702,490.1 L703,491.0 L704,489.7 L705,491.0 L706,490.2 L707,491.3 L708,489.8 L709,490.8 L710,489.8 L711,491.2 L712,490.0 L713,491.1 L714,489.9 L715,491.3 L716,489.6 L717,491.0 L718,490.2 L719,491.0 L720,489.9 L721,490.9 L722,490.2 L723,490.9 L724,489.7 L725,491.2 L726,490.2 L727,490.9 L728,490.1 L729,490.8 L730,489.8 L731,490.9 L732,489.9 L733,490.9 L734,490.2 L735,490.7 L736,489.9 L737,491.1 L738,490.0 L739,490.8 L740,490.1 L741,491.0 L742,490.2 L743,491.0 L744,489.8 L745,490.8 L746,489.8 L747,491.0 L748,489.7 L749,491.3 L750,490.3 L751,491.1 L752,490.2 L753,491.1 L754,489.8 L755,491.0 L756,489.9 L757,491.1 L758,490.2 L759,490.9 L760,490.1 L761,491.0 L762,489.9 L763,490.8 L764,490.0 L765,491.0 L766,490.1 L767,491.1 L768,490.1 L769,491.1 L770,490.3 L771,490.9 L772,490.3 L773,491.1 L774,490.0 L775,490.8 L776,490.1 L777,490.7 L778,489.9 L779,491.1 L780,489.9 L781,491.0 L782,490.2 L783,490.9 L784,490.0 L785,490.9 L786,490.3 L787,490.9 L788,490.3 L789,490.8 L790,489.9 L791,491.0 L792,489.9 L793,491.0 L794,490.0 L795,490.8 L796,490.0 L797,490.7 L798,490.3 L799,490.8 L800,490.3 L801,491.0 L802,490.2 L803,490.7 L804,490.0 L805,491.1 L806,490.0 L807,491.1 L808,490.0 L809,491.1 L810,490.0 L811,491.0 L812,490.0 L813,490.7 L814,490.2 L815,491.0 L816,490.2 L817,491.1 L818,490.3 L819,490.7 L820,490.2 L821,490.8 L822,490.0 L823,490.7 L824,490.0 L825,491.1 L826,490.3 L827,491.1 L828,490.0 L829,490.7 L830,490.0 L831,490.7 L832,490.2 L833,490.8 L834,490.2 L835,490.7 L836,490.2 L837,490.9 L838,490.1 L839,490.9 L840,490.0 L841,491.0 L842,490.3 L843,491.0 L844,490.0 L845,491.0 L846,490.2 L847,491.1 L848,490.1 L849,490.8 L850,490.1 L851,490.8 L852,490.1 L853,490.9 L854,490.0 L855,490.8 L856,490.3 L857,490.7 L858,490.2 L859,490.8 L860,490.0 L861,490.9 L862,490.3 L863,490.8 L864,490.1 L865,491.0 L866,490.1 L867,490.9 L868,490.3 L869,490.9 L870,490.3 L871,490.7 L872,490.0 L873,490.9 L874,490.0 L875,490.9 L876,490.3 L877,490.6 L878,490.2 L879,490.8 L880,490.2 L881,490.8 L882,490.3 L883,490.7 L884,490.2 L885,490.9 L886,490.3 L887,490.7 L888,490.3 L889,490.9 L890,490.1 L891,490.8 L892,490.3 L893,491.0 L894,490.0 L895,490.8 L896,490.4 L897,490.8 L898,490.3 L899,490.8 L900,490.2 L901,490.8 L902,490.0 L903,490.8 L904,490.3 L905,490.9 L906,490.0 L907,490.7 L908,490.2 L909,490.8 L910,490.1 L911,490.8 L912,490.3 L913,491.0 L914,490.1 L915,490.9 L916,490.1 L917,491.0 L918,490.4 L919,490.8 L920,490.1 L921,490.7 L922,490.0 L923,490.9 L924,490.1 L925,491.0 L926,490.2 L927,491.0 L928,490.2 L929,491.0 L930,490.2 L931,490.9 L932,490.3 L933,490.8 L934,490.2 L935,490.8 L936,490.0 L937,490.8 L938,490.0 L939,490.7 L940,490.3 L941,490.7 L942,490.3 L943,490.8 L944,490.3 L945,490.9 L946,490.1 L947,491.0 L948,490.4 L949,490.7 L950,490.2 L951,490.6 L952,490.1 L953,490.8 L954,490.2 L955,490.7 L956,490.4 L957,490.9 L958,490.2 L959,490.7 L960,490.1 L961,490.7 L962,490.2 L963,490.6 L964,490.1 L965,490.9 L966,490.3 L967,490.9 L968,490.0 L969,490.7 L970,490.0 L971,490.7 L972,490.1 L973,490.8 L974,490.3 L975,490.8 L976,490.4 L977,490.8 L978,490.2 L979,490.8 L980,490.1 L981,490.9 L982,490.1 L983,490.9 L984,490.3 L985,490.7 L986,490.2 L987,490.6 L988,490.0 L989,490.8 L990,490.3 L991,490.6 L992,490.1 L993,490.9 L994,490.3 L995,490.9 L996,490.4 L997,490.9 L998,490.2 L999,490.8 L1000,490.3 L1001,490.9 L1002,490.1 L1003,490.9 L1004,490.2 L1005,490.7 L1006,490.2 L1007,490.9 L1008,490.1 L1009,490.8 L1010,490.2 L1011,490.8 L1012,490.2 L1013,490.9 L1014,490.3 L1015,490.7 L1016,490.3 L1017,490.9 L1018,490.1 L1019,490.7 L1020,490.2 L1021,490.8 L1022,490.1 L1023,490.6 L1024,490.2 L1025,490.9 L1026,490.1 L1027,490.8 L1028,490.2 L1029,490.9 L1030,490.1 L1031,490.7 L1032,490.1 L1033,490.7 L1034,490.4 L1035,490.6 L1036,490.4 L1037,490.6 L1038,490.3 L1039,490.7 L1040,490.1 L1041,490.9 L1042,490.4 L1043,490.7 L1044,490.2 L1045,490.8 L1046,490.2 L1047,490.8 L1048,490.1 L1049,490.8 L1050,490.1 L1051,490.6 L1052,490.4 L1053,490.7 L1054,490.2 L1055,490.8 L1056,490.1 L1057,490.9 L1058,490.1 L1059,490.7 L1060,490.4 L1061,490.9 L1062,490.1 L1063,490.6 L1064,490.4 L1065,490.7 L1066,490.3 L1067,490.8 L1068,490.2 L1069,490.8 L1070,490.1 L1071,490.7 L1072,490.3 L1073,490.9 L1074,490.2 L1075,490.8 L1076,490.2 L1077,490.8 L1078,490.2 L1079,490.9 L1080,490.2 L1081,490.8 L1082,490.2 L1083,490.7 L1084,490.1 L1085,490.7 L1086,490.3 L1087,490.7 L1088,490.2 L1089,490.9 L1090,490.3 L1091,490.8 L1092,490.3 L1093,490.8 L1094,490.1 L1095,490.8 L1096,490.4 L1097,490.9 L1098,490.2 L1099,490.9 L1100,490.4 L1101,490.9 L1102,490.2 L1103,490.8 L1104,490.2 L1105,490.9 L1106,490.1 L1107,490.8 L1108,490.3 L1109,490.7" fill="none" stroke="#8a8a8a" stroke-width="1"/><path d="M135,526.9 L136,526.3 L137,526.8 L138,526.1 L139,527.0 L140,525.9 L141,526.7 L142,526.2 L143,526.7 L144,526.1 L145,526.8 L146,526.2 L147,526.7 L148,526.0 L149,527.1 L150,526.3 L151,526.9 L152,526.0 L153,527.0 L154,526.2 L155,526.7 L156,526.0 L157,527.0 L158,526.2 L159,527.1 L160,526.0 L161,526.9 L162,526.1 L163,526.7 L164,525.9 L165,527.1 L166,526.3 L167,527.0 L168,526.1 L169,526.8 L170,526.1 L171,526.7 L172,526.2 L173,526.8 L174,526.0 L175,526.9 L176,526.3 L177,526.8 L178,526.2 L179,526.8 L180,526.0 L181,527.0 L182,525.9 L183,527.1 L184,526.1 L185,526.9 L186,526.1 L187,526.9 L188,526.3 L189,526.7 L190,526.0 L191,527.0 L192,526.2 L193,526.7 L194,526.1 L195,527.0 L196,526.3 L197,526.9 L198,526.2 L199,526.8 L200,526.2 L201,526.7 L202,526.0 L203,526.7 L204,526.1 L205,527.0 L206,526.0 L207,526.9 L208,526.3 L209,527.0 L210,525.9 L211,526.7 L212,525.9 L213,526.9 L214,526.1 L215,526.8 L216,526.3 L217,526.9 L218,526.0 L219,526.7 L220,526.1 L221,526.9 L222,525.9 L223,526.7 L224,526.2 L225,526.7 L226,526.2 L227,527.1 L228,526.3 L229,526.8 L230,526.0 L231,527.0 L232,525.9 L233,526.7 L234,526.3 L235,526.7 L236,526.1 L237,527.0 L238,526.3 L239,526.9 L240,526.3 L241,527.1 L242,526.1 L243,526.7 L244,526.0 L245,526.9 L246,526.0 L247,526.9 L248,526.0 L249,526.8 L250,525.9 L251,526.7 L252,526.2 L253,526.7 L254,525.9 L255,526.7 L256,526.2 L257,526.8 L258,526.3 L259,527.1 L260,526.0 L261,526.9 L262,526.2 L263,526.7 L264,526.3 L265,526.8 L266,526.1 L267,527.0 L268,526.2 L269,527.0 L270,526.1 L271,526.7 L272,526.3 L273,526.7 L274,525.9 L275,526.8 L276,526.3 L277,526.9 L278,526.2 L279,527.1 L280,526.1 L281,527.0 L282,526.1 L283,527.0 L284,526.1 L285,526.8 L286,526.0 L287,526.7 L288,526.3 L289,527.1 L290,526.2 L291,526.9 L292,526.2 L293,527.0 L294,526.0 L295,526.7 L296,526.0 L297,526.8 L298,526.1 L299,526.9 L300,526.0 L301,526.8 L302,526.0 L303,527.1 L304,526.1 L305,527.0 L306,526.0 L307,526.8 L308,526.1 L309,527.1 L310,526.0 L311,527.0 L312,526.1 L313,526.8 L314,526.0 L315,526.8 L316,526.1 L317,526.7 L318,526.2 L319,526.9 L320,526.3 L321,526.7 L322,526.0 L323,527.1 L324,526.3 L325,526.8 L326,526.0 L327,526.7 L328,526.3 L329,527.1 L330,526.2 L331,527.1 L332,526.1 L333,526.9 L334,526.1 L335,526.9 L336,526.2 L337,526.9 L338,526.2 L339,527.0 L340,526.2 L341,526.7 L342,526.0 L343,526.9 L344,526.2 L345,527.0 L346,526.2 L347,527.0 L348,526.1 L349,526.8 L350,526.1 L351,526.9 L352,526.3 L353,527.1 L354,526.2 L355,526.8 L356,526.0 L357,527.0 L358,526.3 L359,526.9 L360,526.3 L361,527.0 L362,526.1 L363,526.9 L364,526.1 L365,526.8 L366,526.1 L367,526.9 L368,526.0 L369,526.7 L370,526.2 L371,526.7 L372,526.1 L373,526.9 L374,526.3 L375,527.1 L376,526.2 L377,526.7 L378,526.0 L379,526.7 L380,526.3 L381,526.8 L382,526.1 L383,526.8 L384,526.2 L385,526.7 L386,526.2 L387,527.0 L388,526.2 L389,526.9 L390,526.3 L391,526.7 L392,526.2 L393,526.7 L394,526.1 L395,527.0 L396,526.2 L397,526.8 L398,526.2 L399,527.0 L400,526.2 L401,526.8 L402,526.0 L403,526.8 L404,525.9 L405,526.7 L406,526.3 L407,526.8 L408,526.1 L409,526.9 L410,526.2 L411,527.0 L412,526.0 L413,526.9 L414,526.0 L415,527.0 L416,526.3 L417,526.7 L418,526.3 L419,526.7 L420,526.0 L421,526.8 L422,526.3 L423,526.9 L424,526.2 L425,526.7 L426,526.2 L427,527.0 L428,526.0 L429,527.1 L430,526.1 L431,527.1 L432,526.2 L433,526.9 L434,526.0 L435,526.9 L436,526.3 L437,527.0 L438,525.9 L439,526.8 L440,526.2 L441,526.8 L442,526.0 L443,526.9 L444,526.2 L445,527.1 L446,526.3 L447,527.0 L448,526.0 L449,526.7 L450,526.3 L451,526.9 L452,526.1 L453,526.7 L454,526.2 L455,526.7 L456,526.2 L457,526.9 L458,525.9 L459,526.8 L460,526.3 L461,527.1 L462,526.1 L463,526.7 L464,526.3 L465,526.8 L466,526.2 L467,526.8 L468,526.2 L469,527.1 L470,526.0 L471,527.0 L472,526.3 L473,527.0 L474,526.2 L475,527.0 L476,526.3 L477,526.7 L478,526.3 L479,527.0 L480,525.9 L481,527.0 L482,526.2 L483,527.0 L484,523.8 L485,528.2 L486,522.4 L487,529.7 L488,523.9 L489,529.3 L490,525.0 L491,528.2 L492,522.1 L493,529.3 L494,522.9 L495,528.8 L496,523.7 L497,530.3 L498,523.2 L499,528.9 L500,523.9 L501,530.7 L502,525.4 L503,528.8 L504,525.1 L505,527.8 L506,525.4 L507,529.7 L508,524.2 L509,529.0 L510,524.7 L511,528.5 L512,524.4 L513,529.6 L514,525.4 L515,527.8 L516,525.2 L517,528.5 L518,524.4 L519,529.0 L520,523.2 L521,529.5 L522,525.1 L523,528.3 L524,524.5 L525,529.1 L526,524.6 L527,527.6 L528,525.6 L529,528.0 L530,524.4 L531,527.6 L532,524.8 L533,528.0 L534,523.8 L535,528.6 L536,523.8 L537,528.2 L538,524.8 L539,529.1 L540,525.0 L541,528.2 L542,525.8 L543,527.5 L544,525.3 L545,527.6 L546,525.1 L547,528.8 L548,525.5 L549,527.2 L550,524.9 L551,527.7 L552,525.8 L553,528.4 L554,524.3 L555,528.3 L556,524.6 L557,528.3 L558,524.3 L559,527.3 L560,524.5 L561,528.2 L562,524.4 L563,528.4 L564,525.1 L565,528.1 L566,525.6 L567,527.5 L568,525.8 L569,527.6 L570,524.7 L571,527.5 L572,524.7 L573,527.3 L574,525.1 L575,527.3 L576,525.1 L577,528.1 L578,524.8 L579,528.1 L580,525.8 L581,527.9 L582,525.6 L583,527.7 L584,525.8 L585,529.8 L586,519.5 L587,530.8 L588,517.9 L589,537.6 L590,518.8 L591,532.7 L592,521.2 L593,534.6 L594,519.2 L595,536.5 L596,516.2 L597,536.1 L598,516.5 L599,536.6 L600,517.2 L601,531.5 L602,518.8 L603,532.5 L604,523.2 L605,534.2 L606,522.8 L607,534.3 L608,520.0 L609,529.5 L610,521.1 L611,532.7 L612,522.5 L613,535.1 L614,517.9 L615,529.4 L616,519.7 L617,531.3 L618,519.3 L619,534.3 L620,521.5 L621,532.2 L622,522.4 L623,532.2 L624,519.1 L625,530.2 L626,524.5 L627,533.4 L628,524.6 L629,531.7 L630,521.9 L631,530.2 L632,520.3 L633,528.7 L634,523.8 L635,531.9 L636,524.9 L637,529.2 L638,524.3 L639,529.8 L640,521.9 L641,532.0 L642,524.1 L643,527.9 L644,522.1 L645,531.5 L646,525.1 L647,530.2 L648,522.9 L649,529.9 L650,522.9 L651,528.8 L652,522.0 L653,528.5 L654,522.0 L655,531.0 L656,522.5 L657,529.0 L658,522.2 L659,528.3 L660,523.8 L661,529.2 L662,525.0 L663,530.7 L664,524.9 L665,529.0 L666,525.2 L667,528.4 L668,523.0 L669,529.5 L670,524.5 L671,529.4 L672,525.1 L673,529.3 L674,523.1 L675,527.5 L676,524.8 L677,528.1 L678,525.4 L679,529.8 L680,523.8 L681,529.0 L682,524.0 L683,529.1 L684,524.9 L685,527.8 L686,525.5 L687,527.7 L688,525.2 L689,529.2 L690,524.9 L691,528.2 L692,524.0 L693,529.6 L694,525.5 L695,528.6 L696,524.8 L697,527.7 L698,525.0 L699,529.0 L700,525.2 L701,528.5 L702,524.8 L703,527.3 L704,523.9 L705,529.0 L706,524.0 L707,528.1 L708,524.9 L709,528.6 L710,523.8 L711,528.2 L712,525.2 L713,528.1 L714,524.7 L715,528.4 L716,524.0 L717,528.3 L718,524.3 L719,528.1 L720,525.0 L721,528.9 L722,525.3 L723,527.7 L724,524.9 L725,527.3 L726,525.6 L727,528.1 L728,524.7 L729,528.9 L730,525.7 L731,527.2 L732,524.7 L733,528.7 L734,525.8 L735,527.6 L736,524.7 L737,528.2 L738,524.4 L739,528.2 L740,524.3 L741,527.6 L742,524.7 L743,528.0 L744,525.3 L745,528.2 L746,524.6 L747,528.0 L748,524.8 L749,527.7 L750,524.6 L751,527.6 L752,525.0 L753,528.0 L754,525.2 L755,528.5 L756,524.9 L757,527.9 L758,524.9 L759,528.1 L760,525.5 L761,527.5 L762,525.1 L763,527.2 L764,524.8 L765,528.1 L766,525.1 L767,527.5 L768,524.6 L769,528.1 L770,524.8 L771,528.0 L772,525.2 L773,527.4 L774,525.8 L775,528.1 L776,525.1 L777,527.3 L778,525.7 L779,527.6 L780,525.1 L781,528.0 L782,525.4 L783,527.3 L784,525.1 L785,527.1 L786,525.8 L787,527.5 L788,525.3 L789,527.0 L790,525.9 L791,527.9 L792,525.5 L793,527.5 L794,525.4 L795,527.2 L796,524.8 L797,528.1 L798,525.2 L799,527.0 L800,525.2 L801,528.0 L802,525.6 L803,527.1 L804,525.2 L805,527.7 L806,525.6 L807,527.3 L808,524.9 L809,527.0 L810,525.7 L811,527.5 L812,525.4 L813,527.2 L814,525.4 L815,527.0 L816,525.5 L817,527.0 L818,525.6 L819,527.7 L820,525.9 L821,527.1 L822,525.0 L823,527.4 L824,526.0 L825,527.4 L826,525.8 L827,527.8 L828,525.1 L829,527.8 L830,525.3 L831,527.5 L832,526.1 L833,527.6 L834,525.7 L835,527.2 L836,525.5 L837,527.1 L838,525.0 L839,527.5 L840,525.3 L841,527.0 L842,526.1 L843,527.1 L844,525.9 L845,527.5 L846,525.4 L847,527.8 L848,526.0 L849,527.4 L850,525.4 L851,527.3 L852,526.1 L853,527.0 L854,526.1 L855,527.2 L856,526.0 L857,527.8 L858,525.5 L859,526.9 L860,525.5 L861,527.4 L862,525.3 L863,527.0 L864,525.8 L865,527.3 L866,525.6 L867,527.0 L868,525.3 L869,527.0 L870,525.7 L871,527.4 L872,525.7 L873,527.2 L874,525.5 L875,527.3 L876,525.5 L877,527.6 L878,525.3 L879,527.3 L880,525.8 L881,527.7 L882,525.2 L883,527.7 L884,526.0 L885,527.7 L886,525.6 L887,527.3 L888,526.1 L889,527.0 L890,525.4 L891,527.1 L892,525.7 L893,527.2 L894,525.8 L895,527.2 L896,525.9 L897,527.6 L898,525.7 L899,527.1 L900,526.0 L901,527.5 L902,525.5 L903,527.5 L904,525.7 L905,527.1 L906,526.0 L907,527.1 L908,526.1 L909,527.0 L910,525.9 L911,526.9 L912,526.1 L913,526.9 L914,525.9 L915,527.6 L916,525.4 L917,526.9 L918,525.7 L919,526.8 L920,525.6 L921,527.3 L922,525.8 L923,527.0 L924,525.8 L925,526.8 L926,525.7 L927,527.4 L928,526.1 L929,527.6 L930,526.1 L931,527.6 L932,525.4 L933,527.1 L934,525.5 L935,527.2 L936,526.0 L937,527.3 L938,525.9 L939,526.9 L940,525.6 L941,526.9 L942,525.5 L943,526.9 L944,526.0 L945,527.4 L946,525.6 L947,527.1 L948,525.7 L949,527.5 L950,526.0 L951,527.0 L952,526.2 L953,527.3 L954,525.7 L955,526.9 L956,525.7 L957,527.0 L958,525.8 L959,527.2 L960,525.8 L961,527.2 L962,525.9 L963,527.3 L964,526.1 L965,527.4 L966,525.9 L967,527.4 L968,525.8 L969,527.1 L970,525.9 L971,527.2 L972,525.9 L973,527.2 L974,525.9 L975,527.4 L976,526.1 L977,527.3 L978,525.9 L979,527.4 L980,525.6 L981,526.8 L982,525.6 L983,527.4 L984,525.8 L985,526.9 L986,525.6 L987,527.2 L988,526.1 L989,527.2 L990,526.2 L991,527.3 L992,526.1 L993,527.0 L994,526.2 L995,527.0 L996,525.8 L997,527.2 L998,526.0 L999,526.9 L1000,526.2 L1001,527.0 L1002,525.7 L1003,527.4 L1004,525.6 L1005,526.8 L1006,526.2 L1007,527.0 L1008,525.9 L1009,526.8 L1010,526.2 L1011,527.3 L1012,525.6 L1013,527.0 L1014,525.7 L1015,527.2 L1016,525.7 L1017,527.0 L1018,525.6 L1019,526.8 L1020,526.1 L1021,527.2 L1022,526.1 L1023,527.3 L1024,525.7 L1025,527.3 L1026,525.7 L1027,527.2 L1028,526.2 L1029,526.9 L1030,526.3 L1031,527.0 L1032,525.8 L1033,527.2 L1034,525.8 L1035,526.9 L1036,525.7 L1037,527.1 L1038,526.1 L1039,527.3 L1040,525.8 L1041,527.2 L1042,525.9 L1043,526.7 L1044,525.9 L1045,527.2 L1046,525.8 L1047,526.9 L1048,526.0 L1049,527.2 L1050,525.7 L1051,526.9 L1052,525.9 L1053,526.8 L1054,526.2 L1055,527.0 L1056,526.3 L1057,526.9 L1058,525.7 L1059,526.9 L1060,526.2 L1061,526.8 L1062,525.9 L1063,527.0 L1064,525.9 L1065,527.0 L1066,526.0 L1067,527.0 L1068,526.1 L1069,526.7 L1070,526.1 L1071,527.2 L1072,526.1 L1073,527.2 L1074,526.3 L1075,527.1 L1076,525.8 L1077,526.9 L1078,526.1 L1079,526.9 L1080,526.0 L1081,527.3 L1082,525.9 L1083,526.8 L1084,525.7 L1085,527.1 L1086,525.8 L1087,527.2 L1088,525.7 L1089,527.2 L1090,526.1 L1091,527.2 L1092,525.9 L1093,527.0 L1094,525.8 L1095,526.7 L1096,526.0 L1097,527.2 L1098,526.0 L1099,526.9 L1100,526.2 L1101,526.8 L1102,526.1 L1103,527.3 L1104,526.0 L1105,526.9 L1106,525.8 L1107,527.1 L1108,526.1 L1109,527.1" fill="none" stroke="#8a8a8a" stroke-width="1"/><path d="M135,565.6 L136,565.2 L137,565.8 L138,565.4 L139,565.8 L140,565.4 L141,565.7 L142,565.1 L143,565.7 L144,565.1 L145,565.8 L146,565.2 L147,565.8 L148,565.4 L149,565.6 L150,565.1 L151,565.8 L152,565.3 L153,565.8 L154,565.1 L155,565.9 L156,565.2 L157,565.8 L158,565.2 L159,565.7 L160,565.2 L161,565.9 L162,565.3 L163,565.7 L164,565.2 L165,565.9 L166,565.1 L167,565.9 L168,565.1 L169,565.6 L170,565.2 L171,565.8 L172,565.2 L173,565.7 L174,565.3 L175,565.7 L176,565.2 L177,565.7 L178,565.3 L179,565.7 L180,565.2 L181,565.7 L182,565.3 L183,565.9 L184,565.3 L185,565.7 L186,565.4 L187,565.8 L188,565.3 L189,565.8 L190,565.3 L191,565.8 L192,565.3 L193,565.6 L194,565.1 L195,565.9 L196,565.2 L197,565.7 L198,565.2 L199,565.8 L200,565.2 L201,565.9 L202,565.3 L203,565.9 L204,565.2 L205,565.9 L206,565.1 L207,565.8 L208,565.2 L209,565.9 L210,565.1 L211,565.6 L212,565.2 L213,565.6 L214,565.1 L215,565.7 L216,565.3 L217,565.7 L218,565.1 L219,565.7 L220,565.2 L221,565.9 L222,565.2 L223,565.9 L224,565.1 L225,565.8 L226,565.3 L227,565.9 L228,565.2 L229,565.7 L230,565.4 L231,565.8 L232,565.4 L233,565.8 L234,565.3 L235,565.7 L236,565.3 L237,565.9 L238,565.1 L239,565.6 L240,565.2 L241,565.6 L242,565.4 L243,565.9 L244,565.3 L245,565.8 L246,565.1 L247,565.8 L248,565.3 L249,565.8 L250,565.1 L251,565.8 L252,565.3 L253,565.9 L254,565.3 L255,565.7 L256,565.3 L257,565.9 L258,565.3 L259,565.6 L260,565.3 L261,565.7 L262,565.3 L263,565.9 L264,565.1 L265,565.7 L266,565.3 L267,565.7 L268,565.1 L269,565.7 L270,565.1 L271,565.8 L272,565.1 L273,565.7 L274,565.1 L275,565.9 L276,565.3 L277,565.9 L278,565.1 L279,565.7 L280,565.2 L281,565.7 L282,565.1 L283,565.7 L284,565.1 L285,565.7 L286,565.1 L287,565.9 L288,565.1 L289,565.7 L290,565.1 L291,565.8 L292,565.3 L293,565.9 L294,565.1 L295,565.8 L296,565.1 L297,565.7 L298,565.3 L299,565.7 L300,565.2 L301,565.9 L302,565.1 L303,565.7 L304,565.1 L305,565.9 L306,565.2 L307,565.8 L308,565.2 L309,565.7 L310,565.3 L311,565.8 L312,565.2 L313,565.8 L314,565.2 L315,565.9 L316,565.3 L317,565.7 L318,565.1 L319,565.8 L320,565.2 L321,565.8 L322,565.2 L323,565.7 L324,565.2 L325,565.9 L326,565.4 L327,565.9 L328,565.3 L329,565.8 L330,565.1 L331,565.7 L332,565.2 L333,565.8 L334,565.2 L335,565.9 L336,565.3 L337,565.7 L338,565.1 L339,565.9 L340,565.3 L341,565.8 L342,565.4 L343,565.9 L344,565.1 L345,565.8 L346,565.2 L347,565.8 L348,565.2 L349,565.9 L350,565.1 L351,565.9 L352,565.1 L353,565.7 L354,565.3 L355,565.8 L356,565.2 L357,565.9 L358,565.4 L359,565.7 L360,565.1 L361,565.8 L362,565.3 L363,565.7 L364,565.1 L365,565.9 L366,565.1 L367,565.7 L368,565.1 L369,565.6 L370,565.3 L371,565.8 L372,565.2 L373,565.8 L374,565.1 L375,565.7 L376,565.3 L377,565.7 L378,565.1 L379,565.9 L380,565.1 L381,565.8 L382,565.4 L383,565.8 L384,565.3 L385,565.7 L386,565.4 L387,565.8 L388,565.3 L389,565.8 L390,565.1 L391,565.7 L392,565.3 L393,565.7 L394,565.4 L395,565.8 L396,565.2 L397,565.8 L398,565.1 L399,565.8 L400,565.2 L401,565.9 L402,565.1 L403,565.8 L404,565.2 L405,565.7 L406,565.2 L407,565.8 L408,565.2 L409,565.7 L410,565.2 L411,565.7 L412,565.3 L413,565.7 L414,565.1 L415,565.6 L416,565.1 L417,565.7 L418,565.2 L419,565.7 L420,565.2 L421,565.9 L422,565.2 L423,565.8 L424,565.1 L425,565.8 L426,565.3 L427,565.7 L428,565.1 L429,565.8 L430,565.3 L431,565.8 L432,565.3 L433,565.9 L434,565.1 L435,565.9 L436,565.1 L437,565.7 L438,565.1 L439,565.8 L440,565.1 L441,565.9 L442,565.1 L443,565.9 L444,565.1 L445,565.8 L446,565.3 L447,565.7 L448,565.1 L449,565.9 L450,565.3 L451,565.6 L452,565.1 L453,565.6 L454,565.2 L455,565.9 L456,565.2 L457,565.9 L458,565.2 L459,565.9 L460,565.2 L461,565.8 L462,565.4 L463,565.9 L464,565.3 L465,565.7 L466,565.2 L467,565.8 L468,565.1 L469,565.9 L470,565.1 L471,565.9 L472,565.3 L473,565.9 L474,565.3 L475,565.7 L476,565.1 L477,565.8 L478,565.1 L479,565.7 L480,565.2 L481,565.7 L482,565.1 L483,565.9 L484,565.2 L485,565.6 L486,564.0 L487,567.1 L488,561.4 L489,571.0 L490,559.5 L491,568.4 L492,563.2 L493,567.4 L494,562.4 L495,568.2 L496,563.2 L497,570.5 L498,563.1 L499,567.4 L500,563.8 L501,569.1 L502,563.0 L503,567.8 L504,562.3 L505,568.3 L506,563.3 L507,568.1 L508,563.8 L509,567.4 L510,563.1 L511,566.3 L512,563.8 L513,567.1 L514,564.1 L515,567.2 L516,563.5 L517,567.6 L518,563.4 L519,567.3 L520,564.9 L521,566.5 L522,563.8 L523,566.3 L524,564.0 L525,566.1 L526,563.7 L527,566.3 L528,564.3 L529,566.2 L530,564.8 L531,566.6 L532,564.3 L533,567.1 L534,564.8 L535,567.1 L536,564.8 L537,566.4 L538,563.9 L539,566.6 L540,564.8 L541,566.5 L542,564.1 L543,566.9 L544,565.0 L545,566.5 L546,564.7 L547,566.0 L548,564.6 L549,566.2 L550,564.3 L551,565.9 L552,564.7 L553,566.2 L554,564.7 L555,566.3 L556,564.2 L557,566.5 L558,564.8 L559,566.2 L560,564.7 L561,566.7 L562,564.6 L563,566.7 L564,565.0 L565,566.3 L566,564.5 L567,566.6 L568,565.1 L569,566.2 L570,564.4 L571,566.4 L572,565.1 L573,566.2 L574,564.8 L575,565.8 L576,564.8 L577,566.2 L578,564.4 L579,566.2 L580,564.8 L581,565.8 L582,565.2 L583,566.2 L584,564.7 L585,565.9 L586,564.8 L587,565.8 L588,565.0 L589,566.9 L590,563.9 L591,568.1 L592,561.8 L593,567.4 L594,561.9 L595,570.1 L596,561.5 L597,567.9 L598,562.2 L599,567.0 L600,562.1 L601,568.9 L602,563.8 L603,567.7 L604,562.7 L605,568.4 L606,562.8 L607,568.5 L608,562.3 L609,567.7 L610,564.6 L611,568.4 L612,564.4 L613,567.7 L614,562.9 L615,568.2 L616,563.5 L617,567.7 L618,562.5 L619,568.0 L620,564.1 L621,568.3 L622,563.3 L623,566.8 L624,564.2 L625,567.1 L626,563.8 L627,567.8 L628,564.0 L629,567.5 L630,564.2 L631,567.0 L632,564.3 L633,566.8 L634,563.7 L635,566.5 L636,564.1 L637,567.3 L638,564.9 L639,566.7 L640,563.7 L641,567.1 L642,563.7 L643,566.4 L644,564.0 L645,566.5 L646,564.9 L647,567.2 L648,564.6 L649,567.1 L650,563.9 L651,567.1 L652,564.6 L653,567.1 L654,564.7 L655,566.9 L656,565.0 L657,567.0 L658,565.0 L659,566.9 L660,564.2 L661,566.0 L662,564.3 L663,566.8 L664,564.1 L665,567.1 L666,564.8 L667,566.4 L668,564.6 L669,566.7 L670,564.9 L671,566.6 L672,564.8 L673,566.1 L674,564.2 L675,566.5 L676,564.2 L677,566.6 L678,564.2 L679,566.4 L680,565.1 L681,567.0 L682,564.9 L683,566.7 L684,564.9 L685,566.4 L686,564.8 L687,566.5 L688,565.1 L689,565.9 L690,564.7 L691,566.7 L692,564.7 L693,566.0 L694,564.2 L695,565.9 L696,564.9 L697,566.4 L698,564.9 L699,566.5 L700,564.8 L701,566.6 L702,565.1 L703,566.6 L704,564.3 L705,566.1 L706,565.0 L707,566.6 L708,564.8 L709,566.2 L710,564.7 L711,566.3 L712,564.5 L713,566.4 L714,564.6 L715,566.2 L716,564.8 L717,566.5 L718,564.5 L719,566.3 L720,564.7 L721,566.0 L722,564.8 L723,566.0 L724,564.8 L725,565.8 L726,565.0 L727,566.0 L728,564.8 L729,566.3 L730,565.1 L731,566.3 L732,564.6 L733,565.9 L734,565.1 L735,565.9 L736,564.7 L737,566.1 L738,565.2 L739,565.9 L740,564.9 L741,565.8 L742,564.6 L743,565.9 L744,564.6 L745,565.8 L746,565.0 L747,566.5 L748,565.1 L749,565.8 L750,564.6 L751,566.4 L752,564.9 L753,565.8 L754,565.0 L755,566.1 L756,564.5 L757,565.9 L758,564.8 L759,566.3 L760,564.6 L761,566.2 L762,565.0 L763,566.1 L764,564.9 L765,566.2 L766,564.9 L767,565.8 L768,564.7 L769,566.0 L770,564.8 L771,566.0 L772,565.0 L773,566.4 L774,565.3 L775,566.2 L776,565.1 L777,566.4 L778,564.7 L779,566.3 L780,564.7 L781,566.0 L782,564.9 L783,566.4 L784,565.0 L785,566.4 L786,564.7 L787,566.1 L788,564.9 L789,566.1 L790,565.1 L791,566.0 L792,565.0 L793,566.1 L794,564.7 L795,566.0 L796,564.9 L797,566.2 L798,564.8 L799,566.3 L800,564.8 L801,566.1 L802,564.8 L803,565.8 L804,564.8 L805,565.9 L806,564.7 L807,566.3 L808,564.9 L809,566.3 L810,565.3 L811,565.8 L812,565.0 L813,565.8 L814,565.3 L815,566.3 L816,565.0 L817,566.2 L818,565.1 L819,566.1 L820,565.3 L821,566.1 L822,564.9 L823,566.1 L824,565.0 L825,566.1 L826,565.2 L827,566.1 L828,565.1 L829,565.7 L830,565.1 L831,566.1 L832,565.2 L833,566.2 L834,565.1 L835,566.0 L836,565.3 L837,565.8 L838,564.9 L839,566.2 L840,565.2 L841,566.1 L842,564.8 L843,566.2 L844,564.8 L845,565.8 L846,564.9 L847,565.9 L848,565.3 L849,566.0 L850,564.8 L851,565.9 L852,565.2 L853,566.2 L854,564.9 L855,565.8 L856,565.3 L857,565.7 L858,565.3 L859,566.2 L860,564.9 L861,565.8 L862,565.1 L863,565.9 L864,564.8 L865,566.2 L866,565.3 L867,565.7 L868,565.0 L869,565.7 L870,565.1 L871,566.0 L872,565.0 L873,565.8 L874,565.2 L875,566.0 L876,565.2 L877,566.2 L878,565.2 L879,566.1 L880,565.2 L881,565.9 L882,564.9 L883,566.0 L884,565.3 L885,565.8 L886,565.1 L887,565.9 L888,564.8 L889,565.9 L890,565.1 L891,566.0 L892,565.2 L893,566.1 L894,565.3 L895,566.1 L896,564.9 L897,565.8 L898,564.9 L899,566.0 L900,564.9 L901,566.0 L902,565.1 L903,565.8 L904,565.1 L905,565.7 L906,565.0 L907,565.9 L908,565.3 L909,565.7 L910,565.2 L911,565.8 L912,565.2 L913,566.1 L914,565.2 L915,565.7 L916,564.9 L917,566.1 L918,564.9 L919,565.9 L920,564.9 L921,566.1 L922,565.0 L923,566.0 L924,565.0 L925,565.9 L926,564.9 L927,566.1 L928,565.0 L929,566.0 L930,565.1 L931,565.8 L932,564.9 L933,565.9 L934,564.9 L935,565.8 L936,565.3 L937,566.0 L938,565.0 L939,565.9 L940,565.1 L941,566.1 L942,565.0 L943,565.9 L944,565.2 L945,565.7 L946,565.2 L947,565.8 L948,565.0 L949,566.1 L950,564.9 L951,565.8 L952,565.2 L953,565.9 L954,564.9 L955,565.8 L956,565.2 L957,565.9 L958,565.0 L959,565.9 L960,565.3 L961,566.0 L962,564.9 L963,566.0 L964,565.3 L965,565.8 L966,565.1 L967,565.9 L968,565.3 L969,565.8 L970,565.2 L971,565.9 L972,564.9 L973,566.0 L974,565.1 L975,565.7 L976,565.3 L977,566.0 L978,565.1 L979,566.0 L980,565.3 L981,566.1 L982,565.1 L983,565.9 L984,565.0 L985,565.9 L986,565.0 L987,565.7 L988,565.3 L989,565.8 L990,565.0 L991,566.0 L992,565.2 L993,566.0 L994,565.0 L995,566.0 L996,564.9 L997,565.9 L998,565.0 L999,566.0 L1000,565.2 L1001,566.1 L1002,565.2 L1003,565.9 L1004,565.3 L1005,565.7 L1006,565.3 L1007,565.9 L1008,565.3 L1009,565.9 L1010,565.0 L1011,565.8 L1012,565.3 L1013,566.1 L1014,565.3 L1015,565.9 L1016,565.2 L1017,566.0 L1018,565.1 L1019,565.8 L1020,565.2 L1021,566.0 L1022,565.2 L1023,566.0 L1024,565.1 L1025,565.9 L1026,564.9 L1027,565.9 L1028,565.1 L1029,565.9 L1030,565.3 L1031,565.8 L1032,565.4 L1033,565.7 L1034,565.3 L1035,565.9 L1036,565.2 L1037,565.7 L1038,565.2 L1039,566.0 L1040,565.3 L1041,565.7 L1042,565.0 L1043,565.7 L1044,565.1 L1045,565.7 L1046,565.3 L1047,565.9 L1048,565.1 L1049,565.7 L1050,565.2 L1051,565.7 L1052,565.0 L1053,565.7 L1054,565.1 L1055,566.0 L1056,565.3 L1057,565.9 L1058,565.2 L1059,566.0 L1060,565.0 L1061,565.8 L1062,565.2 L1063,566.0 L1064,565.1 L1065,565.8 L1066,565.0 L1067,565.8 L1068,565.3 L1069,565.8 L1070,565.2 L1071,565.8 L1072,565.2 L1073,565.8 L1074,565.0 L1075,566.0 L1076,565.3 L1077,565.8 L1078,565.2 L1079,565.7 L1080,565.3 L1081,565.8 L1082,565.2 L1083,565.7 L1084,565.2 L1085,565.8 L1086,565.0 L1087,566.0 L1088,565.1 L1089,565.8 L1090,565.3 L1091,565.9 L1092,565.0 L1093,566.0 L1094,565.0 L1095,565.9 L1096,565.2 L1097,565.7 L1098,565.3 L1099,565.8 L1100,565.3 L1101,565.8 L1102,565.0 L1103,565.9 L1104,565.1 L1105,565.7 L1106,565.2 L1107,565.8 L1108,565.0 L1109,565.9" fill="none" stroke="#999c9e" stroke-width="1"/><path d="M135,597.8 L136,597.2 L137,597.7 L138,597.1 L139,597.9 L140,597.2 L141,598.1 L142,597.0 L143,597.9 L144,597.2 L145,597.9 L146,597.0 L147,598.0 L148,597.2 L149,597.8 L150,597.2 L151,597.7 L152,597.2 L153,597.8 L154,597.2 L155,597.9 L156,597.2 L157,598.0 L158,597.2 L159,598.0 L160,596.9 L161,597.9 L162,597.0 L163,597.7 L164,597.2 L165,597.7 L166,597.1 L167,597.8 L168,597.1 L169,597.8 L170,597.3 L171,598.0 L172,596.9 L173,597.7 L174,597.0 L175,597.8 L176,597.0 L177,597.9 L178,597.0 L179,598.1 L180,597.2 L181,598.0 L182,597.3 L183,598.0 L184,597.3 L185,597.7 L186,597.2 L187,597.7 L188,597.0 L189,597.7 L190,597.2 L191,597.9 L192,597.0 L193,598.1 L194,597.1 L195,597.7 L196,597.2 L197,597.9 L198,597.3 L199,598.0 L200,597.0 L201,598.0 L202,596.9 L203,597.9 L204,596.9 L205,597.7 L206,597.2 L207,597.9 L208,597.0 L209,597.7 L210,597.0 L211,597.8 L212,597.0 L213,598.0 L214,597.0 L215,597.9 L216,597.3 L217,597.8 L218,597.2 L219,597.9 L220,597.2 L221,597.9 L222,597.2 L223,597.9 L224,597.3 L225,597.8 L226,597.0 L227,597.8 L228,597.1 L229,598.0 L230,597.0 L231,597.9 L232,597.3 L233,598.0 L234,596.9 L235,598.0 L236,597.0 L237,598.0 L238,597.0 L239,597.9 L240,597.2 L241,597.9 L242,597.3 L243,597.7 L244,597.0 L245,598.0 L246,597.0 L247,597.9 L248,597.3 L249,597.8 L250,596.9 L251,598.1 L252,597.2 L253,597.8 L254,597.3 L255,597.8 L256,597.1 L257,597.8 L258,596.9 L259,597.7 L260,597.2 L261,597.7 L262,597.2 L263,598.0 L264,597.3 L265,597.9 L266,597.1 L267,597.9 L268,597.1 L269,597.9 L270,597.2 L271,597.8 L272,597.0 L273,597.7 L274,597.0 L275,598.1 L276,597.1 L277,597.8 L278,597.2 L279,597.9 L280,597.0 L281,598.1 L282,597.2 L283,597.7 L284,597.2 L285,598.1 L286,597.3 L287,597.8 L288,597.3 L289,597.9 L290,597.1 L291,598.0 L292,597.1 L293,597.9 L294,597.0 L295,597.9 L296,597.2 L297,597.7 L298,597.2 L299,597.7 L300,597.3 L301,597.8 L302,597.1 L303,597.8 L304,597.3 L305,598.0 L306,597.2 L307,597.8 L308,597.2 L309,597.7 L310,597.0 L311,597.9 L312,597.1 L313,598.0 L314,597.0 L315,597.9 L316,596.9 L317,597.9 L318,597.0 L319,597.9 L320,597.2 L321,597.9 L322,597.3 L323,597.8 L324,597.2 L325,597.9 L326,597.3 L327,597.8 L328,597.1 L329,598.1 L330,596.9 L331,597.9 L332,597.1 L333,598.0 L334,596.9 L335,598.0 L336,597.3 L337,597.9 L338,597.1 L339,598.1 L340,597.1 L341,598.1 L342,597.3 L343,598.0 L344,597.3 L345,597.9 L346,597.0 L347,598.1 L348,597.3 L349,598.0 L350,597.3 L351,597.8 L352,597.3 L353,598.1 L354,597.3 L355,598.0 L356,597.1 L357,598.0 L358,597.3 L359,597.9 L360,597.1 L361,597.8 L362,597.1 L363,597.7 L364,597.3 L365,597.9 L366,597.2 L367,598.0 L368,597.1 L369,598.0 L370,597.0 L371,598.0 L372,596.9 L373,597.8 L374,597.1 L375,597.7 L376,597.0 L377,598.0 L378,596.9 L379,597.9 L380,596.9 L381,597.8 L382,597.2 L383,598.0 L384,596.9 L385,597.7 L386,597.1 L387,597.9 L388,597.3 L389,597.7 L390,597.0 L391,598.1 L392,597.1 L393,597.8 L394,596.9 L395,597.8 L396,597.3 L397,598.0 L398,597.0 L399,598.0 L400,597.2 L401,597.8 L402,597.2 L403,597.9 L404,597.2 L405,598.0 L406,596.9 L407,598.0 L408,597.3 L409,597.9 L410,597.3 L411,597.8 L412,597.2 L413,597.9 L414,597.3 L415,597.8 L416,596.9 L417,597.7 L418,597.2 L419,597.9 L420,597.3 L421,597.8 L422,597.1 L423,597.8 L424,597.1 L425,598.1 L426,597.3 L427,598.0 L428,597.3 L429,597.8 L430,597.0 L431,598.1 L432,597.1 L433,597.9 L434,597.1 L435,597.7 L436,597.3 L437,597.9 L438,597.0 L439,597.8 L440,597.0 L441,597.9 L442,597.2 L443,597.9 L444,597.3 L445,597.8 L446,597.2 L447,597.9 L448,597.3 L449,597.7 L450,596.9 L451,597.9 L452,596.9 L453,598.1 L454,597.3 L455,597.8 L456,596.9 L457,597.7 L458,596.9 L459,598.1 L460,597.0 L461,597.8 L462,597.0 L463,597.7 L464,597.2 L465,597.7 L466,597.2 L467,598.0 L468,597.3 L469,598.1 L470,597.3 L471,597.8 L472,597.2 L473,597.7 L474,597.0 L475,598.0 L476,597.1 L477,597.8 L478,597.1 L479,597.8 L480,597.1 L481,598.1 L482,597.0 L483,597.8 L484,597.0 L485,597.8 L486,597.0 L487,598.0 L488,597.2 L489,600.6 L490,591.8 L491,600.2 L492,595.4 L493,601.1 L494,595.4 L495,605.6 L496,594.0 L497,600.2 L498,592.6 L499,604.0 L500,591.6 L501,603.1 L502,595.1 L503,600.1 L504,595.8 L505,601.5 L506,594.9 L507,601.1 L508,596.2 L509,601.1 L510,596.0 L511,601.6 L512,595.7 L513,599.9 L514,594.2 L515,600.1 L516,596.4 L517,600.7 L518,594.8 L519,600.1 L520,595.5 L521,598.6 L522,595.3 L523,598.9 L524,595.0 L525,598.9 L526,595.5 L527,599.2 L528,596.6 L529,599.4 L530,595.1 L531,598.2 L532,595.9 L533,599.2 L534,595.5 L535,598.6 L536,595.6 L537,599.2 L538,596.7 L539,599.2 L540,596.3 L541,598.3 L542,596.6 L543,598.5 L544,595.9 L545,598.2 L546,596.1 L547,599.1 L548,596.3 L549,599.2 L550,596.1 L551,598.6 L552,595.8 L553,598.6 L554,596.9 L555,598.2 L556,596.0 L557,599.0 L558,596.6 L559,598.3 L560,596.8 L561,598.9 L562,595.9 L563,599.0 L564,596.6 L565,598.9 L566,596.9 L567,598.0 L568,596.5 L569,598.3 L570,596.6 L571,597.9 L572,596.9 L573,598.4 L574,596.6 L575,598.6 L576,596.4 L577,598.3 L578,596.7 L579,598.1 L580,597.0 L581,598.3 L582,596.6 L583,598.8 L584,596.4 L585,598.6 L586,596.4 L587,598.7 L588,596.3 L589,598.0 L590,596.9 L591,598.1 L592,596.4 L593,598.3 L594,596.3 L595,598.3 L596,596.9 L597,598.7 L598,595.5 L599,598.8 L600,595.1 L601,598.5 L602,596.0 L603,598.4 L604,596.3 L605,600.1 L606,595.4 L607,600.7 L608,596.4 L609,598.8 L610,596.6 L611,598.8 L612,596.0 L613,599.3 L614,596.2 L615,598.7 L616,595.9 L617,598.4 L618,594.9 L619,599.5 L620,595.7 L621,599.2 L622,595.6 L623,600.3 L624,596.0 L625,599.4 L626,596.4 L627,599.0 L628,596.6 L629,599.9 L630,595.5 L631,599.7 L632,595.4 L633,598.4 L634,595.6 L635,598.4 L636,595.7 L637,598.4 L638,596.6 L639,598.3 L640,595.9 L641,598.3 L642,596.3 L643,598.8 L644,595.2 L645,599.4 L646,595.9 L647,599.3 L648,596.9 L649,598.7 L650,596.5 L651,599.1 L652,596.7 L653,599.6 L654,596.5 L655,599.4 L656,595.6 L657,598.7 L658,597.0 L659,598.2 L660,596.4 L661,599.1 L662,596.3 L663,599.4 L664,595.7 L665,598.5 L666,595.6 L667,598.7 L668,596.9 L669,598.0 L670,596.5 L671,598.5 L672,596.8 L673,599.2 L674,596.6 L675,599.0 L676,596.8 L677,598.5 L678,596.6 L679,598.9 L680,596.6 L681,598.2 L682,596.0 L683,598.7 L684,596.9 L685,598.2 L686,597.0 L687,598.9 L688,596.6 L689,598.9 L690,596.4 L691,598.8 L692,596.2 L693,598.4 L694,596.8 L695,598.3 L696,596.5 L697,599.0 L698,596.8 L699,598.7 L700,596.8 L701,598.6 L702,596.3 L703,597.9 L704,596.4 L705,598.8 L706,596.2 L707,598.8 L708,596.8 L709,598.0 L710,596.8 L711,598.7 L712,596.5 L713,598.3 L714,597.2 L715,597.9 L716,596.6 L717,598.7 L718,596.6 L719,598.2 L720,597.2 L721,598.0 L722,596.6 L723,598.1 L724,596.7 L725,597.8 L726,596.7 L727,598.2 L728,597.2 L729,598.5 L730,596.5 L731,597.9 L732,596.6 L733,598.6 L734,596.8 L735,598.5 L736,597.1 L737,597.8 L738,597.0 L739,598.4 L740,597.0 L741,598.5 L742,597.2 L743,598.2 L744,596.9 L745,598.4 L746,596.7 L747,598.4 L748,596.7 L749,597.9 L750,596.6 L751,598.3 L752,596.7 L753,598.1 L754,596.9 L755,597.9 L756,596.6 L757,598.1 L758,596.5 L759,598.0 L760,596.9 L761,598.0 L762,596.8 L763,598.5 L764,597.1 L765,598.0 L766,597.0 L767,597.8 L768,597.2 L769,598.5 L770,597.0 L771,598.3 L772,596.7 L773,598.2 L774,597.1 L775,598.2 L776,596.6 L777,598.1 L778,596.6 L779,598.3 L780,596.7 L781,598.2 L782,596.6 L783,598.1 L784,596.6 L785,597.8 L786,596.8 L787,597.8 L788,597.0 L789,598.1 L790,596.8 L791,598.2 L792,597.2 L793,597.8 L794,597.2 L795,598.1 L796,597.2 L797,598.3 L798,596.8 L799,597.9 L800,596.9 L801,597.8 L802,596.9 L803,597.8 L804,596.9 L805,597.9 L806,596.9 L807,598.2 L808,597.2 L809,597.7 L810,597.2 L811,598.2 L812,596.7 L813,598.1 L814,597.2 L815,598.1 L816,597.1 L817,597.8 L818,596.8 L819,598.2 L820,597.0 L821,598.0 L822,596.7 L823,597.7 L824,596.8 L825,598.2 L826,596.8 L827,598.0 L828,596.8 L829,598.0 L830,597.1 L831,598.0 L832,597.3 L833,597.7 L834,597.0 L835,598.0 L836,597.3 L837,598.1 L838,597.2 L839,597.8 L840,597.0 L841,598.1 L842,597.0 L843,598.2 L844,596.9 L845,598.0 L846,596.8 L847,597.9 L848,597.0 L849,598.0 L850,597.3 L851,597.8 L852,596.8 L853,597.9 L854,596.8 L855,597.7 L856,597.2 L857,597.8 L858,597.3 L859,598.1 L860,597.2 L861,598.0 L862,597.3 L863,598.0 L864,597.1 L865,597.9 L866,596.9 L867,597.9 L868,596.9 L869,598.1 L870,597.2 L871,597.8 L872,597.0 L873,597.8 L874,597.3 L875,598.0 L876,597.0 L877,597.7 L878,597.0 L879,597.9 L880,597.1 L881,598.2 L882,597.3 L883,597.8 L884,597.3 L885,598.0 L886,596.9 L887,598.0 L888,597.3 L889,597.9 L890,597.3 L891,597.7 L892,597.2 L893,598.1 L894,597.0 L895,598.2 L896,597.1 L897,597.8 L898,597.1 L899,597.7 L900,597.1 L901,598.0 L902,597.0 L903,598.2 L904,597.1 L905,597.7 L906,596.9 L907,597.8 L908,597.2 L909,597.7 L910,597.0 L911,598.1 L912,597.2 L913,598.0 L914,597.3 L915,598.0 L916,597.3 L917,597.8 L918,597.1 L919,597.9 L920,597.0 L921,597.7 L922,597.2 L923,597.8 L924,597.1 L925,598.1 L926,596.9 L927,598.1 L928,597.2 L929,597.8 L930,597.2 L931,598.0 L932,596.9 L933,597.9 L934,597.3 L935,598.0 L936,597.0 L937,597.8 L938,597.1 L939,597.8 L940,597.2 L941,597.9 L942,597.2 L943,597.8 L944,597.3 L945,598.1 L946,597.1 L947,598.1 L948,597.1 L949,597.7 L950,597.3 L951,597.7 L952,597.2 L953,597.7 L954,597.2 L955,598.1 L956,597.3 L957,597.7 L958,597.0 L959,598.0 L960,597.2 L961,597.7 L962,597.2 L963,598.0 L964,597.2 L965,597.9 L966,597.1 L967,598.1 L968,597.0 L969,597.8 L970,597.2 L971,597.7 L972,597.0 L973,597.7 L974,597.3 L975,597.8 L976,597.0 L977,597.9 L978,597.3 L979,597.9 L980,597.0 L981,598.0 L982,597.2 L983,597.7 L984,597.2 L985,597.8 L986,596.9 L987,598.0 L988,597.2 L989,598.0 L990,597.1 L991,597.7 L992,597.2 L993,597.8 L994,596.9 L995,598.0 L996,597.3 L997,598.1 L998,597.2 L999,598.1 L1000,597.1 L1001,597.7 L1002,597.2 L1003,598.0 L1004,597.1 L1005,598.0 L1006,597.3 L1007,597.7 L1008,597.3 L1009,598.0 L1010,597.2 L1011,598.0 L1012,597.0 L1013,597.7 L1014,597.3 L1015,598.0 L1016,597.0 L1017,598.1 L1018,597.2 L1019,597.7 L1020,597.0 L1021,597.9 L1022,596.9 L1023,597.8 L1024,597.3 L1025,597.7 L1026,596.9 L1027,597.8 L1028,597.3 L1029,597.7 L1030,597.1 L1031,597.8 L1032,597.0 L1033,597.9 L1034,597.2 L1035,597.9 L1036,597.2 L1037,598.0 L1038,597.2 L1039,597.8 L1040,597.3 L1041,597.7 L1042,597.2 L1043,597.9 L1044,597.1 L1045,597.7 L1046,597.2 L1047,597.9 L1048,597.2 L1049,597.9 L1050,597.2 L1051,597.7 L1052,597.0 L1053,597.7 L1054,597.2 L1055,598.0 L1056,597.3 L1057,597.9 L1058,597.1 L1059,597.8 L1060,597.3 L1061,597.8 L1062,597.2 L1063,597.8 L1064,597.3 L1065,597.8 L1066,596.9 L1067,597.7 L1068,597.1 L1069,597.8 L1070,597.0 L1071,598.0 L1072,597.1 L1073,597.8 L1074,596.9 L1075,598.0 L1076,596.9 L1077,597.7 L1078,597.2 L1079,597.9 L1080,597.2 L1081,597.8 L1082,597.2 L1083,597.7 L1084,596.9 L1085,598.1 L1086,597.1 L1087,597.9 L1088,596.9 L1089,597.9 L1090,597.0 L1091,597.7 L1092,597.2 L1093,597.7 L1094,597.3 L1095,598.0 L1096,597.0 L1097,597.8 L1098,597.3 L1099,598.0 L1100,597.2 L1101,598.0 L1102,597.1 L1103,598.0 L1104,597.1 L1105,598.1 L1106,597.2 L1107,598.0 L1108,597.1 L1109,598.0" fill="none" stroke="#8a8a8a" stroke-width="1"/><path d="M135,642.1 L136,641.3 L137,641.8 L138,641.0 L139,642.0 L140,641.2 L141,641.9 L142,641.0 L143,642.1 L144,640.9 L145,641.7 L146,641.2 L147,641.8 L148,641.1 L149,642.0 L150,641.1 L151,641.8 L152,641.1 L153,642.0 L154,641.1 L155,642.1 L156,640.9 L157,642.0 L158,641.0 L159,641.7 L160,641.1 L161,641.7 L162,641.2 L163,641.9 L164,641.0 L165,642.0 L166,641.0 L167,641.8 L168,641.2 L169,642.0 L170,641.3 L171,642.0 L172,641.3 L173,641.8 L174,641.3 L175,641.8 L176,641.0 L177,642.1 L178,641.2 L179,641.8 L180,641.2 L181,642.0 L182,641.3 L183,642.0 L184,641.2 L185,641.8 L186,640.9 L187,641.7 L188,640.9 L189,641.8 L190,640.9 L191,642.0 L192,641.0 L193,641.9 L194,640.9 L195,642.0 L196,641.2 L197,641.7 L198,641.3 L199,642.0 L200,640.9 L201,641.7 L202,641.2 L203,641.9 L204,641.3 L205,641.7 L206,641.0 L207,642.0 L208,641.0 L209,641.8 L210,641.0 L211,642.1 L212,641.0 L213,641.8 L214,641.2 L215,641.9 L216,640.9 L217,641.9 L218,641.2 L219,641.7 L220,641.2 L221,641.7 L222,641.1 L223,641.9 L224,641.3 L225,641.7 L226,641.1 L227,641.8 L228,641.1 L229,641.9 L230,641.0 L231,641.8 L232,640.9 L233,642.0 L234,641.1 L235,641.8 L236,641.3 L237,641.9 L238,641.3 L239,641.8 L240,641.3 L241,642.0 L242,641.1 L243,642.0 L244,641.0 L245,641.9 L246,641.2 L247,641.8 L248,641.1 L249,641.8 L250,641.2 L251,641.8 L252,641.3 L253,642.0 L254,640.9 L255,642.0 L256,641.1 L257,641.7 L258,641.1 L259,642.1 L260,640.9 L261,641.7 L262,641.0 L263,641.7 L264,640.9 L265,641.8 L266,641.0 L267,642.1 L268,641.3 L269,641.7 L270,641.1 L271,641.8 L272,640.9 L273,641.8 L274,641.3 L275,642.0 L276,641.1 L277,641.9 L278,641.1 L279,642.1 L280,641.2 L281,641.8 L282,640.9 L283,641.9 L284,641.3 L285,642.0 L286,641.1 L287,641.7 L288,641.2 L289,641.9 L290,641.0 L291,641.9 L292,641.1 L293,642.0 L294,641.2 L295,642.0 L296,641.0 L297,641.7 L298,641.0 L299,642.1 L300,640.9 L301,641.8 L302,641.3 L303,641.9 L304,641.3 L305,641.9 L306,641.0 L307,641.9 L308,641.0 L309,642.0 L310,641.1 L311,641.8 L312,641.0 L313,641.9 L314,641.0 L315,641.8 L316,640.9 L317,641.8 L318,641.1 L319,641.9 L320,641.1 L321,642.0 L322,641.2 L323,641.7 L324,641.3 L325,641.8 L326,641.0 L327,641.7 L328,641.2 L329,641.9 L330,641.3 L331,641.9 L332,641.1 L333,641.8 L334,640.9 L335,642.1 L336,640.9 L337,641.8 L338,641.2 L339,641.9 L340,641.0 L341,641.7 L342,641.2 L343,641.9 L344,641.2 L345,641.7 L346,640.9 L347,641.9 L348,641.0 L349,641.7 L350,641.2 L351,641.7 L352,641.2 L353,641.7 L354,641.3 L355,642.0 L356,641.2 L357,642.1 L358,641.3 L359,641.8 L360,641.2 L361,641.8 L362,641.1 L363,641.9 L364,641.2 L365,641.8 L366,641.0 L367,641.8 L368,641.0 L369,641.9 L370,641.2 L371,642.0 L372,641.1 L373,641.9 L374,641.3 L375,641.9 L376,641.1 L377,641.8 L378,641.2 L379,641.7 L380,641.1 L381,642.0 L382,641.1 L383,641.8 L384,641.3 L385,641.8 L386,641.2 L387,641.7 L388,641.2 L389,641.8 L390,641.1 L391,642.0 L392,641.2 L393,642.0 L394,641.3 L395,641.8 L396,641.0 L397,642.0 L398,641.0 L399,642.0 L400,640.9 L401,642.1 L402,641.0 L403,642.1 L404,641.2 L405,641.9 L406,641.3 L407,641.7 L408,641.2 L409,641.8 L410,641.1 L411,641.8 L412,641.3 L413,641.9 L414,641.2 L415,642.0 L416,641.0 L417,642.1 L418,640.9 L419,641.9 L420,641.2 L421,641.9 L422,641.2 L423,641.9 L424,641.0 L425,642.0 L426,641.1 L427,641.8 L428,641.3 L429,642.0 L430,641.0 L431,641.9 L432,641.0 L433,641.7 L434,641.1 L435,641.8 L436,641.0 L437,641.8 L438,641.1 L439,641.8 L440,641.2 L441,642.0 L442,640.9 L443,641.8 L444,641.0 L445,642.1 L446,641.1 L447,641.9 L448,641.0 L449,641.9 L450,641.1 L451,642.1 L452,641.1 L453,642.0 L454,640.9 L455,641.8 L456,641.0 L457,641.7 L458,641.1 L459,641.9 L460,641.0 L461,641.8 L462,640.9 L463,642.0 L464,640.9 L465,641.8 L466,641.1 L467,641.9 L468,640.9 L469,642.0 L470,641.3 L471,642.1 L472,641.2 L473,641.9 L474,641.3 L475,641.9 L476,640.9 L477,641.9 L478,641.3 L479,642.0 L480,641.1 L481,641.7 L482,641.0 L483,641.7 L484,641.1 L485,641.8 L486,641.2 L487,641.8 L488,641.2 L489,641.9 L490,641.1 L491,641.9 L492,641.3 L493,643.2 L494,637.5 L495,646.6 L496,638.4 L497,645.9 L498,639.6 L499,645.3 L500,639.7 L501,642.9 L502,638.3 L503,643.6 L504,639.0 L505,642.6 L506,640.0 L507,642.6 L508,638.4 L509,642.6 L510,638.6 L511,642.4 L512,640.4 L513,643.6 L514,639.6 L515,642.2 L516,640.3 L517,642.3 L518,640.4 L519,642.6 L520,640.1 L521,643.1 L522,641.0 L523,642.9 L524,639.8 L525,642.4 L526,640.2 L527,642.5 L528,640.7 L529,642.5 L530,641.1 L531,642.6 L532,640.6 L533,642.1 L534,641.1 L535,642.7 L536,640.6 L537,641.8 L538,640.5 L539,641.9 L540,640.8 L541,641.9 L542,640.5 L543,642.3 L544,640.7 L545,642.0 L546,641.0 L547,641.8 L548,640.6 L549,641.8 L550,640.8 L551,641.9 L552,641.2 L553,641.8 L554,641.1 L555,641.8 L556,640.8 L557,642.1 L558,641.2 L559,641.7 L560,641.0 L561,642.2 L562,641.2 L563,642.0 L564,641.2 L565,642.2 L566,641.2 L567,641.8 L568,641.0 L569,641.8 L570,640.9 L571,642.1 L572,641.0 L573,642.2 L574,641.1 L575,641.7 L576,641.2 L577,641.8 L578,641.2 L579,641.9 L580,641.3 L581,641.7 L582,641.1 L583,641.7 L584,640.9 L585,641.7 L586,641.3 L587,641.9 L588,640.9 L589,642.0 L590,640.9 L591,641.9 L592,641.2 L593,641.7 L594,640.9 L595,641.9 L596,640.9 L597,642.1 L598,641.0 L599,642.0 L600,641.3 L601,642.1 L602,640.9 L603,641.9 L604,641.1 L605,641.9 L606,641.1 L607,641.7 L608,640.9 L609,641.8 L610,641.3 L611,641.9 L612,641.3 L613,642.1 L614,640.9 L615,642.0 L616,641.3 L617,642.0 L618,641.3 L619,641.9 L620,641.3 L621,642.0 L622,641.0 L623,641.8 L624,641.2 L625,642.0 L626,640.9 L627,641.7 L628,640.9 L629,641.9 L630,641.2 L631,641.9 L632,641.3 L633,641.9 L634,641.1 L635,641.9 L636,641.3 L637,642.0 L638,641.1 L639,641.7 L640,641.0 L641,641.9 L642,641.3 L643,641.8 L644,641.0 L645,641.9 L646,641.2 L647,642.0 L648,641.1 L649,641.7 L650,641.3 L651,642.1 L652,641.2 L653,641.9 L654,641.2 L655,641.8 L656,641.2 L657,641.7 L658,641.3 L659,641.7 L660,641.0 L661,641.8 L662,641.2 L663,641.9 L664,641.1 L665,642.1 L666,641.0 L667,642.0 L668,641.2 L669,642.1 L670,640.9 L671,641.9 L672,641.0 L673,641.7 L674,640.9 L675,641.7 L676,641.0 L677,641.7 L678,641.0 L679,641.9 L680,641.2 L681,641.8 L682,641.1 L683,641.8 L684,641.2 L685,642.1 L686,641.2 L687,642.0 L688,641.1 L689,642.0 L690,641.0 L691,642.0 L692,641.0 L693,641.9 L694,641.0 L695,642.0 L696,641.0 L697,642.0 L698,641.1 L699,641.8 L700,641.2 L701,642.0 L702,641.2 L703,641.8 L704,640.9 L705,642.0 L706,641.2 L707,642.0 L708,641.2 L709,641.7 L710,640.9 L711,641.7 L712,640.9 L713,641.8 L714,641.1 L715,641.9 L716,641.1 L717,642.0 L718,641.2 L719,642.1 L720,641.1 L721,642.0 L722,641.3 L723,641.7 L724,641.2 L725,642.0 L726,641.2 L727,642.0 L728,641.0 L729,641.7 L730,641.1 L731,641.7 L732,641.1 L733,641.7 L734,641.0 L735,641.9 L736,641.1 L737,641.9 L738,641.1 L739,641.8 L740,641.2 L741,642.1 L742,641.1 L743,641.7 L744,641.2 L745,642.0 L746,641.1 L747,641.9 L748,641.1 L749,642.0 L750,640.9 L751,641.7 L752,640.9 L753,641.9 L754,641.1 L755,641.8 L756,641.1 L757,641.8 L758,641.0 L759,641.9 L760,641.0 L761,641.7 L762,641.3 L763,641.8 L764,641.2 L765,641.8 L766,641.2 L767,642.0 L768,640.9 L769,642.1 L770,641.1 L771,642.1 L772,641.1 L773,642.0 L774,641.0 L775,642.0 L776,641.2 L777,642.0 L778,641.0 L779,642.1 L780,641.0 L781,641.9 L782,641.2 L783,641.7 L784,641.2 L785,642.0 L786,641.3 L787,642.0 L788,641.2 L789,641.7 L790,641.0 L791,641.7 L792,641.0 L793,641.9 L794,641.2 L795,641.8 L796,641.1 L797,641.8 L798,641.1 L799,641.9 L800,641.3 L801,641.8 L802,641.0 L803,641.7 L804,641.0 L805,642.0 L806,641.0 L807,642.0 L808,641.2 L809,642.1 L810,641.3 L811,641.7 L812,641.1 L813,641.7 L814,641.1 L815,641.8 L816,641.0 L817,641.8 L818,641.2 L819,641.9 L820,640.9 L821,641.8 L822,641.3 L823,641.7 L824,640.9 L825,642.0 L826,641.3 L827,641.7 L828,641.0 L829,641.7 L830,641.1 L831,641.7 L832,641.2 L833,641.9 L834,641.1 L835,642.0 L836,641.1 L837,642.1 L838,641.1 L839,641.9 L840,641.2 L841,641.8 L842,640.9 L843,641.9 L844,641.3 L845,641.7 L846,641.1 L847,641.9 L848,641.1 L849,641.9 L850,641.3 L851,641.7 L852,641.2 L853,641.8 L854,641.0 L855,642.0 L856,641.1 L857,642.0 L858,641.0 L859,641.8 L860,641.1 L861,642.0 L862,640.9 L863,642.0 L864,641.2 L865,641.7 L866,641.2 L867,641.9 L868,641.3 L869,642.0 L870,641.2 L871,641.8 L872,641.2 L873,642.1 L874,641.2 L875,642.0 L876,640.9 L877,642.0 L878,641.0 L879,642.0 L880,641.2 L881,641.8 L882,641.2 L883,641.7 L884,641.3 L885,642.0 L886,640.9 L887,642.0 L888,641.2 L889,641.7 L890,641.0 L891,641.9 L892,641.1 L893,641.8 L894,641.1 L895,642.0 L896,641.1 L897,641.8 L898,641.2 L899,641.7 L900,641.2 L901,641.8 L902,641.2 L903,642.0 L904,641.0 L905,641.8 L906,641.0 L907,641.9 L908,641.2 L909,641.7 L910,641.2 L911,642.0 L912,641.0 L913,642.1 L914,641.0 L915,641.9 L916,641.3 L917,641.7 L918,641.0 L919,641.7 L920,641.3 L921,642.1 L922,641.2 L923,641.7 L924,641.2 L925,641.8 L926,641.1 L927,641.7 L928,641.1 L929,641.8 L930,641.3 L931,641.8 L932,641.1 L933,641.8 L934,641.2 L935,641.8 L936,640.9 L937,642.0 L938,641.2 L939,642.0 L940,641.0 L941,642.0 L942,641.0 L943,641.7 L944,641.0 L945,641.7 L946,640.9 L947,641.7 L948,641.2 L949,641.9 L950,641.2 L951,641.7 L952,641.3 L953,642.1 L954,641.3 L955,641.7 L956,641.2 L957,641.9 L958,641.3 L959,642.0 L960,641.1 L961,642.0 L962,641.2 L963,641.7 L964,641.1 L965,642.1 L966,641.3 L967,642.0 L968,641.2 L969,642.0 L970,641.2 L971,642.0 L972,641.1 L973,641.8 L974,641.2 L975,641.9 L976,641.2 L977,641.8 L978,640.9 L979,641.7 L980,641.0 L981,641.7 L982,641.3 L983,642.0 L984,641.2 L985,641.9 L986,641.2 L987,642.1 L988,641.0 L989,641.8 L990,641.2 L991,641.8 L992,641.0 L993,641.9 L994,641.2 L995,641.9 L996,641.0 L997,641.8 L998,641.2 L999,641.8 L1000,641.1 L1001,641.7 L1002,641.2 L1003,641.7 L1004,641.3 L1005,641.8 L1006,641.2 L1007,641.9 L1008,641.3 L1009,642.0 L1010,641.0 L1011,642.1 L1012,641.3 L1013,641.7 L1014,640.9 L1015,641.7 L1016,641.3 L1017,641.7 L1018,641.1 L1019,642.0 L1020,641.3 L1021,641.8 L1022,641.2 L1023,642.1 L1024,641.1 L1025,641.9 L1026,641.2 L1027,641.8 L1028,641.2 L1029,642.0 L1030,641.3 L1031,641.9 L1032,641.0 L1033,641.9 L1034,641.2 L1035,641.9 L1036,641.3 L1037,641.7 L1038,641.3 L1039,641.8 L1040,641.2 L1041,641.8 L1042,641.2 L1043,642.0 L1044,641.0 L1045,642.0 L1046,641.0 L1047,641.7 L1048,641.2 L1049,641.8 L1050,641.1 L1051,641.8 L1052,641.1 L1053,642.0 L1054,641.1 L1055,641.8 L1056,640.9 L1057,642.0 L1058,641.1 L1059,642.0 L1060,641.3 L1061,641.9 L1062,641.1 L1063,642.1 L1064,641.0 L1065,641.7 L1066,641.1 L1067,642.1 L1068,641.3 L1069,641.9 L1070,641.2 L1071,641.8 L1072,640.9 L1073,642.0 L1074,641.2 L1075,642.0 L1076,641.2 L1077,641.9 L1078,641.3 L1079,642.0 L1080,641.3 L1081,641.7 L1082,641.3 L1083,642.0 L1084,641.0 L1085,641.9 L1086,640.9 L1087,642.0 L1088,641.3 L1089,641.7 L1090,641.3 L1091,641.7 L1092,641.3 L1093,641.8 L1094,641.2 L1095,641.9 L1096,641.1 L1097,642.0 L1098,641.2 L1099,642.1 L1100,641.0 L1101,641.7 L1102,641.2 L1103,641.8 L1104,641.0 L1105,641.7 L1106,641.0 L1107,641.9 L1108,641.0 L1109,641.8" fill="none" stroke="#8a8a8a" stroke-width="1"/><line x1="352.5" y1="389" x2="352.5" y2="631" stroke="#e01010" stroke-width="1.3"/></g><line x1="466.2" y1="389" x2="466.2" y2="407" stroke="#2a9a10" stroke-width="1.5"/><text x="468.3" y="402.7" font-family="Liberation Sans" font-size="12" letter-spacing="0.2"><tspan fill="#2a9a10">P</tspan><tspan fill="#ff1a1a">&lt;A&gt;</tspan></text><line x1="465.5" y1="408" x2="465.5" y2="424.5" stroke="#1414a8" stroke-width="1.5"/><text x="467" y="422.6" font-family="Liberation Sans" font-size="12" fill="#1414a8" letter-spacing="0.2">P</text><line x1="555.4" y1="408" x2="555.4" y2="424.5" stroke="#1414a8" stroke-width="1.5"/><text x="557.3" y="422.6" font-family="Liberation Sans" font-size="12" fill="#1414a8" letter-spacing="0.2">S</text><line x1="1005.2" y1="389" x2="1005.2" y2="406.3" stroke="#ff1a1a" stroke-width="1.5"/><text x="1007.5" y="402.7" font-family="Liberation Sans" font-size="12" letter-spacing="0.2"><tspan fill="#ff1a1a">P</tspan><tspan fill="#ff1a1a">&lt;A&gt;</tspan></text><line x1="469.5" y1="427" x2="469.5" y2="463" stroke="#2a9a10" stroke-width="1.5"/><text x="470.9" y="440.7" font-family="Liberation Sans" font-size="12" letter-spacing="0.2"><tspan fill="#2a9a10">P</tspan><tspan fill="#ff1a1a">&lt;A&gt;</tspan></text><text x="471" y="460.6" font-family="Liberation Sans" font-size="12" fill="#1414a8">P</text><line x1="562.4" y1="427" x2="562.4" y2="445" stroke="#a31515" stroke-width="1.5"/><text x="564.3" y="440.7" font-family="Liberation Sans" font-size="12" fill="#a31515" letter-spacing="0.2">S&lt;L&gt;</text><line x1="560.4" y1="445" x2="560.4" y2="463" stroke="#1414a8" stroke-width="1.5"/><text x="562.3" y="460.6" font-family="Liberation Sans" font-size="12" fill="#1414a8" letter-spacing="0.2">S</text><line x1="477.4" y1="465" x2="477.4" y2="482.3" stroke="#a31515" stroke-width="1.5"/><text x="479.3" y="478.7" font-family="Liberation Sans" font-size="12" fill="#a31515" letter-spacing="0.2">P&lt;A&gt;</text><line x1="476.2" y1="484" x2="476.2" y2="501" stroke="#1414a8" stroke-width="1.5"/><text x="478.1" y="498.6" font-family="Liberation Sans" font-size="12" fill="#1414a8" letter-spacing="0.2">P</text><line x1="574.3" y1="465" x2="574.3" y2="482.3" stroke="#a31515" stroke-width="1.5"/><text x="576.2" y="478.7" font-family="Liberation Sans" font-size="12" fill="#a31515" letter-spacing="0.2">S&lt;L&gt;</text><line x1="573.4" y1="484" x2="573.4" y2="501" stroke="#1414a8" stroke-width="1.5"/><text x="575.3" y="498.6" font-family="Liberation Sans" font-size="12" fill="#1414a8" letter-spacing="0.2">S</text><line x1="761.6" y1="465" x2="761.6" y2="482.3" stroke="#ff1a1a" stroke-width="1.5"/><text x="763.5" y="478.7" font-family="Liberation Sans" font-size="12" fill="#ff1a1a" letter-spacing="0.2">P&lt;A&gt;</text><line x1="481.4" y1="503" x2="481.4" y2="520.3" stroke="#a31515" stroke-width="1.5"/><text x="483.3" y="516.7" font-family="Liberation Sans" font-size="12" fill="#a31515" letter-spacing="0.2">P&lt;A&gt;</text><line x1="482.4" y1="522" x2="482.4" y2="539" stroke="#1414a8" stroke-width="1.5"/><text x="484.3" y="536.6" font-family="Liberation Sans" font-size="12" fill="#1414a8" letter-spacing="0.2">P</text><line x1="582.4" y1="503" x2="582.4" y2="520.3" stroke="#a31515" stroke-width="1.5"/><text x="583.8" y="516.7" font-family="Liberation Sans" font-size="12" fill="#a31515" letter-spacing="0.2">S&lt;L&gt;</text><line x1="581.8" y1="503" x2="581.8" y2="520.3" stroke="#ff1a1a" stroke-width="1.5"/><text x="583.8" y="516.7" font-family="Liberation Sans" font-size="12" fill="#ff1a1a" letter-spacing="0.2">S&lt;A&gt;</text><line x1="584.3" y1="522" x2="584.3" y2="539" stroke="#1414a8" stroke-width="1.5"/><text x="586.2" y="536.6" font-family="Liberation Sans" font-size="12" fill="#1414a8" letter-spacing="0.2">S</text><line x1="485.5" y1="541" x2="485.5" y2="558.3" stroke="#a31515" stroke-width="1.5"/><text x="487.4" y="554.7" font-family="Liberation Sans" font-size="12" fill="#a31515" letter-spacing="0.2">P&lt;A&gt;</text><line x1="484.5" y1="560" x2="484.5" y2="577" stroke="#1414a8" stroke-width="1.5"/><text x="486.4" y="574.6" font-family="Liberation Sans" font-size="12" fill="#1414a8" letter-spacing="0.2">P</text><line x1="588.4" y1="541" x2="588.4" y2="558.3" stroke="#a31515" stroke-width="1.5"/><text x="590.3" y="554.7" font-family="Liberation Sans" font-size="12" fill="#a31515" letter-spacing="0.2">S&lt;L&gt;</text><line x1="588.4" y1="560" x2="588.4" y2="577" stroke="#1414a8" stroke-width="1.5"/><text x="590.3" y="574.6" font-family="Liberation Sans" font-size="12" fill="#1414a8" letter-spacing="0.2">S</text><line x1="487.4" y1="579" x2="487.4" y2="596.3" stroke="#a31515" stroke-width="1.5"/><text x="489.3" y="592.7" font-family="Liberation Sans" font-size="12" fill="#a31515" letter-spacing="0.2">P&lt;A&gt;</text><line x1="488.4" y1="598" x2="488.4" y2="615" stroke="#1414a8" stroke-width="1.5"/><text x="490.3" y="612.6" font-family="Liberation Sans" font-size="12" fill="#1414a8" letter-spacing="0.2">P</text><line x1="595.3" y1="598" x2="595.3" y2="615" stroke="#1414a8" stroke-width="1.5"/><text x="597.2" y="612.6" font-family="Liberation Sans" font-size="12" fill="#1414a8" letter-spacing="0.2">S</text><line x1="492.2" y1="617" x2="492.2" y2="631" stroke="#a31515" stroke-width="1.5"/><text x="494.1" y="630.7" font-family="Liberation Sans" font-size="12" fill="#a31515" letter-spacing="0.2">P&lt;A&gt;</text><line x1="599.4" y1="617" x2="599.4" y2="631" stroke="#a31515" stroke-width="1.5"/><text x="600.6" y="630.7" font-family="Liberation Sans" font-size="12" fill="#a31515" letter-spacing="0.2">S&lt;L&gt;</text><line x1="598.8" y1="617" x2="598.8" y2="631" stroke="#ff1a1a" stroke-width="1.5"/><text x="600.6" y="630.7" font-family="Liberation Sans" font-size="12" fill="#ff1a1a" letter-spacing="0.2">S&lt;A&gt;</text><line x1="135" y1="633.5" x2="1128" y2="633.5" stroke="#000" stroke-width="1.1"/><line x1="137.9" y1="633.5" x2="137.9" y2="639" stroke="#000" stroke-width="1.1"/><line x1="156.0" y1="633.5" x2="156.0" y2="639" stroke="#000" stroke-width="1.1"/><line x1="174.1" y1="633.5" x2="174.1" y2="639" stroke="#000" stroke-width="1.1"/><line x1="192.2" y1="633.5" x2="192.2" y2="639" stroke="#000" stroke-width="1.1"/><line x1="210.3" y1="633.5" x2="210.3" y2="643.5" stroke="#000" stroke-width="1.1"/><line x1="228.4" y1="633.5" x2="228.4" y2="639" stroke="#000" stroke-width="1.1"/><line x1="246.5" y1="633.5" x2="246.5" y2="639" stroke="#000" stroke-width="1.1"/><line x1="264.6" y1="633.5" x2="264.6" y2="639" stroke="#000" stroke-width="1.1"/><line x1="282.7" y1="633.5" x2="282.7" y2="639" stroke="#000" stroke-width="1.1"/><line x1="300.8" y1="633.5" x2="300.8" y2="639" stroke="#000" stroke-width="1.1"/><line x1="318.9" y1="633.5" x2="318.9" y2="643.5" stroke="#000" stroke-width="1.1"/><line x1="337.0" y1="633.5" x2="337.0" y2="639" stroke="#000" stroke-width="1.1"/><line x1="355.1" y1="633.5" x2="355.1" y2="639" stroke="#000" stroke-width="1.1"/><line x1="373.2" y1="633.5" x2="373.2" y2="639" stroke="#000" stroke-width="1.1"/><line x1="391.3" y1="633.5" x2="391.3" y2="639" stroke="#000" stroke-width="1.1"/><line x1="409.4" y1="633.5" x2="409.4" y2="639" stroke="#000" stroke-width="1.1"/><line x1="427.5" y1="633.5" x2="427.5" y2="643.5" stroke="#000" stroke-width="1.1"/><line x1="445.6" y1="633.5" x2="445.6" y2="639" stroke="#000" stroke-width="1.1"/><line x1="463.7" y1="633.5" x2="463.7" y2="639" stroke="#000" stroke-width="1.1"/><line x1="481.8" y1="633.5" x2="481.8" y2="639" stroke="#000" stroke-width="1.1"/><line x1="499.9" y1="633.5" x2="499.9" y2="639" stroke="#000" stroke-width="1.1"/><line x1="518.0" y1="633.5" x2="518.0" y2="639" stroke="#000" stroke-width="1.1"/><line x1="536.1" y1="633.5" x2="536.1" y2="643.5" stroke="#000" stroke-width="1.1"/><line x1="554.2" y1="633.5" x2="554.2" y2="639" stroke="#000" stroke-width="1.1"/><line x1="572.3" y1="633.5" x2="572.3" y2="639" stroke="#000" stroke-width="1.1"/><line x1="590.4" y1="633.5" x2="590.4" y2="639" stroke="#000" stroke-width="1.1"/><line x1="608.5" y1="633.5" x2="608.5" y2="639" stroke="#000" stroke-width="1.1"/><line x1="626.6" y1="633.5" x2="626.6" y2="639" stroke="#000" stroke-width="1.1"/><line x1="644.7" y1="633.5" x2="644.7" y2="643.5" stroke="#000" stroke-width="1.1"/><line x1="662.8" y1="633.5" x2="662.8" y2="639" stroke="#000" stroke-width="1.1"/><line x1="680.9" y1="633.5" x2="680.9" y2="639" stroke="#000" stroke-width="1.1"/><line x1="699.0" y1="633.5" x2="699.0" y2="639" stroke="#000" stroke-width="1.1"/><line x1="717.1" y1="633.5" x2="717.1" y2="639" stroke="#000" stroke-width="1.1"/><line x1="735.2" y1="633.5" x2="735.2" y2="639" stroke="#000" stroke-width="1.1"/><line x1="753.3" y1="633.5" x2="753.3" y2="643.5" stroke="#000" stroke-width="1.1"/><line x1="771.4" y1="633.5" x2="771.4" y2="639" stroke="#000" stroke-width="1.1"/><line x1="789.5" y1="633.5" x2="789.5" y2="639" stroke="#000" stroke-width="1.1"/><line x1="807.6" y1="633.5" x2="807.6" y2="639" stroke="#000" stroke-width="1.1"/><line x1="825.7" y1="633.5" x2="825.7" y2="639" stroke="#000" stroke-width="1.1"/><line x1="843.8" y1="633.5" x2="843.8" y2="639" stroke="#000" stroke-width="1.1"/><line x1="861.9" y1="633.5" x2="861.9" y2="643.5" stroke="#000" stroke-width="1.1"/><line x1="880.0" y1="633.5" x2="880.0" y2="639" stroke="#000" stroke-width="1.1"/><line x1="898.1" y1="633.5" x2="898.1" y2="639" stroke="#000" stroke-width="1.1"/><line x1="916.2" y1="633.5" x2="916.2" y2="639" stroke="#000" stroke-width="1.1"/><line x1="934.3" y1="633.5" x2="934.3" y2="639" stroke="#000" stroke-width="1.1"/><line x1="952.4" y1="633.5" x2="952.4" y2="639" stroke="#000" stroke-width="1.1"/><line x1="970.5" y1="633.5" x2="970.5" y2="643.5" stroke="#000" stroke-width="1.1"/><line x1="988.6" y1="633.5" x2="988.6" y2="639" stroke="#000" stroke-width="1.1"/><line x1="1006.7" y1="633.5" x2="1006.7" y2="639" stroke="#000" stroke-width="1.1"/><line x1="1024.8" y1="633.5" x2="1024.8" y2="639" stroke="#000" stroke-width="1.1"/><line x1="1042.9" y1="633.5" x2="1042.9" y2="639" stroke="#000" stroke-width="1.1"/><line x1="1061.0" y1="633.5" x2="1061.0" y2="639" stroke="#000" stroke-width="1.1"/><line x1="1079.1" y1="633.5" x2="1079.1" y2="643.5" stroke="#000" stroke-width="1.1"/><line x1="1097.2" y1="633.5" x2="1097.2" y2="639" stroke="#000" stroke-width="1.1"/><line x1="1115.3" y1="633.5" x2="1115.3" y2="639" stroke="#000" stroke-width="1.1"/></svg>
<div class="t" style="left:135.4px;top:395.8px;font-size:13px;color:#31363b;font-weight:normal;letter-spacing:0.26px;">amax: 6541.8 counts</div>
<div class="t" style="left:135.4px;top:409.5px;font-size:13px;color:#31363b;font-weight:normal;letter-spacing:0.29px;">mean: -0.0 counts</div>
<div class="t" style="left:135.4px;top:433.8px;font-size:13px;color:#31363b;font-weight:normal;letter-spacing:0.28px;">amax: 285.7 counts</div>
<div class="t" style="left:135.4px;top:447.5px;font-size:13px;color:#31363b;font-weight:normal;letter-spacing:0.28px;">mean: 0.0 counts</div>
<div class="t" style="left:135.4px;top:471.8px;font-size:13px;color:#31363b;font-weight:normal;letter-spacing:0.26px;">amax: 1413.3 counts</div>
<div class="t" style="left:135.4px;top:485.5px;font-size:13px;color:#31363b;font-weight:normal;letter-spacing:0.28px;">mean: 0.0 counts</div>
<div class="t" style="left:135.4px;top:509.8px;font-size:13px;color:#31363b;font-weight:normal;letter-spacing:0.26px;">amax: 1410.9 counts</div>
<div class="t" style="left:135.4px;top:523.5px;font-size:13px;color:#31363b;font-weight:normal;letter-spacing:0.28px;">mean: 0.0 counts</div>
<div class="t" style="left:135.4px;top:547.8px;font-size:13px;color:#fcfcfc;font-weight:normal;letter-spacing:0.26px;">amax: 1080.5 counts</div>
<div class="t" style="left:135.4px;top:561.5px;font-size:13px;color:#fcfcfc;font-weight:normal;letter-spacing:0.28px;">mean: 0.0 counts</div>
<div class="t" style="left:135.4px;top:585.8px;font-size:13px;color:#31363b;font-weight:normal;letter-spacing:0.28px;">amax: 250.1 counts</div>
<div class="t" style="left:135.4px;top:599.5px;font-size:13px;color:#31363b;font-weight:normal;letter-spacing:0.28px;">mean: 0.0 counts</div>
<div style="position:absolute;left:135px;top:617px;width:200px;height:14px;overflow:hidden"><div class="t" style="left:0.4px;top:6.8px;font-size:13px;color:#31363b;font-weight:normal;letter-spacing:0.26px;">amax: 1047.4 counts</div></div>
<div class="t" style="left:184.3px;top:651.2px;font-size:13px;color:#31363b;font-weight:normal;letter-spacing:0.48px;">11:00:00</div>
<div class="t" style="left:292.9px;top:651.2px;font-size:13px;color:#31363b;font-weight:normal;letter-spacing:0.48px;">11:00:30</div>
<div class="t" style="left:401.5px;top:651.2px;font-size:13px;color:#31363b;font-weight:normal;letter-spacing:0.48px;">11:01:00</div>
<div class="t" style="left:510.1px;top:651.2px;font-size:13px;color:#31363b;font-weight:normal;letter-spacing:0.48px;">11:01:30</div>
<div class="t" style="left:618.7px;top:651.2px;font-size:13px;color:#31363b;font-weight:normal;letter-spacing:0.48px;">11:02:00</div>
<div class="t" style="left:727.3px;top:651.2px;font-size:13px;color:#31363b;font-weight:normal;letter-spacing:0.48px;">11:02:30</div>
<div class="t" style="left:835.9px;top:651.2px;font-size:13px;color:#31363b;font-weight:normal;letter-spacing:0.48px;">11:03:00</div>
<div class="t" style="left:944.5px;top:651.2px;font-size:13px;color:#31363b;font-weight:normal;letter-spacing:0.48px;">11:03:30</div>
<div class="t" style="left:1053.1px;top:651.2px;font-size:13px;color:#31363b;font-weight:normal;letter-spacing:0.48px;">11:04:00</div>
<div class="t" style="left:176.0px;top:674.2px;font-size:13px;color:#31363b;font-weight:normal;letter-spacing:0.39px;">2020-01-16</div>
<div style="position:absolute;left:1116px;top:396px;width:6px;height:121px;background:#8d8e90;border-radius:3px"></div>
<svg width="0" height="0" style="position:absolute"><defs><linearGradient id="g_blue" x1="0" y1="0" x2="0" y2="1">
<stop offset="0" stop-color="#a9ccf4"/><stop offset="0.45" stop-color="#3c86dc"/><stop offset="0.55" stop-color="#1a66c8"/><stop offset="1" stop-color="#3f8ce0"/></linearGradient><linearGradient id="g_home" x1="0" y1="0" x2="0" y2="1">
<stop offset="0" stop-color="#c4dcfb"/><stop offset="0.45" stop-color="#5e9cf4"/><stop offset="0.55" stop-color="#3a7cea"/><stop offset="1" stop-color="#5e9cf4"/></linearGradient><linearGradient id="g_purple" x1="0" y1="0" x2="0" y2="1">
<stop offset="0" stop-color="#c9b3ea"/><stop offset="0.45" stop-color="#7a52c4"/><stop offset="0.55" stop-color="#5a2eae"/><stop offset="1" stop-color="#7050c0"/></linearGradient><linearGradient id="g_green" x1="0" y1="0" x2="0" y2="1">
<stop offset="0" stop-color="#b8ecc0"/><stop offset="0.45" stop-color="#3cbc5c"/><stop offset="0.55" stop-color="#18a040"/><stop offset="1" stop-color="#40c060"/></linearGradient><linearGradient id="g_navy" x1="0" y1="0" x2="0" y2="1">
<stop offset="0" stop-color="#8fb6ec"/><stop offset="0.45" stop-color="#2458b8"/><stop offset="0.55" stop-color="#0b3592"/><stop offset="1" stop-color="#2a60c0"/></linearGradient><linearGradient id="g_teal" x1="0" y1="0" x2="0" y2="1">
<stop offset="0" stop-color="#a8d6d8"/><stop offset="0.45" stop-color="#3a9499"/><stop offset="0.55" stop-color="#1b7077"/><stop offset="1" stop-color="#3a9499"/></linearGradient><linearGradient id="g_yellow" x1="0" y1="0" x2="0" y2="1">
<stop offset="0" stop-color="#fff7a0"/><stop offset="0.45" stop-color="#e8cc10"/><stop offset="0.55" stop-color="#c9a400"/><stop offset="1" stop-color="#e8cc20"/></linearGradient><linearGradient id="g_red" x1="0" y1="0" x2="0" y2="1">
<stop offset="0" stop-color="#f6b3a6"/><stop offset="0.45" stop-color="#e2523e"/><stop offset="0.55" stop-color="#d2382a"/><stop offset="1" stop-color="#e86050"/></linearGradient><linearGradient id="hl" x1="0" y1="0" x2="0" y2="1"><stop offset="0" stop-color="#fff" stop-opacity="0.75"/><stop offset="1" stop-color="#fff" stop-opacity="0.05"/></linearGradient></defs></svg>
<svg style="position:absolute;left:21px;top:33px" width="26" height="26" viewBox="0 0 26 26"><circle cx="13" cy="13" r="11" fill="#4f8ff2"/><circle cx="13" cy="13" r="9.6" fill="url(#g_home)"/><ellipse cx="13" cy="8.05" rx="7.92" ry="4.62" fill="url(#hl)"/><g transform="translate(13,13)"><path d="M0 -7.5 L7.5 0 L5.5 0 L5.5 6 L2 6 L2 2 L-2 2 L-2 6 L-5.5 6 L-5.5 0 L-7.5 0 Z" fill="#ffffff"/></g></svg>
<svg style="position:absolute;left:64px;top:32px" width="28" height="28" viewBox="0 0 28 28"><circle cx="14" cy="14" r="12" fill="#0d2f8c"/><circle cx="14" cy="14" r="10.6" fill="url(#g_blue)"/><ellipse cx="14" cy="8.6" rx="8.64" ry="5.04" fill="url(#hl)"/><g transform="translate(14,14)"><path d="M0 -5.5 L4.5 -1 L-4.5 -1 Z M0 6 L4.5 1.5 L-4.5 1.5 Z" fill="#ffffff"/></g></svg>
<svg style="position:absolute;left:100px;top:32px" width="28" height="28" viewBox="0 0 28 28"><circle cx="14" cy="14" r="12" fill="#0d2f8c"/><circle cx="14" cy="14" r="10.6" fill="url(#g_blue)"/><ellipse cx="14" cy="8.6" rx="8.64" ry="5.04" fill="url(#hl)"/><g transform="translate(14,14)"><path d="M-4.5 -5 L4.5 -5 L0 -0.5 Z M-4.5 5 L4.5 5 L0 0.5 Z" fill="#ffffff"/></g></svg>
<svg style="position:absolute;left:144px;top:32px" width="28" height="28" viewBox="0 0 28 28"><circle cx="14" cy="14" r="12" fill="#0d2f8c"/><circle cx="14" cy="14" r="10.6" fill="url(#g_blue)"/><ellipse cx="14" cy="8.6" rx="8.64" ry="5.04" fill="url(#hl)"/><g transform="translate(14,14)"><path d="M-6 0 L-0.8 -5 L-0.8 5 Z M6 0 L0.8 -5 L0.8 5 Z" fill="#ffffff"/></g></svg>
<svg style="position:absolute;left:180px;top:32px" width="28" height="28" viewBox="0 0 28 28"><circle cx="14" cy="14" r="12" fill="#0d2f8c"/><circle cx="14" cy="14" r="10.6" fill="url(#g_blue)"/><ellipse cx="14" cy="8.6" rx="8.64" ry="5.04" fill="url(#hl)"/><g transform="translate(14,14)"><path d="M-5.5 -5 L-0.5 0 L-5.5 5 Z M5.5 -5 L0.5 0 L5.5 5 Z" fill="#ffffff"/></g></svg>
<svg style="position:absolute;left:224px;top:32px" width="28" height="28" viewBox="0 0 28 28"><circle cx="14" cy="14" r="12" fill="#0d2f8c"/><circle cx="14" cy="14" r="10.6" fill="url(#g_blue)"/><ellipse cx="14" cy="8.6" rx="8.64" ry="5.04" fill="url(#hl)"/><g transform="translate(14,14)"><path d="M-3.5 -5.5 L3.5 -5.5 L3.5 -4.6 L-3.5 -4.6 Z M-3.2 -4 L3.2 -4 L0 -1 Z M-3.2 4 L3.2 4 L0 1 Z M-3.5 5.5 L3.5 5.5 L3.5 4.6 L-3.5 4.6 Z" fill="#ffffff"/></g></svg>
<svg style="position:absolute;left:371px;top:32px" width="28" height="28" viewBox="0 0 28 28"><circle cx="14" cy="14" r="12" fill="#3f137e"/><circle cx="14" cy="14" r="10.6" fill="url(#g_purple)"/><ellipse cx="14" cy="8.6" rx="8.64" ry="5.04" fill="url(#hl)"/><g transform="translate(14,14)"><path d="M-1 0 L-6.5 3 L-1 6.5" fill="none" stroke="#fff" stroke-width="2.2"/><g transform="translate(2.5 -2) rotate(42)"><rect x="-6.5" y="-2.2" width="13" height="4.4" fill="#f07070" stroke="#200808" stroke-width="0.8"/><path d="M-4 -2.2 V-0.8 M-1.5 -2.2 V-0.8 M1 -2.2 V-0.8 M3.5 -2.2 V-0.8" stroke="#200808" stroke-width="0.9"/></g></g></svg>
<svg style="position:absolute;left:407px;top:32px" width="28" height="28" viewBox="0 0 28 28"><circle cx="14" cy="14" r="12" fill="#3f137e"/><circle cx="14" cy="14" r="10.6" fill="url(#g_purple)"/><ellipse cx="14" cy="8.6" rx="8.64" ry="5.04" fill="url(#hl)"/><g transform="translate(14,14)"><rect x="-1.2" y="-6" width="2" height="8" fill="#ff8a00"/><path d="M1.5 -6 L4 -6 Q6 -6 6 -4 Q6 -2 4 -2 L2.8 -2 L2.8 0 L1.5 0 Z" fill="#ff8a00"/><ellipse cx="0" cy="4" rx="4.5" ry="2" fill="#c8c8d0"/><circle cx="-0.5" cy="3.6" r="1.2" fill="#111"/></g></svg>
<svg style="position:absolute;left:457px;top:32px" width="28" height="28" viewBox="0 0 28 28"><circle cx="14" cy="14" r="12" fill="#0a4a1c"/><circle cx="14" cy="14" r="10.6" fill="url(#g_green)"/><ellipse cx="14" cy="8.6" rx="8.64" ry="5.04" fill="url(#hl)"/><g transform="translate(14,14)"><path d="M-6 -1.8 L1 -1.8 L1 -4.5 L6.5 0 L1 4.5 L1 1.8 L-6 1.8 Z" fill="#fff"/><text x="-0.5" y="3.8" font-family="Liberation Sans" font-weight="bold" font-size="11" fill="#ff1010" text-anchor="middle">P</text></g></svg>
<svg style="position:absolute;left:493px;top:32px" width="28" height="28" viewBox="0 0 28 28"><circle cx="14" cy="14" r="12" fill="#0a4a1c"/><circle cx="14" cy="14" r="10.6" fill="url(#g_green)"/><ellipse cx="14" cy="8.6" rx="8.64" ry="5.04" fill="url(#hl)"/><g transform="translate(14,14)"><path d="M-6 -1.8 L1 -1.8 L1 -4.5 L6.5 0 L1 4.5 L1 1.8 L-6 1.8 Z" fill="#fff"/><text x="-0.5" y="3.8" font-family="Liberation Sans" font-weight="bold" font-size="11" fill="#ff1010" text-anchor="middle">S</text></g></svg>
<svg style="position:absolute;left:529px;top:32px" width="28" height="28" viewBox="0 0 28 28"><circle cx="14" cy="14" r="12" fill="#0a4a1c"/><circle cx="14" cy="14" r="10.6" fill="url(#g_green)"/><ellipse cx="14" cy="8.6" rx="8.64" ry="5.04" fill="url(#hl)"/><g transform="translate(14,14)"><path d="M-6 -1.8 L1 -1.8 L1 -4.5 L6.5 0 L1 4.5 L1 1.8 L-6 1.8 Z" fill="#fff"/><circle cx="-1.5" cy="0" r="3.3" fill="#9ab8f0" stroke="#4a70c0" stroke-width="0.8"/><path d="M-1.5 0 L0 -2" stroke="#222" stroke-width="1"/></g></svg>
<svg style="position:absolute;left:579px;top:32px" width="28" height="28" viewBox="0 0 28 28"><circle cx="14" cy="14" r="12" fill="#011040"/><circle cx="14" cy="14" r="10.6" fill="url(#g_navy)"/><ellipse cx="14" cy="8.6" rx="8.64" ry="5.04" fill="url(#hl)"/><g transform="translate(14,14)"><text x="-2.8" y="5.5" font-family="Liberation Sans" font-weight="bold" font-size="14.5" fill="#fff" text-anchor="middle">P</text><path d="M-7.5 1 L-5 1 M-0.5 0 L1.5 5.5 L4 -2 L6 1 L7.5 -0.5" fill="none" stroke="#ff1010" stroke-width="1.5" stroke-linejoin="round"/></g></svg>
<svg style="position:absolute;left:615px;top:32px" width="28" height="28" viewBox="0 0 28 28"><circle cx="14" cy="14" r="12" fill="#011040"/><circle cx="14" cy="14" r="10.6" fill="url(#g_navy)"/><ellipse cx="14" cy="8.6" rx="8.64" ry="5.04" fill="url(#hl)"/><g transform="translate(14,14)"><text x="-2.8" y="5.5" font-family="Liberation Sans" font-weight="bold" font-size="14.5" fill="#fff" text-anchor="middle">S</text><path d="M-7.5 1 L-5 1 M-0.5 0 L1.5 5.5 L4 -2 L6 1 L7.5 -0.5" fill="none" stroke="#ff1010" stroke-width="1.5" stroke-linejoin="round"/></g></svg>
<svg style="position:absolute;left:20px;top:72px" width="28" height="28" viewBox="0 0 28 28"><circle cx="14" cy="14" r="12" fill="#07313a"/><circle cx="14" cy="14" r="10.6" fill="url(#g_teal)"/><ellipse cx="14" cy="8.6" rx="8.64" ry="5.04" fill="url(#hl)"/><g transform="translate(14,14)"><path d="M-2 -6 L3 -6 L5 2 L1 3 Z M2 -3 L6 -3 L7.5 4 L4 4.5 Z" fill="#f4f4f4"/><g transform="translate(-1.5 1.8) rotate(42)"><rect x="-6" y="-2" width="12" height="4" fill="#f26a6a" stroke="#301010" stroke-width="0.7"/><path d="M-3 -2 L-3 -0.5 M0 -2 L0 -0.5 M3 -2 L3 -0.5" stroke="#301010" stroke-width="0.8"/></g></g></svg>
<svg style="position:absolute;left:56px;top:72px" width="28" height="28" viewBox="0 0 28 28"><circle cx="14" cy="14" r="12" fill="#07313a"/><circle cx="14" cy="14" r="10.6" fill="url(#g_teal)"/><ellipse cx="14" cy="8.6" rx="8.64" ry="5.04" fill="url(#hl)"/><g transform="translate(14,14)"><path d="M5 -7 L-5 5 L6 5" fill="none" stroke="#fff" stroke-width="1.5"/><text x="2.5" y="3" font-size="3.5" fill="#fff" font-family="Liberation Sans">45°</text></g></svg>
<svg style="position:absolute;left:92px;top:72px" width="28" height="28" viewBox="0 0 28 28"><circle cx="14" cy="14" r="12" fill="#07313a"/><circle cx="14" cy="14" r="10.6" fill="url(#g_teal)"/><ellipse cx="14" cy="8.6" rx="8.64" ry="5.04" fill="url(#hl)"/><g transform="translate(14,14)"><path d="M-1 -7 L3 -7 L4 1 L0 1 Z M3 -4 L6.5 -4 L7 4 L3.5 4 Z" fill="#f4f4f4"/><text x="-8" y="0" font-size="7.5" font-weight="bold" fill="#111" font-family="Liberation Sans">A</text><text x="-3.5" y="4" font-size="7.5" font-weight="bold" fill="#111" font-family="Liberation Sans">B</text><text x="1" y="8" font-size="7.5" font-weight="bold" fill="#111" font-family="Liberation Sans">C</text></g></svg>
<svg style="position:absolute;left:128px;top:72px" width="28" height="28" viewBox="0 0 28 28"><circle cx="14" cy="14" r="12" fill="#07313a"/><circle cx="14" cy="14" r="10.6" fill="url(#g_teal)"/><ellipse cx="14" cy="8.6" rx="8.64" ry="5.04" fill="url(#hl)"/><g transform="translate(14,14)"><path d="M-2 -7 L2 -7 L3 2 L-1 2 Z M2 -4 L5.5 -4 L6 3 L2.5 3 Z" fill="#f4f4f4"/><rect x="-7" y="0" width="1.6" height="6" fill="#e00000"/><rect x="5.5" y="0" width="1.6" height="6" fill="#1010b0"/><path d="M-5.5 3 L5.5 3" stroke="#111" stroke-width="1.3"/></g></svg>
<svg style="position:absolute;left:178px;top:72px" width="28" height="28" viewBox="0 0 28 28"><circle cx="14" cy="14" r="12" fill="#8a6400"/><circle cx="14" cy="14" r="10.6" fill="url(#g_yellow)"/><ellipse cx="14" cy="8.6" rx="8.64" ry="5.04" fill="url(#hl)"/><g transform="translate(14,14)"><text x="0" y="6.2" font-family="Liberation Sans" font-weight="bold" font-size="17" fill="#fff" text-anchor="middle">Z</text></g></svg>
<svg style="position:absolute;left:214px;top:72px" width="28" height="28" viewBox="0 0 28 28"><circle cx="14" cy="14" r="12" fill="#8a6400"/><circle cx="14" cy="14" r="10.6" fill="url(#g_yellow)"/><ellipse cx="14" cy="8.6" rx="8.64" ry="5.04" fill="url(#hl)"/><g transform="translate(14,14)"><text x="0" y="6.2" font-family="Liberation Sans" font-weight="bold" font-size="17" fill="#fff" text-anchor="middle">N</text></g></svg>
<svg style="position:absolute;left:250px;top:72px" width="28" height="28" viewBox="0 0 28 28"><circle cx="14" cy="14" r="12" fill="#8a6400"/><circle cx="14" cy="14" r="10.6" fill="url(#g_yellow)"/><ellipse cx="14" cy="8.6" rx="8.64" ry="5.04" fill="url(#hl)"/><g transform="translate(14,14)"><text x="0" y="6.2" font-family="Liberation Sans" font-weight="bold" font-size="17" fill="#fff" text-anchor="middle">E</text></g></svg>
<svg style="position:absolute;left:1102px;top:72px" width="28" height="28" viewBox="0 0 28 28"><circle cx="14" cy="14" r="12" fill="#d4322a"/><circle cx="14" cy="14" r="10.6" fill="url(#g_red)"/><ellipse cx="14" cy="8.6" rx="8.64" ry="5.04" fill="url(#hl)"/><g transform="translate(14,14)"><circle r="6.5" fill="none" stroke="#fff" stroke-width="1.2"/><circle r="3.8" fill="none" stroke="#fff" stroke-width="1.2"/><path d="M-8 0 L8 0 M0 -8 L0 8" stroke="#fff" stroke-width="1.1"/></g></svg>
<svg style="position:absolute;left:1104px;top:713px" width="20" height="20" viewBox="0 0 20 20"><g transform="rotate(-45 10 10)"><rect x="5" y="4" width="10" height="10" rx="2" fill="#e4e6fb" stroke="#8c8ee0" stroke-width="1"/><rect x="6.5" y="14" width="2.2" height="5" rx="1" fill="#f3b020"/><rect x="11.3" y="14" width="2.2" height="5" rx="1" fill="#f3b020"/><path d="M10 4 L10 0" stroke="#8c8ee0" stroke-width="1.2"/></g></svg>
<div style="position:absolute;left:-2px;top:744px;width:4px;height:4px;border-radius:50%;background:#1c2230"></div>
</body></html>
